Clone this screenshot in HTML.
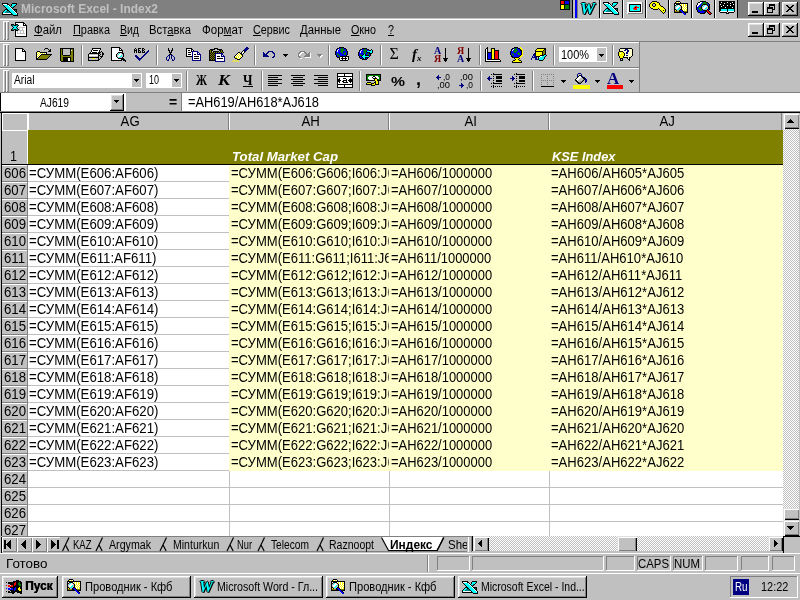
<!DOCTYPE html><html lang="ru"><head><meta charset="utf-8"><title>Microsoft Excel - Index2</title><style>
html,body{margin:0;padding:0}
body{width:800px;height:600px;overflow:hidden;position:relative;background:#c0c0c0;font-family:"Liberation Sans",sans-serif;font-size:12px;color:#000;-webkit-font-smoothing:none}
div,span,svg{position:absolute;box-sizing:border-box}
.t{white-space:nowrap;line-height:1}
.ui{font-size:12.5px}
.cell{font-size:14px;white-space:nowrap;overflow:hidden;line-height:17px;height:17px;transform:scaleX(0.943);transform-origin:0 0}
.hl{background:#fff}.sh{background:#808080}.bk{background:#000}
.raised{background:#c0c0c0;box-shadow:inset -1px -1px 0 #000,inset 1px 1px 0 #fff,inset -2px -2px 0 #808080,inset 2px 2px 0 #dfdfdf}
.raised2{background:#c0c0c0;box-shadow:inset -1px -1px 0 #000,inset 1px 1px 0 #dfdfdf,inset -2px -2px 0 #808080,inset 2px 2px 0 #fff}
.hsb{background:#c0c0c0;box-shadow:inset 1px 1px 0 #dfdfdf,inset 2px 2px 0 #fff,inset -1px 0 0 #000,inset -2px -1px 0 #808080}
.vsb{background:#c0c0c0;box-shadow:inset 1px 1px 0 #dfdfdf,inset 2px 2px 0 #fff,inset 0 -1px 0 #000,inset -1px -2px 0 #808080}
.sunk{box-shadow:inset -1px -1px 0 #fff,inset 1px 1px 0 #808080}
.sunk2{box-shadow:inset -1px -1px 0 #fff,inset 1px 1px 0 #808080,inset -2px -2px 0 #c0c0c0,inset 2px 2px 0 #000}
.dither{background:repeating-conic-gradient(#fff 0% 25%,#c0c0c0 0% 50%) 0 0/2px 2px}
.grip{width:3px;background:#c0c0c0;box-shadow:inset 1px 1px 0 #fff,inset -1px -1px 0 #808080}
.sep{width:2px;background:#fff;border-left:1px solid #808080}
u{text-decoration:underline;text-decoration-thickness:1px;text-underline-offset:1px}
</style></head><body><div id="r" style="left:0;top:0;width:800px;height:600px;overflow:hidden;will-change:transform">
<div class="" style="left:0px;top:0px;width:800px;height:18px;background:#808080"></div>
<svg style="left:2px;top:3px" width="16" height="13" viewBox="0 0 16 13" shape-rendering="crispEdges"><rect x="0" y="0" width="6" height="1" fill="#000"/><rect x="10" y="0" width="5" height="1" fill="#000"/><rect x="0" y="1" width="1" height="1" fill="#000"/><rect x="1" y="1" width="4" height="1" fill="#fff"/><rect x="5" y="1" width="2" height="1" fill="#000"/><rect x="9" y="1" width="1" height="1" fill="#000"/><rect x="10" y="1" width="4" height="1" fill="#00ffff"/><rect x="14" y="1" width="1" height="1" fill="#000"/><rect x="1" y="2" width="1" height="1" fill="#000"/><rect x="2" y="2" width="4" height="1" fill="#00ffff"/><rect x="6" y="2" width="1" height="1" fill="#fff"/><rect x="7" y="2" width="1" height="1" fill="#000"/><rect x="9" y="2" width="1" height="1" fill="#000"/><rect x="10" y="2" width="3" height="1" fill="#00ffff"/><rect x="13" y="2" width="1" height="1" fill="#000"/><rect x="2" y="3" width="1" height="1" fill="#000"/><rect x="3" y="3" width="4" height="1" fill="#00ffff"/><rect x="7" y="3" width="1" height="1" fill="#fff"/><rect x="8" y="3" width="1" height="1" fill="#000"/><rect x="9" y="3" width="2" height="1" fill="#00ffff"/><rect x="11" y="3" width="1" height="1" fill="#008080"/><rect x="12" y="3" width="1" height="1" fill="#000"/><rect x="3" y="4" width="1" height="1" fill="#000"/><rect x="4" y="4" width="4" height="1" fill="#00ffff"/><rect x="8" y="4" width="1" height="1" fill="#fff"/><rect x="9" y="4" width="1" height="1" fill="#000"/><rect x="10" y="4" width="1" height="1" fill="#008080"/><rect x="11" y="4" width="1" height="1" fill="#000"/><rect x="4" y="5" width="1" height="1" fill="#000"/><rect x="5" y="5" width="4" height="1" fill="#00ffff"/><rect x="9" y="5" width="1" height="1" fill="#fff"/><rect x="10" y="5" width="1" height="1" fill="#000"/><rect x="3" y="6" width="3" height="1" fill="#000"/><rect x="6" y="6" width="4" height="1" fill="#00ffff"/><rect x="10" y="6" width="1" height="1" fill="#fff"/><rect x="11" y="6" width="4" height="1" fill="#000"/><rect x="2" y="7" width="1" height="1" fill="#000"/><rect x="3" y="7" width="2" height="1" fill="#00ffff"/><rect x="5" y="7" width="2" height="1" fill="#000"/><rect x="7" y="7" width="4" height="1" fill="#00ffff"/><rect x="11" y="7" width="1" height="1" fill="#fff"/><rect x="12" y="7" width="1" height="1" fill="#000"/><rect x="13" y="7" width="1" height="1" fill="#008080"/><rect x="14" y="7" width="1" height="1" fill="#000"/><rect x="1" y="8" width="1" height="1" fill="#000"/><rect x="2" y="8" width="2" height="1" fill="#00ffff"/><rect x="4" y="8" width="3" height="1" fill="#008080"/><rect x="7" y="8" width="1" height="1" fill="#000"/><rect x="8" y="8" width="4" height="1" fill="#00ffff"/><rect x="12" y="8" width="1" height="1" fill="#fff"/><rect x="13" y="8" width="2" height="1" fill="#000"/><rect x="0" y="9" width="1" height="1" fill="#000"/><rect x="1" y="9" width="2" height="1" fill="#00ffff"/><rect x="3" y="9" width="5" height="1" fill="#008080"/><rect x="8" y="9" width="1" height="1" fill="#000"/><rect x="9" y="9" width="4" height="1" fill="#00ffff"/><rect x="13" y="9" width="1" height="1" fill="#fff"/><rect x="14" y="9" width="1" height="1" fill="#000"/><rect x="0" y="10" width="1" height="1" fill="#000"/><rect x="1" y="10" width="8" height="1" fill="#fff"/><rect x="9" y="10" width="1" height="1" fill="#000"/><rect x="10" y="10" width="4" height="1" fill="#00ffff"/><rect x="14" y="10" width="1" height="1" fill="#fff"/><rect x="15" y="10" width="1" height="1" fill="#000"/><rect x="0" y="11" width="11" height="1" fill="#000"/><rect x="11" y="11" width="4" height="1" fill="#00ffff"/><rect x="15" y="11" width="1" height="1" fill="#000"/><rect x="11" y="12" width="5" height="1" fill="#000"/></svg>
<span class="t" style="left:21px;top:2px;font-weight:bold;font-size:13px;color:#c0c0c0;transform:scaleX(0.9205);transform-origin:0 0">Microsoft Excel - Index2</span>
<svg style="left:560px;top:0px" width="10" height="10" viewBox="0 0 10 10" shape-rendering="crispEdges"><rect x="0" y="0" width="10" height="1" fill="#000"/><rect x="0" y="1" width="1" height="1" fill="#000"/><rect x="1" y="1" width="3" height="1" fill="#ff0000"/><rect x="4" y="1" width="1" height="1" fill="#000"/><rect x="5" y="1" width="4" height="1" fill="#0000ff"/><rect x="9" y="1" width="1" height="1" fill="#000"/><rect x="0" y="2" width="1" height="1" fill="#000"/><rect x="1" y="2" width="3" height="1" fill="#ff0000"/><rect x="4" y="2" width="1" height="1" fill="#000"/><rect x="5" y="2" width="4" height="1" fill="#0000ff"/><rect x="9" y="2" width="1" height="1" fill="#000"/><rect x="0" y="3" width="1" height="1" fill="#000"/><rect x="1" y="3" width="3" height="1" fill="#ff0000"/><rect x="4" y="3" width="1" height="1" fill="#000"/><rect x="5" y="3" width="4" height="1" fill="#0000ff"/><rect x="9" y="3" width="1" height="1" fill="#000"/><rect x="0" y="4" width="10" height="1" fill="#000"/><rect x="0" y="5" width="1" height="1" fill="#000"/><rect x="1" y="5" width="3" height="1" fill="#ffff00"/><rect x="4" y="5" width="1" height="1" fill="#000"/><rect x="5" y="5" width="4" height="1" fill="#008000"/><rect x="9" y="5" width="1" height="1" fill="#000"/><rect x="0" y="6" width="1" height="1" fill="#000"/><rect x="1" y="6" width="3" height="1" fill="#ffff00"/><rect x="4" y="6" width="1" height="1" fill="#000"/><rect x="5" y="6" width="4" height="1" fill="#008000"/><rect x="9" y="6" width="1" height="1" fill="#000"/><rect x="0" y="7" width="1" height="1" fill="#000"/><rect x="1" y="7" width="3" height="1" fill="#ffff00"/><rect x="4" y="7" width="1" height="1" fill="#000"/><rect x="5" y="7" width="4" height="1" fill="#008000"/><rect x="9" y="7" width="1" height="1" fill="#000"/><rect x="0" y="8" width="1" height="1" fill="#000"/><rect x="1" y="8" width="3" height="1" fill="#ffff00"/><rect x="4" y="8" width="1" height="1" fill="#000"/><rect x="5" y="8" width="4" height="1" fill="#008000"/><rect x="9" y="8" width="1" height="1" fill="#000"/><rect x="0" y="9" width="10" height="1" fill="#000"/></svg>
<div class="bk" style="left:572px;top:0px;width:1px;height:18px;"></div>
<div class="" style="left:573px;top:0px;width:2px;height:18px;background:#c0c0c0"></div>
<div class="" style="left:575px;top:0px;width:2px;height:18px;background:#0000ff"></div>
<div class="" style="left:578px;top:0px;width:21px;height:18px;background:#c0c0c0"></div>
<div class="bk" style="left:599px;top:0px;width:1px;height:18px;"></div>
<div class="hl" style="left:600px;top:0px;width:1px;height:18px;"></div>
<div class="" style="left:601px;top:0px;width:21px;height:18px;background:#c0c0c0"></div>
<svg style="left:603px;top:2px" width="16" height="13" viewBox="0 0 16 13" shape-rendering="crispEdges"><rect x="0" y="0" width="6" height="1" fill="#000"/><rect x="10" y="0" width="5" height="1" fill="#000"/><rect x="0" y="1" width="1" height="1" fill="#000"/><rect x="1" y="1" width="4" height="1" fill="#fff"/><rect x="5" y="1" width="2" height="1" fill="#000"/><rect x="9" y="1" width="1" height="1" fill="#000"/><rect x="10" y="1" width="4" height="1" fill="#00ffff"/><rect x="14" y="1" width="1" height="1" fill="#000"/><rect x="1" y="2" width="1" height="1" fill="#000"/><rect x="2" y="2" width="4" height="1" fill="#00ffff"/><rect x="6" y="2" width="1" height="1" fill="#fff"/><rect x="7" y="2" width="1" height="1" fill="#000"/><rect x="9" y="2" width="1" height="1" fill="#000"/><rect x="10" y="2" width="3" height="1" fill="#00ffff"/><rect x="13" y="2" width="1" height="1" fill="#000"/><rect x="2" y="3" width="1" height="1" fill="#000"/><rect x="3" y="3" width="4" height="1" fill="#00ffff"/><rect x="7" y="3" width="1" height="1" fill="#fff"/><rect x="8" y="3" width="1" height="1" fill="#000"/><rect x="9" y="3" width="2" height="1" fill="#00ffff"/><rect x="11" y="3" width="1" height="1" fill="#008080"/><rect x="12" y="3" width="1" height="1" fill="#000"/><rect x="3" y="4" width="1" height="1" fill="#000"/><rect x="4" y="4" width="4" height="1" fill="#00ffff"/><rect x="8" y="4" width="1" height="1" fill="#fff"/><rect x="9" y="4" width="1" height="1" fill="#000"/><rect x="10" y="4" width="1" height="1" fill="#008080"/><rect x="11" y="4" width="1" height="1" fill="#000"/><rect x="4" y="5" width="1" height="1" fill="#000"/><rect x="5" y="5" width="4" height="1" fill="#00ffff"/><rect x="9" y="5" width="1" height="1" fill="#fff"/><rect x="10" y="5" width="1" height="1" fill="#000"/><rect x="3" y="6" width="3" height="1" fill="#000"/><rect x="6" y="6" width="4" height="1" fill="#00ffff"/><rect x="10" y="6" width="1" height="1" fill="#fff"/><rect x="11" y="6" width="4" height="1" fill="#000"/><rect x="2" y="7" width="1" height="1" fill="#000"/><rect x="3" y="7" width="2" height="1" fill="#00ffff"/><rect x="5" y="7" width="2" height="1" fill="#000"/><rect x="7" y="7" width="4" height="1" fill="#00ffff"/><rect x="11" y="7" width="1" height="1" fill="#fff"/><rect x="12" y="7" width="1" height="1" fill="#000"/><rect x="13" y="7" width="1" height="1" fill="#008080"/><rect x="14" y="7" width="1" height="1" fill="#000"/><rect x="1" y="8" width="1" height="1" fill="#000"/><rect x="2" y="8" width="2" height="1" fill="#00ffff"/><rect x="4" y="8" width="3" height="1" fill="#008080"/><rect x="7" y="8" width="1" height="1" fill="#000"/><rect x="8" y="8" width="4" height="1" fill="#00ffff"/><rect x="12" y="8" width="1" height="1" fill="#fff"/><rect x="13" y="8" width="2" height="1" fill="#000"/><rect x="0" y="9" width="1" height="1" fill="#000"/><rect x="1" y="9" width="2" height="1" fill="#00ffff"/><rect x="3" y="9" width="5" height="1" fill="#008080"/><rect x="8" y="9" width="1" height="1" fill="#000"/><rect x="9" y="9" width="4" height="1" fill="#00ffff"/><rect x="13" y="9" width="1" height="1" fill="#fff"/><rect x="14" y="9" width="1" height="1" fill="#000"/><rect x="0" y="10" width="1" height="1" fill="#000"/><rect x="1" y="10" width="8" height="1" fill="#fff"/><rect x="9" y="10" width="1" height="1" fill="#000"/><rect x="10" y="10" width="4" height="1" fill="#00ffff"/><rect x="14" y="10" width="1" height="1" fill="#fff"/><rect x="15" y="10" width="1" height="1" fill="#000"/><rect x="0" y="11" width="11" height="1" fill="#000"/><rect x="11" y="11" width="4" height="1" fill="#00ffff"/><rect x="15" y="11" width="1" height="1" fill="#000"/><rect x="11" y="12" width="5" height="1" fill="#000"/></svg>
<div class="bk" style="left:622px;top:0px;width:1px;height:18px;"></div>
<div class="hl" style="left:623px;top:0px;width:1px;height:18px;"></div>
<div class="" style="left:624px;top:0px;width:21px;height:18px;background:#c0c0c0"></div>
<svg style="left:627px;top:2px" width="16" height="12" viewBox="0 0 16 12" shape-rendering="crispEdges"><rect x="0" y="0" width="15" height="1" fill="#fff"/><rect x="15" y="0" width="1" height="1" fill="#808080"/><rect x="0" y="1" width="15" height="1" fill="#fff"/><rect x="15" y="1" width="1" height="1" fill="#808080"/><rect x="0" y="2" width="2" height="1" fill="#fff"/><rect x="2" y="2" width="12" height="1" fill="#000"/><rect x="14" y="2" width="1" height="1" fill="#fff"/><rect x="15" y="2" width="1" height="1" fill="#808080"/><rect x="0" y="3" width="2" height="1" fill="#fff"/><rect x="2" y="3" width="1" height="1" fill="#000"/><rect x="3" y="3" width="10" height="1" fill="#00ffff"/><rect x="13" y="3" width="1" height="1" fill="#000"/><rect x="14" y="3" width="1" height="1" fill="#fff"/><rect x="15" y="3" width="1" height="1" fill="#808080"/><rect x="0" y="4" width="2" height="1" fill="#fff"/><rect x="2" y="4" width="1" height="1" fill="#000"/><rect x="3" y="4" width="5" height="1" fill="#00ffff"/><rect x="8" y="4" width="2" height="1" fill="#ff0000"/><rect x="10" y="4" width="3" height="1" fill="#00ffff"/><rect x="13" y="4" width="1" height="1" fill="#000"/><rect x="14" y="4" width="1" height="1" fill="#fff"/><rect x="15" y="4" width="1" height="1" fill="#808080"/><rect x="0" y="5" width="2" height="1" fill="#fff"/><rect x="2" y="5" width="1" height="1" fill="#000"/><rect x="3" y="5" width="4" height="1" fill="#00ffff"/><rect x="7" y="5" width="1" height="1" fill="#ff0000"/><rect x="8" y="5" width="1" height="1" fill="#000"/><rect x="9" y="5" width="3" height="1" fill="#ff0000"/><rect x="12" y="5" width="1" height="1" fill="#00ffff"/><rect x="13" y="5" width="1" height="1" fill="#000"/><rect x="14" y="5" width="1" height="1" fill="#fff"/><rect x="15" y="5" width="1" height="1" fill="#808080"/><rect x="0" y="6" width="2" height="1" fill="#fff"/><rect x="2" y="6" width="1" height="1" fill="#000"/><rect x="3" y="6" width="3" height="1" fill="#00ffff"/><rect x="6" y="6" width="4" height="1" fill="#ff0000"/><rect x="10" y="6" width="3" height="1" fill="#00ffff"/><rect x="13" y="6" width="1" height="1" fill="#000"/><rect x="14" y="6" width="1" height="1" fill="#fff"/><rect x="15" y="6" width="1" height="1" fill="#808080"/><rect x="0" y="7" width="2" height="1" fill="#fff"/><rect x="2" y="7" width="1" height="1" fill="#000"/><rect x="3" y="7" width="4" height="1" fill="#00ffff"/><rect x="7" y="7" width="3" height="1" fill="#ff0000"/><rect x="10" y="7" width="3" height="1" fill="#00ffff"/><rect x="13" y="7" width="1" height="1" fill="#000"/><rect x="14" y="7" width="1" height="1" fill="#fff"/><rect x="15" y="7" width="1" height="1" fill="#808080"/><rect x="0" y="8" width="2" height="1" fill="#fff"/><rect x="2" y="8" width="1" height="1" fill="#000"/><rect x="3" y="8" width="10" height="1" fill="#00ffff"/><rect x="13" y="8" width="1" height="1" fill="#000"/><rect x="14" y="8" width="1" height="1" fill="#fff"/><rect x="15" y="8" width="1" height="1" fill="#808080"/><rect x="0" y="9" width="2" height="1" fill="#fff"/><rect x="2" y="9" width="12" height="1" fill="#000"/><rect x="14" y="9" width="1" height="1" fill="#fff"/><rect x="15" y="9" width="1" height="1" fill="#808080"/><rect x="0" y="10" width="15" height="1" fill="#fff"/><rect x="15" y="10" width="1" height="1" fill="#808080"/><rect x="0" y="11" width="1" height="1" fill="#fff"/><rect x="1" y="11" width="15" height="1" fill="#808080"/></svg>
<div class="bk" style="left:645px;top:0px;width:1px;height:18px;"></div>
<div class="hl" style="left:646px;top:0px;width:1px;height:18px;"></div>
<div class="" style="left:647px;top:0px;width:21px;height:18px;background:#c0c0c0"></div>
<svg style="left:649px;top:1px" width="17" height="13" viewBox="0 0 17 13" shape-rendering="crispEdges"><rect x="3" y="0" width="5" height="1" fill="#000"/><rect x="2" y="1" width="1" height="1" fill="#000"/><rect x="3" y="1" width="5" height="1" fill="#ffff00"/><rect x="8" y="1" width="2" height="1" fill="#000"/><rect x="1" y="2" width="1" height="1" fill="#000"/><rect x="2" y="2" width="2" height="1" fill="#ffff00"/><rect x="4" y="2" width="2" height="1" fill="#000"/><rect x="6" y="2" width="4" height="1" fill="#ffff00"/><rect x="10" y="2" width="1" height="1" fill="#000"/><rect x="0" y="3" width="1" height="1" fill="#000"/><rect x="1" y="3" width="2" height="1" fill="#ffff00"/><rect x="3" y="3" width="1" height="1" fill="#000"/><rect x="6" y="3" width="1" height="1" fill="#000"/><rect x="7" y="3" width="3" height="1" fill="#ffff00"/><rect x="10" y="3" width="1" height="1" fill="#000"/><rect x="0" y="4" width="1" height="1" fill="#000"/><rect x="1" y="4" width="2" height="1" fill="#ffff00"/><rect x="3" y="4" width="1" height="1" fill="#000"/><rect x="6" y="4" width="1" height="1" fill="#000"/><rect x="7" y="4" width="4" height="1" fill="#ffff00"/><rect x="11" y="4" width="1" height="1" fill="#000"/><rect x="0" y="5" width="1" height="1" fill="#000"/><rect x="1" y="5" width="3" height="1" fill="#ffff00"/><rect x="4" y="5" width="2" height="1" fill="#000"/><rect x="6" y="5" width="6" height="1" fill="#ffff00"/><rect x="12" y="5" width="2" height="1" fill="#000"/><rect x="1" y="6" width="1" height="1" fill="#000"/><rect x="2" y="6" width="12" height="1" fill="#ffff00"/><rect x="14" y="6" width="1" height="1" fill="#000"/><rect x="2" y="7" width="2" height="1" fill="#000"/><rect x="4" y="7" width="5" height="1" fill="#ffff00"/><rect x="9" y="7" width="1" height="1" fill="#000"/><rect x="10" y="7" width="5" height="1" fill="#ffff00"/><rect x="15" y="7" width="1" height="1" fill="#000"/><rect x="4" y="8" width="5" height="1" fill="#000"/><rect x="10" y="8" width="1" height="1" fill="#000"/><rect x="11" y="8" width="5" height="1" fill="#ffff00"/><rect x="16" y="8" width="1" height="1" fill="#000"/><rect x="11" y="9" width="1" height="1" fill="#000"/><rect x="12" y="9" width="2" height="1" fill="#ffff00"/><rect x="14" y="9" width="1" height="1" fill="#000"/><rect x="15" y="9" width="1" height="1" fill="#ffff00"/><rect x="16" y="9" width="1" height="1" fill="#000"/><rect x="12" y="10" width="1" height="1" fill="#000"/><rect x="13" y="10" width="3" height="1" fill="#ffff00"/><rect x="16" y="10" width="1" height="1" fill="#000"/><rect x="13" y="11" width="1" height="1" fill="#000"/><rect x="14" y="11" width="1" height="1" fill="#ffff00"/><rect x="15" y="11" width="1" height="1" fill="#000"/><rect x="14" y="12" width="1" height="1" fill="#000"/></svg>
<div class="bk" style="left:668px;top:0px;width:1px;height:18px;"></div>
<div class="hl" style="left:669px;top:0px;width:1px;height:18px;"></div>
<div class="" style="left:670px;top:0px;width:21px;height:18px;background:#c0c0c0"></div>
<svg style="left:674px;top:1px" width="16" height="14" viewBox="0 0 16 14" shape-rendering="crispEdges"><rect x="2" y="0" width="4" height="1" fill="#000"/><rect x="1" y="1" width="1" height="1" fill="#000"/><rect x="2" y="1" width="1" height="1" fill="#ffff00"/><rect x="3" y="1" width="1" height="1" fill="#fff"/><rect x="4" y="1" width="1" height="1" fill="#ffff00"/><rect x="5" y="1" width="1" height="1" fill="#fff"/><rect x="6" y="1" width="1" height="1" fill="#000"/><rect x="0" y="2" width="14" height="1" fill="#000"/><rect x="0" y="3" width="1" height="1" fill="#000"/><rect x="1" y="3" width="1" height="1" fill="#fff"/><rect x="2" y="3" width="4" height="1" fill="#000"/><rect x="6" y="3" width="1" height="1" fill="#fff"/><rect x="7" y="3" width="1" height="1" fill="#ffff00"/><rect x="8" y="3" width="1" height="1" fill="#fff"/><rect x="9" y="3" width="1" height="1" fill="#ffff00"/><rect x="10" y="3" width="1" height="1" fill="#fff"/><rect x="11" y="3" width="1" height="1" fill="#ffff00"/><rect x="12" y="3" width="1" height="1" fill="#fff"/><rect x="13" y="3" width="1" height="1" fill="#000"/><rect x="0" y="4" width="2" height="1" fill="#000"/><rect x="2" y="4" width="1" height="1" fill="#c0c0c0"/><rect x="3" y="4" width="1" height="1" fill="#00ffff"/><rect x="4" y="4" width="1" height="1" fill="#fff"/><rect x="5" y="4" width="1" height="1" fill="#c0c0c0"/><rect x="6" y="4" width="1" height="1" fill="#000"/><rect x="7" y="4" width="1" height="1" fill="#ffff00"/><rect x="8" y="4" width="1" height="1" fill="#fff"/><rect x="9" y="4" width="1" height="1" fill="#ffff00"/><rect x="10" y="4" width="1" height="1" fill="#fff"/><rect x="11" y="4" width="2" height="1" fill="#ffff00"/><rect x="13" y="4" width="1" height="1" fill="#000"/><rect x="0" y="5" width="1" height="1" fill="#000"/><rect x="1" y="5" width="1" height="1" fill="#c0c0c0"/><rect x="2" y="5" width="1" height="1" fill="#00ffff"/><rect x="3" y="5" width="3" height="1" fill="#fff"/><rect x="6" y="5" width="1" height="1" fill="#c0c0c0"/><rect x="7" y="5" width="1" height="1" fill="#000"/><rect x="8" y="5" width="1" height="1" fill="#fff"/><rect x="9" y="5" width="1" height="1" fill="#ffff00"/><rect x="10" y="5" width="1" height="1" fill="#fff"/><rect x="11" y="5" width="1" height="1" fill="#ffff00"/><rect x="12" y="5" width="1" height="1" fill="#fff"/><rect x="13" y="5" width="1" height="1" fill="#000"/><rect x="0" y="6" width="1" height="1" fill="#000"/><rect x="1" y="6" width="1" height="1" fill="#c0c0c0"/><rect x="2" y="6" width="3" height="1" fill="#fff"/><rect x="5" y="6" width="1" height="1" fill="#00ffff"/><rect x="6" y="6" width="1" height="1" fill="#c0c0c0"/><rect x="7" y="6" width="1" height="1" fill="#000"/><rect x="8" y="6" width="1" height="1" fill="#ffff00"/><rect x="9" y="6" width="1" height="1" fill="#fff"/><rect x="10" y="6" width="1" height="1" fill="#ffff00"/><rect x="11" y="6" width="1" height="1" fill="#fff"/><rect x="12" y="6" width="1" height="1" fill="#ffff00"/><rect x="13" y="6" width="1" height="1" fill="#000"/><rect x="0" y="7" width="1" height="1" fill="#000"/><rect x="1" y="7" width="1" height="1" fill="#c0c0c0"/><rect x="2" y="7" width="2" height="1" fill="#fff"/><rect x="4" y="7" width="2" height="1" fill="#00ffff"/><rect x="6" y="7" width="1" height="1" fill="#c0c0c0"/><rect x="7" y="7" width="1" height="1" fill="#000"/><rect x="8" y="7" width="1" height="1" fill="#fff"/><rect x="9" y="7" width="1" height="1" fill="#ffff00"/><rect x="10" y="7" width="1" height="1" fill="#fff"/><rect x="11" y="7" width="1" height="1" fill="#ffff00"/><rect x="12" y="7" width="1" height="1" fill="#fff"/><rect x="13" y="7" width="1" height="1" fill="#000"/><rect x="0" y="8" width="2" height="1" fill="#000"/><rect x="2" y="8" width="1" height="1" fill="#c0c0c0"/><rect x="3" y="8" width="2" height="1" fill="#00ffff"/><rect x="5" y="8" width="1" height="1" fill="#c0c0c0"/><rect x="6" y="8" width="2" height="1" fill="#000"/><rect x="8" y="8" width="1" height="1" fill="#ffff00"/><rect x="9" y="8" width="1" height="1" fill="#fff"/><rect x="10" y="8" width="1" height="1" fill="#ffff00"/><rect x="11" y="8" width="1" height="1" fill="#fff"/><rect x="12" y="8" width="1" height="1" fill="#ffff00"/><rect x="13" y="8" width="1" height="1" fill="#000"/><rect x="0" y="9" width="1" height="1" fill="#000"/><rect x="1" y="9" width="1" height="1" fill="#ffff00"/><rect x="2" y="9" width="1" height="1" fill="#000"/><rect x="3" y="9" width="2" height="1" fill="#c0c0c0"/><rect x="5" y="9" width="1" height="1" fill="#000"/><rect x="6" y="9" width="2" height="1" fill="#0000ff"/><rect x="8" y="9" width="1" height="1" fill="#000"/><rect x="9" y="9" width="1" height="1" fill="#fff"/><rect x="10" y="9" width="1" height="1" fill="#ffff00"/><rect x="11" y="9" width="1" height="1" fill="#fff"/><rect x="12" y="9" width="1" height="1" fill="#ffff00"/><rect x="13" y="9" width="1" height="1" fill="#000"/><rect x="0" y="10" width="1" height="1" fill="#000"/><rect x="1" y="10" width="4" height="1" fill="#808000"/><rect x="5" y="10" width="2" height="1" fill="#000"/><rect x="7" y="10" width="2" height="1" fill="#0000ff"/><rect x="9" y="10" width="1" height="1" fill="#000"/><rect x="10" y="10" width="3" height="1" fill="#808000"/><rect x="13" y="10" width="1" height="1" fill="#000"/><rect x="0" y="11" width="8" height="1" fill="#000"/><rect x="8" y="11" width="2" height="1" fill="#0000ff"/><rect x="10" y="11" width="4" height="1" fill="#000"/><rect x="9" y="12" width="2" height="1" fill="#0000ff"/><rect x="11" y="12" width="1" height="1" fill="#000"/><rect x="10" y="13" width="2" height="1" fill="#0000ff"/></svg>
<div class="bk" style="left:691px;top:0px;width:1px;height:18px;"></div>
<div class="hl" style="left:692px;top:0px;width:1px;height:18px;"></div>
<div class="" style="left:693px;top:0px;width:21px;height:18px;background:#c0c0c0"></div>
<svg style="left:696px;top:1px" width="16" height="14" viewBox="0 0 16 14" shape-rendering="crispEdges"><rect x="4" y="0" width="6" height="1" fill="#000"/><rect x="2" y="1" width="2" height="1" fill="#000"/><rect x="4" y="1" width="2" height="1" fill="#fff"/><rect x="6" y="1" width="1" height="1" fill="#0000ff"/><rect x="7" y="1" width="3" height="1" fill="#008000"/><rect x="10" y="1" width="2" height="1" fill="#000"/><rect x="1" y="2" width="1" height="1" fill="#000"/><rect x="2" y="2" width="3" height="1" fill="#fff"/><rect x="5" y="2" width="1" height="1" fill="#0000ff"/><rect x="6" y="2" width="5" height="1" fill="#008000"/><rect x="11" y="2" width="1" height="1" fill="#0000ff"/><rect x="12" y="2" width="1" height="1" fill="#000"/><rect x="1" y="3" width="1" height="1" fill="#000"/><rect x="2" y="3" width="2" height="1" fill="#fff"/><rect x="4" y="3" width="2" height="1" fill="#0000ff"/><rect x="6" y="3" width="1" height="1" fill="#008000"/><rect x="7" y="3" width="4" height="1" fill="#000"/><rect x="11" y="3" width="1" height="1" fill="#008000"/><rect x="12" y="3" width="1" height="1" fill="#0000ff"/><rect x="13" y="3" width="1" height="1" fill="#000"/><rect x="0" y="4" width="1" height="1" fill="#000"/><rect x="1" y="4" width="2" height="1" fill="#fff"/><rect x="3" y="4" width="2" height="1" fill="#0000ff"/><rect x="5" y="4" width="1" height="1" fill="#008000"/><rect x="6" y="4" width="1" height="1" fill="#000"/><rect x="7" y="4" width="1" height="1" fill="#c0c0c0"/><rect x="8" y="4" width="1" height="1" fill="#00ffff"/><rect x="9" y="4" width="1" height="1" fill="#fff"/><rect x="10" y="4" width="1" height="1" fill="#c0c0c0"/><rect x="11" y="4" width="1" height="1" fill="#000"/><rect x="12" y="4" width="1" height="1" fill="#0000ff"/><rect x="13" y="4" width="1" height="1" fill="#000"/><rect x="0" y="5" width="1" height="1" fill="#000"/><rect x="1" y="5" width="1" height="1" fill="#fff"/><rect x="2" y="5" width="3" height="1" fill="#0000ff"/><rect x="5" y="5" width="1" height="1" fill="#000"/><rect x="6" y="5" width="1" height="1" fill="#c0c0c0"/><rect x="7" y="5" width="1" height="1" fill="#00ffff"/><rect x="8" y="5" width="3" height="1" fill="#fff"/><rect x="11" y="5" width="1" height="1" fill="#c0c0c0"/><rect x="12" y="5" width="2" height="1" fill="#000"/><rect x="0" y="6" width="1" height="1" fill="#000"/><rect x="1" y="6" width="2" height="1" fill="#0000ff"/><rect x="3" y="6" width="2" height="1" fill="#008000"/><rect x="5" y="6" width="1" height="1" fill="#000"/><rect x="6" y="6" width="1" height="1" fill="#c0c0c0"/><rect x="7" y="6" width="3" height="1" fill="#fff"/><rect x="10" y="6" width="1" height="1" fill="#00ffff"/><rect x="11" y="6" width="1" height="1" fill="#c0c0c0"/><rect x="12" y="6" width="2" height="1" fill="#000"/><rect x="0" y="7" width="1" height="1" fill="#000"/><rect x="1" y="7" width="1" height="1" fill="#0000ff"/><rect x="2" y="7" width="3" height="1" fill="#008000"/><rect x="5" y="7" width="1" height="1" fill="#000"/><rect x="6" y="7" width="1" height="1" fill="#c0c0c0"/><rect x="7" y="7" width="2" height="1" fill="#fff"/><rect x="9" y="7" width="2" height="1" fill="#00ffff"/><rect x="11" y="7" width="1" height="1" fill="#c0c0c0"/><rect x="12" y="7" width="2" height="1" fill="#000"/><rect x="0" y="8" width="1" height="1" fill="#000"/><rect x="1" y="8" width="2" height="1" fill="#0000ff"/><rect x="3" y="8" width="3" height="1" fill="#008000"/><rect x="6" y="8" width="1" height="1" fill="#000"/><rect x="7" y="8" width="1" height="1" fill="#c0c0c0"/><rect x="8" y="8" width="1" height="1" fill="#00ffff"/><rect x="9" y="8" width="2" height="1" fill="#c0c0c0"/><rect x="11" y="8" width="1" height="1" fill="#000"/><rect x="12" y="8" width="1" height="1" fill="#0000ff"/><rect x="13" y="8" width="1" height="1" fill="#000"/><rect x="1" y="9" width="1" height="1" fill="#000"/><rect x="2" y="9" width="2" height="1" fill="#0000ff"/><rect x="4" y="9" width="2" height="1" fill="#008000"/><rect x="6" y="9" width="1" height="1" fill="#0000ff"/><rect x="7" y="9" width="4" height="1" fill="#000"/><rect x="11" y="9" width="1" height="1" fill="#ff0000"/><rect x="12" y="9" width="1" height="1" fill="#000"/><rect x="1" y="10" width="1" height="1" fill="#000"/><rect x="2" y="10" width="7" height="1" fill="#0000ff"/><rect x="9" y="10" width="2" height="1" fill="#000"/><rect x="11" y="10" width="2" height="1" fill="#ff0000"/><rect x="13" y="10" width="1" height="1" fill="#000"/><rect x="2" y="11" width="2" height="1" fill="#000"/><rect x="4" y="11" width="4" height="1" fill="#0000ff"/><rect x="8" y="11" width="2" height="1" fill="#000"/><rect x="11" y="11" width="1" height="1" fill="#000"/><rect x="12" y="11" width="2" height="1" fill="#ff0000"/><rect x="14" y="11" width="1" height="1" fill="#000"/><rect x="4" y="12" width="5" height="1" fill="#000"/><rect x="12" y="12" width="1" height="1" fill="#000"/><rect x="13" y="12" width="2" height="1" fill="#ff0000"/><rect x="15" y="12" width="1" height="1" fill="#000"/><rect x="13" y="13" width="2" height="1" fill="#000"/></svg>
<div class="bk" style="left:714px;top:0px;width:1px;height:18px;"></div>
<div class="hl" style="left:715px;top:0px;width:1px;height:18px;"></div>
<div class="" style="left:716px;top:0px;width:21px;height:18px;background:#c0c0c0"></div>
<svg style="left:719px;top:1px" width="16" height="13" viewBox="0 0 16 13" shape-rendering="crispEdges"><rect x="0" y="0" width="16" height="1" fill="#000"/><rect x="0" y="1" width="2" height="1" fill="#000"/><rect x="2" y="1" width="1" height="1" fill="#fff"/><rect x="3" y="1" width="5" height="1" fill="#000"/><rect x="8" y="1" width="1" height="1" fill="#fff"/><rect x="9" y="1" width="4" height="1" fill="#000"/><rect x="13" y="1" width="1" height="1" fill="#fff"/><rect x="14" y="1" width="2" height="1" fill="#000"/><rect x="0" y="2" width="5" height="1" fill="#000"/><rect x="5" y="2" width="1" height="1" fill="#fff"/><rect x="6" y="2" width="5" height="1" fill="#000"/><rect x="11" y="2" width="1" height="1" fill="#fff"/><rect x="12" y="2" width="4" height="1" fill="#000"/><rect x="0" y="3" width="1" height="1" fill="#000"/><rect x="1" y="3" width="1" height="1" fill="#fff"/><rect x="2" y="3" width="12" height="1" fill="#000"/><rect x="14" y="3" width="1" height="1" fill="#fff"/><rect x="15" y="3" width="1" height="1" fill="#000"/><rect x="0" y="4" width="4" height="1" fill="#000"/><rect x="4" y="4" width="1" height="1" fill="#fff"/><rect x="5" y="4" width="3" height="1" fill="#000"/><rect x="8" y="4" width="1" height="1" fill="#fff"/><rect x="9" y="4" width="2" height="1" fill="#000"/><rect x="11" y="4" width="1" height="1" fill="#fff"/><rect x="12" y="4" width="4" height="1" fill="#000"/><rect x="0" y="5" width="2" height="1" fill="#000"/><rect x="2" y="5" width="1" height="1" fill="#fff"/><rect x="3" y="5" width="13" height="1" fill="#000"/><rect x="0" y="6" width="6" height="1" fill="#000"/><rect x="6" y="6" width="1" height="1" fill="#fff"/><rect x="7" y="6" width="6" height="1" fill="#000"/><rect x="13" y="6" width="1" height="1" fill="#fff"/><rect x="14" y="6" width="2" height="1" fill="#000"/><rect x="0" y="7" width="16" height="1" fill="#000"/><rect x="0" y="8" width="2" height="1" fill="#000"/><rect x="2" y="8" width="6" height="1" fill="#00ffff"/><rect x="8" y="8" width="1" height="1" fill="#000"/><rect x="9" y="8" width="6" height="1" fill="#00ffff"/><rect x="15" y="8" width="1" height="1" fill="#000"/><rect x="0" y="9" width="2" height="1" fill="#000"/><rect x="2" y="9" width="6" height="1" fill="#00ffff"/><rect x="8" y="9" width="1" height="1" fill="#000"/><rect x="9" y="9" width="6" height="1" fill="#00ffff"/><rect x="15" y="9" width="1" height="1" fill="#000"/><rect x="0" y="10" width="1" height="1" fill="#000"/><rect x="1" y="10" width="7" height="1" fill="#fff"/><rect x="8" y="10" width="1" height="1" fill="#000"/><rect x="9" y="10" width="6" height="1" fill="#fff"/><rect x="15" y="10" width="1" height="1" fill="#000"/><rect x="1" y="11" width="7" height="1" fill="#000"/><rect x="8" y="11" width="1" height="1" fill="#fff"/><rect x="9" y="11" width="6" height="1" fill="#000"/><rect x="7" y="12" width="3" height="1" fill="#000"/></svg>
<div class="bk" style="left:737px;top:0px;width:1px;height:18px;"></div>
<span class="t" style="left:580px;top:0px;font-family:'Liberation Serif',serif;font-weight:bold;font-style:italic;font-size:17px;color:#00ffff;text-shadow:1px 0 #000,-1px 0 #000,0 1px #000,0 -1px #000,1px 1px #000;transform:scaleX(0.9917);transform-origin:0 0">W</span>
<div class="raised" style="left:748px;top:2px;width:16px;height:14px;"></div>
<svg style="left:748px;top:2px" width="16" height="11" viewBox="0 0 16 11" shape-rendering="crispEdges"><rect x="4" y="9" width="6" height="1" fill="#000"/><rect x="4" y="10" width="6" height="1" fill="#000"/></svg>
<div class="raised" style="left:764px;top:2px;width:16px;height:14px;"></div>
<svg style="left:764px;top:2px" width="16" height="11" viewBox="0 0 16 11" shape-rendering="crispEdges"><rect x="5" y="2" width="6" height="1" fill="#000"/><rect x="5" y="3" width="6" height="1" fill="#000"/><rect x="5" y="4" width="1" height="1" fill="#000"/><rect x="10" y="4" width="1" height="1" fill="#000"/><rect x="3" y="5" width="6" height="1" fill="#000"/><rect x="10" y="5" width="1" height="1" fill="#000"/><rect x="3" y="6" width="6" height="1" fill="#000"/><rect x="10" y="6" width="1" height="1" fill="#000"/><rect x="3" y="7" width="1" height="1" fill="#000"/><rect x="8" y="7" width="3" height="1" fill="#000"/><rect x="3" y="8" width="1" height="1" fill="#000"/><rect x="8" y="8" width="1" height="1" fill="#000"/><rect x="3" y="9" width="1" height="1" fill="#000"/><rect x="8" y="9" width="1" height="1" fill="#000"/><rect x="3" y="10" width="6" height="1" fill="#000"/></svg>
<div class="raised" style="left:782px;top:2px;width:16px;height:14px;"></div>
<svg style="left:782px;top:2px" width="16" height="10" viewBox="0 0 16 10" shape-rendering="crispEdges"><rect x="4" y="3" width="2" height="1" fill="#000"/><rect x="10" y="3" width="2" height="1" fill="#000"/><rect x="5" y="4" width="2" height="1" fill="#000"/><rect x="9" y="4" width="2" height="1" fill="#000"/><rect x="6" y="5" width="4" height="1" fill="#000"/><rect x="7" y="6" width="2" height="1" fill="#000"/><rect x="6" y="7" width="4" height="1" fill="#000"/><rect x="5" y="8" width="2" height="1" fill="#000"/><rect x="9" y="8" width="2" height="1" fill="#000"/><rect x="4" y="9" width="2" height="1" fill="#000"/><rect x="10" y="9" width="2" height="1" fill="#000"/></svg>
<div class="hl" style="left:0px;top:19px;width:800px;height:1px;"></div>
<div class="sh" style="left:0px;top:41px;width:800px;height:1px;"></div>
<div class="grip" style="left:3px;top:21px;width:3px;height:19px;"></div>
<div class="grip" style="left:6px;top:21px;width:3px;height:19px;"></div>
<svg style="left:11px;top:22px" width="16" height="15" viewBox="0 0 16 15" shape-rendering="crispEdges"><rect x="4" y="0" width="9" height="1" fill="#000"/><rect x="4" y="1" width="1" height="1" fill="#000"/><rect x="5" y="1" width="7" height="1" fill="#fff"/><rect x="12" y="1" width="2" height="1" fill="#000"/><rect x="0" y="2" width="3" height="1" fill="#000"/><rect x="4" y="2" width="3" height="1" fill="#000"/><rect x="7" y="2" width="5" height="1" fill="#fff"/><rect x="12" y="2" width="1" height="1" fill="#000"/><rect x="13" y="2" width="1" height="1" fill="#fff"/><rect x="14" y="2" width="1" height="1" fill="#000"/><rect x="0" y="3" width="1" height="1" fill="#000"/><rect x="1" y="3" width="2" height="1" fill="#008080"/><rect x="3" y="3" width="2" height="1" fill="#000"/><rect x="5" y="3" width="2" height="1" fill="#008080"/><rect x="7" y="3" width="1" height="1" fill="#000"/><rect x="8" y="3" width="4" height="1" fill="#fff"/><rect x="12" y="3" width="4" height="1" fill="#000"/><rect x="1" y="4" width="1" height="1" fill="#000"/><rect x="2" y="4" width="4" height="1" fill="#00ffff"/><rect x="6" y="4" width="1" height="1" fill="#000"/><rect x="7" y="4" width="8" height="1" fill="#fff"/><rect x="15" y="4" width="1" height="1" fill="#000"/><rect x="2" y="5" width="1" height="1" fill="#000"/><rect x="3" y="5" width="2" height="1" fill="#00ffff"/><rect x="5" y="5" width="1" height="1" fill="#000"/><rect x="6" y="5" width="8" height="1" fill="#c0c0c0"/><rect x="14" y="5" width="1" height="1" fill="#fff"/><rect x="15" y="5" width="1" height="1" fill="#000"/><rect x="1" y="6" width="1" height="1" fill="#000"/><rect x="2" y="6" width="4" height="1" fill="#00ffff"/><rect x="6" y="6" width="1" height="1" fill="#000"/><rect x="7" y="6" width="1" height="1" fill="#fff"/><rect x="8" y="6" width="1" height="1" fill="#c0c0c0"/><rect x="9" y="6" width="2" height="1" fill="#fff"/><rect x="11" y="6" width="1" height="1" fill="#c0c0c0"/><rect x="12" y="6" width="3" height="1" fill="#fff"/><rect x="15" y="6" width="1" height="1" fill="#000"/><rect x="0" y="7" width="1" height="1" fill="#000"/><rect x="1" y="7" width="2" height="1" fill="#008080"/><rect x="3" y="7" width="2" height="1" fill="#000"/><rect x="5" y="7" width="2" height="1" fill="#008080"/><rect x="7" y="7" width="1" height="1" fill="#000"/><rect x="8" y="7" width="1" height="1" fill="#c0c0c0"/><rect x="9" y="7" width="2" height="1" fill="#fff"/><rect x="11" y="7" width="1" height="1" fill="#c0c0c0"/><rect x="12" y="7" width="3" height="1" fill="#fff"/><rect x="15" y="7" width="1" height="1" fill="#000"/><rect x="0" y="8" width="3" height="1" fill="#000"/><rect x="4" y="8" width="3" height="1" fill="#000"/><rect x="7" y="8" width="6" height="1" fill="#c0c0c0"/><rect x="13" y="8" width="2" height="1" fill="#fff"/><rect x="15" y="8" width="1" height="1" fill="#000"/><rect x="4" y="9" width="1" height="1" fill="#000"/><rect x="5" y="9" width="1" height="1" fill="#fff"/><rect x="6" y="9" width="1" height="1" fill="#c0c0c0"/><rect x="7" y="9" width="2" height="1" fill="#fff"/><rect x="9" y="9" width="1" height="1" fill="#c0c0c0"/><rect x="10" y="9" width="2" height="1" fill="#fff"/><rect x="12" y="9" width="1" height="1" fill="#c0c0c0"/><rect x="13" y="9" width="2" height="1" fill="#fff"/><rect x="15" y="9" width="1" height="1" fill="#000"/><rect x="4" y="10" width="1" height="1" fill="#000"/><rect x="5" y="10" width="1" height="1" fill="#fff"/><rect x="6" y="10" width="1" height="1" fill="#c0c0c0"/><rect x="7" y="10" width="2" height="1" fill="#fff"/><rect x="9" y="10" width="1" height="1" fill="#c0c0c0"/><rect x="10" y="10" width="2" height="1" fill="#fff"/><rect x="12" y="10" width="1" height="1" fill="#c0c0c0"/><rect x="13" y="10" width="2" height="1" fill="#fff"/><rect x="15" y="10" width="1" height="1" fill="#000"/><rect x="4" y="11" width="1" height="1" fill="#000"/><rect x="5" y="11" width="1" height="1" fill="#fff"/><rect x="6" y="11" width="8" height="1" fill="#c0c0c0"/><rect x="14" y="11" width="1" height="1" fill="#fff"/><rect x="15" y="11" width="1" height="1" fill="#000"/><rect x="4" y="12" width="1" height="1" fill="#000"/><rect x="5" y="12" width="10" height="1" fill="#fff"/><rect x="15" y="12" width="1" height="1" fill="#000"/><rect x="4" y="13" width="1" height="1" fill="#000"/><rect x="5" y="13" width="10" height="1" fill="#fff"/><rect x="15" y="13" width="1" height="1" fill="#000"/><rect x="4" y="14" width="12" height="1" fill="#000"/></svg>
<span class="t ui" style="left:34px;top:24px;;transform:scaleX(0.9106);transform-origin:0 0"><u>Ф</u>айл</span>
<span class="t ui" style="left:73px;top:24px;;transform:scaleX(0.8761);transform-origin:0 0"><u>П</u>равка</span>
<span class="t ui" style="left:120px;top:24px;;transform:scaleX(0.8398);transform-origin:0 0"><u>В</u>ид</span>
<span class="t ui" style="left:149px;top:24px;;transform:scaleX(0.9035);transform-origin:0 0">Вст<u>а</u>вка</span>
<span class="t ui" style="left:202px;top:24px;;transform:scaleX(0.923);transform-origin:0 0">Фор<u>м</u>ат</span>
<span class="t ui" style="left:253px;top:24px;;transform:scaleX(0.8642);transform-origin:0 0"><u>С</u>ервис</span>
<span class="t ui" style="left:300px;top:24px;;transform:scaleX(0.9076);transform-origin:0 0"><u>Д</u>анные</span>
<span class="t ui" style="left:351px;top:24px;;transform:scaleX(0.8602);transform-origin:0 0"><u>О</u>кно</span>
<span class="t ui" style="left:388px;top:24px;;transform:scaleX(0.8629);transform-origin:0 0"><u>?</u></span>
<div class="raised" style="left:748px;top:23px;width:16px;height:14px;"></div>
<svg style="left:748px;top:23px" width="16" height="11" viewBox="0 0 16 11" shape-rendering="crispEdges"><rect x="4" y="9" width="6" height="1" fill="#000"/><rect x="4" y="10" width="6" height="1" fill="#000"/></svg>
<div class="raised" style="left:764px;top:23px;width:16px;height:14px;"></div>
<svg style="left:764px;top:23px" width="16" height="11" viewBox="0 0 16 11" shape-rendering="crispEdges"><rect x="5" y="2" width="6" height="1" fill="#000"/><rect x="5" y="3" width="6" height="1" fill="#000"/><rect x="5" y="4" width="1" height="1" fill="#000"/><rect x="10" y="4" width="1" height="1" fill="#000"/><rect x="3" y="5" width="6" height="1" fill="#000"/><rect x="10" y="5" width="1" height="1" fill="#000"/><rect x="3" y="6" width="6" height="1" fill="#000"/><rect x="10" y="6" width="1" height="1" fill="#000"/><rect x="3" y="7" width="1" height="1" fill="#000"/><rect x="8" y="7" width="3" height="1" fill="#000"/><rect x="3" y="8" width="1" height="1" fill="#000"/><rect x="8" y="8" width="1" height="1" fill="#000"/><rect x="3" y="9" width="1" height="1" fill="#000"/><rect x="8" y="9" width="1" height="1" fill="#000"/><rect x="3" y="10" width="6" height="1" fill="#000"/></svg>
<div class="raised" style="left:782px;top:23px;width:16px;height:14px;"></div>
<svg style="left:782px;top:23px" width="16" height="10" viewBox="0 0 16 10" shape-rendering="crispEdges"><rect x="4" y="3" width="2" height="1" fill="#000"/><rect x="10" y="3" width="2" height="1" fill="#000"/><rect x="5" y="4" width="2" height="1" fill="#000"/><rect x="9" y="4" width="2" height="1" fill="#000"/><rect x="6" y="5" width="4" height="1" fill="#000"/><rect x="7" y="6" width="2" height="1" fill="#000"/><rect x="6" y="7" width="4" height="1" fill="#000"/><rect x="5" y="8" width="2" height="1" fill="#000"/><rect x="9" y="8" width="2" height="1" fill="#000"/><rect x="4" y="9" width="2" height="1" fill="#000"/><rect x="10" y="9" width="2" height="1" fill="#000"/></svg>
<div class="hl" style="left:0px;top:42px;width:640px;height:1px;"></div>
<div class="sh" style="left:0px;top:67px;width:640px;height:1px;"></div>
<div class="hl" style="left:0px;top:68px;width:640px;height:1px;"></div>
<div class="sh" style="left:0px;top:92px;width:800px;height:1px;"></div>
<div class="sh" style="left:639px;top:42px;width:1px;height:51px;"></div>
<div class="grip" style="left:3px;top:44px;width:3px;height:22px;"></div>
<div class="grip" style="left:6px;top:44px;width:3px;height:22px;"></div>
<div class="grip" style="left:3px;top:70px;width:3px;height:22px;"></div>
<div class="grip" style="left:6px;top:70px;width:3px;height:22px;"></div>
<svg style="left:15px;top:48px" width="11" height="13" viewBox="0 0 11 13" shape-rendering="crispEdges"><rect x="0" y="0" width="8" height="1" fill="#000"/><rect x="0" y="1" width="1" height="1" fill="#000"/><rect x="1" y="1" width="6" height="1" fill="#fff"/><rect x="7" y="1" width="2" height="1" fill="#000"/><rect x="0" y="2" width="1" height="1" fill="#000"/><rect x="1" y="2" width="6" height="1" fill="#fff"/><rect x="7" y="2" width="1" height="1" fill="#000"/><rect x="8" y="2" width="1" height="1" fill="#fff"/><rect x="9" y="2" width="1" height="1" fill="#000"/><rect x="0" y="3" width="1" height="1" fill="#000"/><rect x="1" y="3" width="6" height="1" fill="#fff"/><rect x="7" y="3" width="4" height="1" fill="#000"/><rect x="0" y="4" width="1" height="1" fill="#000"/><rect x="1" y="4" width="9" height="1" fill="#fff"/><rect x="10" y="4" width="1" height="1" fill="#000"/><rect x="0" y="5" width="1" height="1" fill="#000"/><rect x="1" y="5" width="9" height="1" fill="#fff"/><rect x="10" y="5" width="1" height="1" fill="#000"/><rect x="0" y="6" width="1" height="1" fill="#000"/><rect x="1" y="6" width="9" height="1" fill="#fff"/><rect x="10" y="6" width="1" height="1" fill="#000"/><rect x="0" y="7" width="1" height="1" fill="#000"/><rect x="1" y="7" width="9" height="1" fill="#fff"/><rect x="10" y="7" width="1" height="1" fill="#000"/><rect x="0" y="8" width="1" height="1" fill="#000"/><rect x="1" y="8" width="9" height="1" fill="#fff"/><rect x="10" y="8" width="1" height="1" fill="#000"/><rect x="0" y="9" width="1" height="1" fill="#000"/><rect x="1" y="9" width="9" height="1" fill="#fff"/><rect x="10" y="9" width="1" height="1" fill="#000"/><rect x="0" y="10" width="1" height="1" fill="#000"/><rect x="1" y="10" width="9" height="1" fill="#fff"/><rect x="10" y="10" width="1" height="1" fill="#000"/><rect x="0" y="11" width="1" height="1" fill="#000"/><rect x="1" y="11" width="9" height="1" fill="#fff"/><rect x="10" y="11" width="1" height="1" fill="#000"/><rect x="0" y="12" width="11" height="1" fill="#000"/></svg>
<svg style="left:36px;top:48px" width="16" height="12" viewBox="0 0 16 12" shape-rendering="crispEdges"><rect x="9" y="0" width="3" height="1" fill="#000"/><rect x="8" y="1" width="1" height="1" fill="#000"/><rect x="12" y="1" width="1" height="1" fill="#000"/><rect x="14" y="1" width="1" height="1" fill="#000"/><rect x="13" y="2" width="2" height="1" fill="#000"/><rect x="1" y="3" width="3" height="1" fill="#000"/><rect x="12" y="3" width="3" height="1" fill="#000"/><rect x="0" y="4" width="1" height="1" fill="#000"/><rect x="1" y="4" width="1" height="1" fill="#ffff00"/><rect x="2" y="4" width="1" height="1" fill="#fff"/><rect x="3" y="4" width="1" height="1" fill="#ffff00"/><rect x="4" y="4" width="7" height="1" fill="#000"/><rect x="0" y="5" width="1" height="1" fill="#000"/><rect x="1" y="5" width="1" height="1" fill="#fff"/><rect x="2" y="5" width="1" height="1" fill="#ffff00"/><rect x="3" y="5" width="1" height="1" fill="#fff"/><rect x="4" y="5" width="1" height="1" fill="#ffff00"/><rect x="5" y="5" width="1" height="1" fill="#fff"/><rect x="6" y="5" width="1" height="1" fill="#ffff00"/><rect x="7" y="5" width="1" height="1" fill="#fff"/><rect x="8" y="5" width="1" height="1" fill="#ffff00"/><rect x="9" y="5" width="1" height="1" fill="#fff"/><rect x="10" y="5" width="1" height="1" fill="#000"/><rect x="0" y="6" width="1" height="1" fill="#000"/><rect x="1" y="6" width="1" height="1" fill="#ffff00"/><rect x="2" y="6" width="1" height="1" fill="#fff"/><rect x="3" y="6" width="1" height="1" fill="#ffff00"/><rect x="4" y="6" width="1" height="1" fill="#fff"/><rect x="5" y="6" width="11" height="1" fill="#000"/><rect x="0" y="7" width="1" height="1" fill="#000"/><rect x="1" y="7" width="1" height="1" fill="#fff"/><rect x="2" y="7" width="1" height="1" fill="#ffff00"/><rect x="3" y="7" width="1" height="1" fill="#fff"/><rect x="4" y="7" width="1" height="1" fill="#000"/><rect x="5" y="7" width="9" height="1" fill="#808000"/><rect x="14" y="7" width="1" height="1" fill="#000"/><rect x="0" y="8" width="1" height="1" fill="#000"/><rect x="1" y="8" width="1" height="1" fill="#ffff00"/><rect x="2" y="8" width="1" height="1" fill="#fff"/><rect x="3" y="8" width="1" height="1" fill="#000"/><rect x="4" y="8" width="9" height="1" fill="#808000"/><rect x="13" y="8" width="1" height="1" fill="#000"/><rect x="0" y="9" width="1" height="1" fill="#000"/><rect x="1" y="9" width="1" height="1" fill="#fff"/><rect x="2" y="9" width="1" height="1" fill="#000"/><rect x="3" y="9" width="9" height="1" fill="#808000"/><rect x="12" y="9" width="1" height="1" fill="#000"/><rect x="0" y="10" width="2" height="1" fill="#000"/><rect x="2" y="10" width="9" height="1" fill="#808000"/><rect x="11" y="10" width="1" height="1" fill="#000"/><rect x="0" y="11" width="11" height="1" fill="#000"/></svg>
<svg style="left:60px;top:48px" width="14" height="14" viewBox="0 0 14 14" shape-rendering="crispEdges"><rect x="0" y="0" width="14" height="1" fill="#000"/><rect x="0" y="1" width="1" height="1" fill="#000"/><rect x="1" y="1" width="1" height="1" fill="#808000"/><rect x="2" y="1" width="1" height="1" fill="#000"/><rect x="3" y="1" width="7" height="1" fill="#c0c0c0"/><rect x="10" y="1" width="1" height="1" fill="#000"/><rect x="11" y="1" width="2" height="1" fill="#808000"/><rect x="13" y="1" width="1" height="1" fill="#000"/><rect x="0" y="2" width="1" height="1" fill="#000"/><rect x="1" y="2" width="1" height="1" fill="#808000"/><rect x="2" y="2" width="1" height="1" fill="#000"/><rect x="3" y="2" width="7" height="1" fill="#c0c0c0"/><rect x="10" y="2" width="1" height="1" fill="#000"/><rect x="11" y="2" width="1" height="1" fill="#fff"/><rect x="12" y="2" width="1" height="1" fill="#808000"/><rect x="13" y="2" width="1" height="1" fill="#000"/><rect x="0" y="3" width="1" height="1" fill="#000"/><rect x="1" y="3" width="1" height="1" fill="#808000"/><rect x="2" y="3" width="1" height="1" fill="#000"/><rect x="3" y="3" width="7" height="1" fill="#c0c0c0"/><rect x="10" y="3" width="1" height="1" fill="#000"/><rect x="11" y="3" width="2" height="1" fill="#808000"/><rect x="13" y="3" width="1" height="1" fill="#000"/><rect x="0" y="4" width="1" height="1" fill="#000"/><rect x="1" y="4" width="1" height="1" fill="#808000"/><rect x="2" y="4" width="1" height="1" fill="#000"/><rect x="3" y="4" width="7" height="1" fill="#c0c0c0"/><rect x="10" y="4" width="1" height="1" fill="#000"/><rect x="11" y="4" width="2" height="1" fill="#808000"/><rect x="13" y="4" width="1" height="1" fill="#000"/><rect x="0" y="5" width="1" height="1" fill="#000"/><rect x="1" y="5" width="1" height="1" fill="#808000"/><rect x="2" y="5" width="1" height="1" fill="#000"/><rect x="3" y="5" width="7" height="1" fill="#c0c0c0"/><rect x="10" y="5" width="1" height="1" fill="#000"/><rect x="11" y="5" width="2" height="1" fill="#808000"/><rect x="13" y="5" width="1" height="1" fill="#000"/><rect x="0" y="6" width="1" height="1" fill="#000"/><rect x="1" y="6" width="1" height="1" fill="#808000"/><rect x="2" y="6" width="1" height="1" fill="#000"/><rect x="3" y="6" width="7" height="1" fill="#c0c0c0"/><rect x="10" y="6" width="1" height="1" fill="#000"/><rect x="11" y="6" width="2" height="1" fill="#808000"/><rect x="13" y="6" width="1" height="1" fill="#000"/><rect x="0" y="7" width="1" height="1" fill="#000"/><rect x="1" y="7" width="2" height="1" fill="#808000"/><rect x="3" y="7" width="7" height="1" fill="#000"/><rect x="10" y="7" width="3" height="1" fill="#808000"/><rect x="13" y="7" width="1" height="1" fill="#000"/><rect x="0" y="8" width="1" height="1" fill="#000"/><rect x="1" y="8" width="12" height="1" fill="#808000"/><rect x="13" y="8" width="1" height="1" fill="#000"/><rect x="0" y="9" width="1" height="1" fill="#000"/><rect x="1" y="9" width="2" height="1" fill="#808000"/><rect x="3" y="9" width="8" height="1" fill="#000"/><rect x="11" y="9" width="2" height="1" fill="#808000"/><rect x="13" y="9" width="1" height="1" fill="#000"/><rect x="0" y="10" width="1" height="1" fill="#000"/><rect x="1" y="10" width="2" height="1" fill="#808000"/><rect x="3" y="10" width="5" height="1" fill="#000"/><rect x="8" y="10" width="2" height="1" fill="#fff"/><rect x="10" y="10" width="1" height="1" fill="#000"/><rect x="11" y="10" width="2" height="1" fill="#808000"/><rect x="13" y="10" width="1" height="1" fill="#000"/><rect x="0" y="11" width="1" height="1" fill="#000"/><rect x="1" y="11" width="2" height="1" fill="#808000"/><rect x="3" y="11" width="5" height="1" fill="#000"/><rect x="8" y="11" width="2" height="1" fill="#fff"/><rect x="10" y="11" width="1" height="1" fill="#000"/><rect x="11" y="11" width="2" height="1" fill="#808000"/><rect x="13" y="11" width="1" height="1" fill="#000"/><rect x="0" y="12" width="1" height="1" fill="#000"/><rect x="1" y="12" width="2" height="1" fill="#808000"/><rect x="3" y="12" width="5" height="1" fill="#000"/><rect x="8" y="12" width="2" height="1" fill="#fff"/><rect x="10" y="12" width="1" height="1" fill="#000"/><rect x="11" y="12" width="2" height="1" fill="#808000"/><rect x="13" y="12" width="1" height="1" fill="#000"/><rect x="1" y="13" width="13" height="1" fill="#000"/></svg>
<svg style="left:88px;top:48px" width="16" height="13" viewBox="0 0 16 13" shape-rendering="crispEdges"><rect x="4" y="0" width="9" height="1" fill="#000"/><rect x="4" y="1" width="1" height="1" fill="#000"/><rect x="5" y="1" width="7" height="1" fill="#fff"/><rect x="12" y="1" width="1" height="1" fill="#000"/><rect x="3" y="2" width="1" height="1" fill="#000"/><rect x="4" y="2" width="1" height="1" fill="#fff"/><rect x="5" y="2" width="5" height="1" fill="#000"/><rect x="10" y="2" width="1" height="1" fill="#fff"/><rect x="11" y="2" width="1" height="1" fill="#000"/><rect x="3" y="3" width="1" height="1" fill="#000"/><rect x="4" y="3" width="7" height="1" fill="#fff"/><rect x="11" y="3" width="1" height="1" fill="#000"/><rect x="13" y="3" width="1" height="1" fill="#000"/><rect x="2" y="4" width="1" height="1" fill="#000"/><rect x="3" y="4" width="1" height="1" fill="#fff"/><rect x="4" y="4" width="5" height="1" fill="#000"/><rect x="9" y="4" width="1" height="1" fill="#fff"/><rect x="10" y="4" width="3" height="1" fill="#000"/><rect x="13" y="4" width="1" height="1" fill="#c0c0c0"/><rect x="14" y="4" width="1" height="1" fill="#000"/><rect x="1" y="5" width="11" height="1" fill="#000"/><rect x="12" y="5" width="2" height="1" fill="#c0c0c0"/><rect x="14" y="5" width="2" height="1" fill="#000"/><rect x="0" y="6" width="1" height="1" fill="#000"/><rect x="1" y="6" width="9" height="1" fill="#c0c0c0"/><rect x="10" y="6" width="1" height="1" fill="#000"/><rect x="11" y="6" width="1" height="1" fill="#c0c0c0"/><rect x="12" y="6" width="1" height="1" fill="#000"/><rect x="13" y="6" width="1" height="1" fill="#c0c0c0"/><rect x="14" y="6" width="2" height="1" fill="#000"/><rect x="0" y="7" width="1" height="1" fill="#000"/><rect x="1" y="7" width="9" height="1" fill="#fff"/><rect x="10" y="7" width="2" height="1" fill="#000"/><rect x="12" y="7" width="2" height="1" fill="#c0c0c0"/><rect x="14" y="7" width="1" height="1" fill="#000"/><rect x="0" y="8" width="1" height="1" fill="#000"/><rect x="1" y="8" width="9" height="1" fill="#c0c0c0"/><rect x="10" y="8" width="1" height="1" fill="#000"/><rect x="11" y="8" width="1" height="1" fill="#c0c0c0"/><rect x="12" y="8" width="3" height="1" fill="#000"/><rect x="0" y="9" width="11" height="1" fill="#000"/><rect x="11" y="9" width="2" height="1" fill="#c0c0c0"/><rect x="13" y="9" width="1" height="1" fill="#000"/><rect x="0" y="10" width="1" height="1" fill="#000"/><rect x="1" y="10" width="3" height="1" fill="#c0c0c0"/><rect x="4" y="10" width="3" height="1" fill="#ffff00"/><rect x="7" y="10" width="3" height="1" fill="#c0c0c0"/><rect x="10" y="10" width="1" height="1" fill="#000"/><rect x="11" y="10" width="1" height="1" fill="#c0c0c0"/><rect x="12" y="10" width="1" height="1" fill="#000"/><rect x="0" y="11" width="1" height="1" fill="#000"/><rect x="1" y="11" width="9" height="1" fill="#c0c0c0"/><rect x="10" y="11" width="2" height="1" fill="#000"/><rect x="0" y="12" width="11" height="1" fill="#000"/></svg>
<svg style="left:111px;top:47px" width="16" height="15" viewBox="0 0 16 15" shape-rendering="crispEdges"><rect x="0" y="0" width="9" height="1" fill="#000"/><rect x="0" y="1" width="1" height="1" fill="#000"/><rect x="1" y="1" width="7" height="1" fill="#fff"/><rect x="8" y="1" width="2" height="1" fill="#000"/><rect x="0" y="2" width="1" height="1" fill="#000"/><rect x="1" y="2" width="7" height="1" fill="#fff"/><rect x="8" y="2" width="1" height="1" fill="#000"/><rect x="9" y="2" width="1" height="1" fill="#fff"/><rect x="10" y="2" width="1" height="1" fill="#000"/><rect x="0" y="3" width="1" height="1" fill="#000"/><rect x="1" y="3" width="7" height="1" fill="#fff"/><rect x="8" y="3" width="4" height="1" fill="#000"/><rect x="0" y="4" width="1" height="1" fill="#000"/><rect x="1" y="4" width="10" height="1" fill="#fff"/><rect x="11" y="4" width="1" height="1" fill="#000"/><rect x="0" y="5" width="1" height="1" fill="#000"/><rect x="1" y="5" width="6" height="1" fill="#fff"/><rect x="7" y="5" width="5" height="1" fill="#000"/><rect x="0" y="6" width="1" height="1" fill="#000"/><rect x="1" y="6" width="5" height="1" fill="#fff"/><rect x="6" y="6" width="1" height="1" fill="#000"/><rect x="7" y="6" width="1" height="1" fill="#c0c0c0"/><rect x="8" y="6" width="1" height="1" fill="#00ffff"/><rect x="9" y="6" width="1" height="1" fill="#fff"/><rect x="10" y="6" width="1" height="1" fill="#c0c0c0"/><rect x="11" y="6" width="2" height="1" fill="#000"/><rect x="0" y="7" width="1" height="1" fill="#000"/><rect x="1" y="7" width="4" height="1" fill="#fff"/><rect x="5" y="7" width="1" height="1" fill="#000"/><rect x="6" y="7" width="1" height="1" fill="#c0c0c0"/><rect x="7" y="7" width="1" height="1" fill="#00ffff"/><rect x="8" y="7" width="3" height="1" fill="#fff"/><rect x="11" y="7" width="1" height="1" fill="#c0c0c0"/><rect x="12" y="7" width="1" height="1" fill="#000"/><rect x="0" y="8" width="1" height="1" fill="#000"/><rect x="1" y="8" width="4" height="1" fill="#fff"/><rect x="5" y="8" width="1" height="1" fill="#000"/><rect x="6" y="8" width="1" height="1" fill="#c0c0c0"/><rect x="7" y="8" width="3" height="1" fill="#fff"/><rect x="10" y="8" width="1" height="1" fill="#00ffff"/><rect x="11" y="8" width="1" height="1" fill="#c0c0c0"/><rect x="12" y="8" width="1" height="1" fill="#000"/><rect x="0" y="9" width="1" height="1" fill="#000"/><rect x="1" y="9" width="4" height="1" fill="#fff"/><rect x="5" y="9" width="1" height="1" fill="#000"/><rect x="6" y="9" width="1" height="1" fill="#c0c0c0"/><rect x="7" y="9" width="2" height="1" fill="#fff"/><rect x="9" y="9" width="2" height="1" fill="#00ffff"/><rect x="11" y="9" width="1" height="1" fill="#c0c0c0"/><rect x="12" y="9" width="1" height="1" fill="#000"/><rect x="0" y="10" width="1" height="1" fill="#000"/><rect x="1" y="10" width="5" height="1" fill="#fff"/><rect x="6" y="10" width="1" height="1" fill="#000"/><rect x="7" y="10" width="1" height="1" fill="#c0c0c0"/><rect x="8" y="10" width="1" height="1" fill="#00ffff"/><rect x="9" y="10" width="2" height="1" fill="#c0c0c0"/><rect x="11" y="10" width="1" height="1" fill="#000"/><rect x="0" y="11" width="1" height="1" fill="#000"/><rect x="1" y="11" width="6" height="1" fill="#fff"/><rect x="7" y="11" width="6" height="1" fill="#000"/><rect x="0" y="12" width="1" height="1" fill="#000"/><rect x="1" y="12" width="9" height="1" fill="#fff"/><rect x="10" y="12" width="4" height="1" fill="#000"/><rect x="0" y="13" width="11" height="1" fill="#000"/><rect x="12" y="13" width="3" height="1" fill="#000"/><rect x="14" y="14" width="1" height="1" fill="#000"/></svg>
<svg style="left:134px;top:48px" width="15" height="13" viewBox="0 0 15 13" shape-rendering="crispEdges"><rect x="1" y="0" width="1" height="1" fill="#000"/><rect x="4" y="0" width="3" height="1" fill="#000"/><rect x="8" y="0" width="2" height="1" fill="#000"/><rect x="0" y="1" width="1" height="1" fill="#000"/><rect x="2" y="1" width="1" height="1" fill="#000"/><rect x="4" y="1" width="1" height="1" fill="#000"/><rect x="8" y="1" width="1" height="1" fill="#000"/><rect x="10" y="1" width="1" height="1" fill="#000"/><rect x="0" y="2" width="3" height="1" fill="#000"/><rect x="4" y="2" width="2" height="1" fill="#000"/><rect x="8" y="2" width="2" height="1" fill="#000"/><rect x="14" y="2" width="1" height="1" fill="#000080"/><rect x="0" y="3" width="1" height="1" fill="#000"/><rect x="2" y="3" width="1" height="1" fill="#000"/><rect x="4" y="3" width="1" height="1" fill="#000"/><rect x="6" y="3" width="1" height="1" fill="#000"/><rect x="8" y="3" width="1" height="1" fill="#000"/><rect x="10" y="3" width="1" height="1" fill="#000"/><rect x="13" y="3" width="2" height="1" fill="#000080"/><rect x="0" y="4" width="1" height="1" fill="#000"/><rect x="2" y="4" width="1" height="1" fill="#000"/><rect x="4" y="4" width="3" height="1" fill="#000"/><rect x="8" y="4" width="3" height="1" fill="#000"/><rect x="12" y="4" width="2" height="1" fill="#000080"/><rect x="11" y="5" width="2" height="1" fill="#000080"/><rect x="10" y="6" width="2" height="1" fill="#000080"/><rect x="1" y="7" width="2" height="1" fill="#000080"/><rect x="9" y="7" width="2" height="1" fill="#000080"/><rect x="1" y="8" width="3" height="1" fill="#000080"/><rect x="8" y="8" width="2" height="1" fill="#000080"/><rect x="2" y="9" width="3" height="1" fill="#000080"/><rect x="7" y="9" width="2" height="1" fill="#000080"/><rect x="3" y="10" width="5" height="1" fill="#000080"/><rect x="4" y="11" width="3" height="1" fill="#000080"/><rect x="5" y="12" width="1" height="1" fill="#000080"/></svg>
<svg style="left:166px;top:48px" width="10" height="13" viewBox="0 0 10 13" shape-rendering="crispEdges"><rect x="2" y="0" width="1" height="1" fill="#000"/><rect x="6" y="0" width="1" height="1" fill="#000"/><rect x="2" y="1" width="1" height="1" fill="#000"/><rect x="6" y="1" width="1" height="1" fill="#000"/><rect x="2" y="2" width="2" height="1" fill="#000"/><rect x="5" y="2" width="2" height="1" fill="#000"/><rect x="3" y="3" width="1" height="1" fill="#000"/><rect x="5" y="3" width="1" height="1" fill="#000"/><rect x="3" y="4" width="3" height="1" fill="#000"/><rect x="4" y="5" width="1" height="1" fill="#000"/><rect x="3" y="6" width="3" height="1" fill="#000"/><rect x="2" y="7" width="2" height="1" fill="#000080"/><rect x="5" y="7" width="2" height="1" fill="#000080"/><rect x="1" y="8" width="1" height="1" fill="#000080"/><rect x="3" y="8" width="1" height="1" fill="#000080"/><rect x="5" y="8" width="1" height="1" fill="#000080"/><rect x="7" y="8" width="1" height="1" fill="#000080"/><rect x="0" y="9" width="1" height="1" fill="#000080"/><rect x="3" y="9" width="1" height="1" fill="#000080"/><rect x="5" y="9" width="1" height="1" fill="#000080"/><rect x="8" y="9" width="1" height="1" fill="#000080"/><rect x="0" y="10" width="1" height="1" fill="#000080"/><rect x="3" y="10" width="1" height="1" fill="#000080"/><rect x="5" y="10" width="1" height="1" fill="#000080"/><rect x="8" y="10" width="1" height="1" fill="#000080"/><rect x="0" y="11" width="1" height="1" fill="#000080"/><rect x="2" y="11" width="1" height="1" fill="#000080"/><rect x="6" y="11" width="1" height="1" fill="#000080"/><rect x="8" y="11" width="1" height="1" fill="#000080"/><rect x="1" y="12" width="2" height="1" fill="#000080"/><rect x="6" y="12" width="2" height="1" fill="#000080"/></svg>
<svg style="left:186px;top:48px" width="16" height="13" viewBox="0 0 16 13" shape-rendering="crispEdges"><rect x="0" y="0" width="6" height="1" fill="#000"/><rect x="0" y="1" width="1" height="1" fill="#000"/><rect x="1" y="1" width="4" height="1" fill="#fff"/><rect x="5" y="1" width="2" height="1" fill="#000"/><rect x="0" y="2" width="1" height="1" fill="#000"/><rect x="1" y="2" width="1" height="1" fill="#fff"/><rect x="2" y="2" width="2" height="1" fill="#000"/><rect x="4" y="2" width="1" height="1" fill="#fff"/><rect x="5" y="2" width="1" height="1" fill="#000"/><rect x="6" y="2" width="1" height="1" fill="#fff"/><rect x="7" y="2" width="1" height="1" fill="#000"/><rect x="0" y="3" width="1" height="1" fill="#000"/><rect x="1" y="3" width="4" height="1" fill="#fff"/><rect x="5" y="3" width="1" height="1" fill="#000"/><rect x="6" y="3" width="6" height="1" fill="#000080"/><rect x="0" y="4" width="1" height="1" fill="#000"/><rect x="1" y="4" width="1" height="1" fill="#fff"/><rect x="2" y="4" width="3" height="1" fill="#000"/><rect x="5" y="4" width="1" height="1" fill="#fff"/><rect x="6" y="4" width="1" height="1" fill="#000080"/><rect x="7" y="4" width="4" height="1" fill="#fff"/><rect x="11" y="4" width="2" height="1" fill="#000080"/><rect x="0" y="5" width="1" height="1" fill="#000"/><rect x="1" y="5" width="5" height="1" fill="#fff"/><rect x="6" y="5" width="1" height="1" fill="#000080"/><rect x="7" y="5" width="4" height="1" fill="#fff"/><rect x="11" y="5" width="1" height="1" fill="#000080"/><rect x="12" y="5" width="1" height="1" fill="#fff"/><rect x="13" y="5" width="1" height="1" fill="#000080"/><rect x="0" y="6" width="1" height="1" fill="#000"/><rect x="1" y="6" width="1" height="1" fill="#fff"/><rect x="2" y="6" width="3" height="1" fill="#000"/><rect x="5" y="6" width="1" height="1" fill="#fff"/><rect x="6" y="6" width="1" height="1" fill="#000080"/><rect x="7" y="6" width="1" height="1" fill="#fff"/><rect x="8" y="6" width="2" height="1" fill="#000"/><rect x="10" y="6" width="1" height="1" fill="#fff"/><rect x="11" y="6" width="4" height="1" fill="#000080"/><rect x="0" y="7" width="1" height="1" fill="#000"/><rect x="1" y="7" width="5" height="1" fill="#fff"/><rect x="6" y="7" width="1" height="1" fill="#000080"/><rect x="7" y="7" width="7" height="1" fill="#fff"/><rect x="14" y="7" width="1" height="1" fill="#000080"/><rect x="0" y="8" width="6" height="1" fill="#000"/><rect x="6" y="8" width="1" height="1" fill="#000080"/><rect x="7" y="8" width="1" height="1" fill="#fff"/><rect x="8" y="8" width="5" height="1" fill="#000"/><rect x="13" y="8" width="1" height="1" fill="#fff"/><rect x="14" y="8" width="1" height="1" fill="#000080"/><rect x="6" y="9" width="1" height="1" fill="#000080"/><rect x="7" y="9" width="7" height="1" fill="#fff"/><rect x="14" y="9" width="1" height="1" fill="#000080"/><rect x="6" y="10" width="1" height="1" fill="#000080"/><rect x="7" y="10" width="1" height="1" fill="#fff"/><rect x="8" y="10" width="5" height="1" fill="#000"/><rect x="13" y="10" width="1" height="1" fill="#fff"/><rect x="14" y="10" width="1" height="1" fill="#000080"/><rect x="6" y="11" width="1" height="1" fill="#000080"/><rect x="7" y="11" width="7" height="1" fill="#fff"/><rect x="14" y="11" width="1" height="1" fill="#000080"/><rect x="6" y="12" width="9" height="1" fill="#000080"/></svg>
<svg style="left:209px;top:48px" width="17" height="14" viewBox="0 0 17 14" shape-rendering="crispEdges"><rect x="5" y="0" width="4" height="1" fill="#000"/><rect x="1" y="1" width="5" height="1" fill="#000"/><rect x="6" y="1" width="2" height="1" fill="#c0c0c0"/><rect x="8" y="1" width="5" height="1" fill="#000"/><rect x="0" y="2" width="1" height="1" fill="#000"/><rect x="1" y="2" width="1" height="1" fill="#808000"/><rect x="2" y="2" width="2" height="1" fill="#000"/><rect x="4" y="2" width="6" height="1" fill="#c0c0c0"/><rect x="10" y="2" width="2" height="1" fill="#000"/><rect x="12" y="2" width="1" height="1" fill="#808000"/><rect x="13" y="2" width="1" height="1" fill="#000"/><rect x="0" y="3" width="1" height="1" fill="#000"/><rect x="1" y="3" width="1" height="1" fill="#808000"/><rect x="2" y="3" width="1" height="1" fill="#000"/><rect x="3" y="3" width="1" height="1" fill="#c0c0c0"/><rect x="4" y="3" width="6" height="1" fill="#000"/><rect x="10" y="3" width="1" height="1" fill="#c0c0c0"/><rect x="11" y="3" width="1" height="1" fill="#000"/><rect x="12" y="3" width="1" height="1" fill="#808000"/><rect x="13" y="3" width="1" height="1" fill="#000"/><rect x="0" y="4" width="1" height="1" fill="#000"/><rect x="1" y="4" width="1" height="1" fill="#808000"/><rect x="2" y="4" width="1" height="1" fill="#000"/><rect x="3" y="4" width="1" height="1" fill="#808000"/><rect x="4" y="4" width="1" height="1" fill="#000"/><rect x="5" y="4" width="1" height="1" fill="#808000"/><rect x="6" y="4" width="1" height="1" fill="#000"/><rect x="7" y="4" width="1" height="1" fill="#808000"/><rect x="8" y="4" width="1" height="1" fill="#000"/><rect x="9" y="4" width="1" height="1" fill="#808000"/><rect x="10" y="4" width="1" height="1" fill="#000"/><rect x="11" y="4" width="1" height="1" fill="#808000"/><rect x="12" y="4" width="1" height="1" fill="#000"/><rect x="13" y="4" width="1" height="1" fill="#808000"/><rect x="14" y="4" width="1" height="1" fill="#000"/><rect x="0" y="5" width="2" height="1" fill="#000"/><rect x="2" y="5" width="1" height="1" fill="#808000"/><rect x="3" y="5" width="1" height="1" fill="#000"/><rect x="4" y="5" width="1" height="1" fill="#808000"/><rect x="5" y="5" width="1" height="1" fill="#000"/><rect x="6" y="5" width="8" height="1" fill="#000080"/><rect x="0" y="6" width="1" height="1" fill="#000"/><rect x="1" y="6" width="1" height="1" fill="#808000"/><rect x="2" y="6" width="1" height="1" fill="#000"/><rect x="3" y="6" width="1" height="1" fill="#808000"/><rect x="4" y="6" width="1" height="1" fill="#000"/><rect x="5" y="6" width="1" height="1" fill="#808000"/><rect x="6" y="6" width="1" height="1" fill="#000080"/><rect x="7" y="6" width="5" height="1" fill="#fff"/><rect x="12" y="6" width="2" height="1" fill="#000080"/><rect x="0" y="7" width="2" height="1" fill="#000"/><rect x="2" y="7" width="1" height="1" fill="#808000"/><rect x="3" y="7" width="1" height="1" fill="#000"/><rect x="4" y="7" width="1" height="1" fill="#808000"/><rect x="5" y="7" width="1" height="1" fill="#000"/><rect x="6" y="7" width="1" height="1" fill="#000080"/><rect x="7" y="7" width="5" height="1" fill="#fff"/><rect x="12" y="7" width="1" height="1" fill="#000080"/><rect x="13" y="7" width="1" height="1" fill="#fff"/><rect x="14" y="7" width="1" height="1" fill="#000080"/><rect x="0" y="8" width="1" height="1" fill="#000"/><rect x="1" y="8" width="1" height="1" fill="#808000"/><rect x="2" y="8" width="1" height="1" fill="#000"/><rect x="3" y="8" width="1" height="1" fill="#808000"/><rect x="4" y="8" width="1" height="1" fill="#000"/><rect x="5" y="8" width="1" height="1" fill="#808000"/><rect x="6" y="8" width="1" height="1" fill="#000080"/><rect x="7" y="8" width="1" height="1" fill="#fff"/><rect x="8" y="8" width="3" height="1" fill="#000"/><rect x="11" y="8" width="1" height="1" fill="#fff"/><rect x="12" y="8" width="4" height="1" fill="#000080"/><rect x="0" y="9" width="2" height="1" fill="#000"/><rect x="2" y="9" width="1" height="1" fill="#808000"/><rect x="3" y="9" width="1" height="1" fill="#000"/><rect x="4" y="9" width="1" height="1" fill="#808000"/><rect x="5" y="9" width="1" height="1" fill="#000"/><rect x="6" y="9" width="1" height="1" fill="#000080"/><rect x="7" y="9" width="8" height="1" fill="#fff"/><rect x="15" y="9" width="1" height="1" fill="#000080"/><rect x="0" y="10" width="1" height="1" fill="#000"/><rect x="1" y="10" width="1" height="1" fill="#808000"/><rect x="2" y="10" width="1" height="1" fill="#000"/><rect x="3" y="10" width="1" height="1" fill="#808000"/><rect x="4" y="10" width="1" height="1" fill="#000"/><rect x="5" y="10" width="1" height="1" fill="#808000"/><rect x="6" y="10" width="1" height="1" fill="#000080"/><rect x="7" y="10" width="1" height="1" fill="#fff"/><rect x="8" y="10" width="6" height="1" fill="#000"/><rect x="14" y="10" width="1" height="1" fill="#fff"/><rect x="15" y="10" width="1" height="1" fill="#000080"/><rect x="0" y="11" width="2" height="1" fill="#000"/><rect x="2" y="11" width="1" height="1" fill="#808000"/><rect x="3" y="11" width="1" height="1" fill="#000"/><rect x="4" y="11" width="1" height="1" fill="#808000"/><rect x="5" y="11" width="1" height="1" fill="#000"/><rect x="6" y="11" width="1" height="1" fill="#000080"/><rect x="7" y="11" width="8" height="1" fill="#fff"/><rect x="15" y="11" width="1" height="1" fill="#000080"/><rect x="0" y="12" width="6" height="1" fill="#000"/><rect x="6" y="12" width="1" height="1" fill="#000080"/><rect x="7" y="12" width="8" height="1" fill="#fff"/><rect x="15" y="12" width="1" height="1" fill="#000080"/><rect x="6" y="13" width="10" height="1" fill="#000080"/></svg>
<svg style="left:232px;top:47px" width="17" height="15" viewBox="0 0 17 15" shape-rendering="crispEdges"><rect x="14" y="0" width="2" height="1" fill="#000080"/><rect x="13" y="1" width="4" height="1" fill="#000080"/><rect x="12" y="2" width="4" height="1" fill="#000080"/><rect x="11" y="3" width="1" height="1" fill="#000"/><rect x="12" y="3" width="3" height="1" fill="#000080"/><rect x="10" y="4" width="1" height="1" fill="#000"/><rect x="11" y="4" width="1" height="1" fill="#fff"/><rect x="12" y="4" width="1" height="1" fill="#000"/><rect x="13" y="4" width="1" height="1" fill="#000080"/><rect x="6" y="5" width="2" height="1" fill="#000"/><rect x="9" y="5" width="1" height="1" fill="#000"/><rect x="10" y="5" width="2" height="1" fill="#fff"/><rect x="12" y="5" width="1" height="1" fill="#000"/><rect x="5" y="6" width="1" height="1" fill="#000"/><rect x="6" y="6" width="1" height="1" fill="#fff"/><rect x="7" y="6" width="1" height="1" fill="#ffff00"/><rect x="8" y="6" width="2" height="1" fill="#000"/><rect x="10" y="6" width="1" height="1" fill="#fff"/><rect x="11" y="6" width="1" height="1" fill="#000"/><rect x="4" y="7" width="1" height="1" fill="#000"/><rect x="5" y="7" width="1" height="1" fill="#fff"/><rect x="6" y="7" width="1" height="1" fill="#ffff00"/><rect x="7" y="7" width="1" height="1" fill="#fff"/><rect x="8" y="7" width="1" height="1" fill="#ffff00"/><rect x="9" y="7" width="2" height="1" fill="#000"/><rect x="3" y="8" width="1" height="1" fill="#000"/><rect x="4" y="8" width="1" height="1" fill="#fff"/><rect x="5" y="8" width="1" height="1" fill="#ffff00"/><rect x="6" y="8" width="1" height="1" fill="#fff"/><rect x="7" y="8" width="1" height="1" fill="#ffff00"/><rect x="8" y="8" width="1" height="1" fill="#fff"/><rect x="9" y="8" width="1" height="1" fill="#ffff00"/><rect x="10" y="8" width="1" height="1" fill="#000"/><rect x="2" y="9" width="1" height="1" fill="#000"/><rect x="3" y="9" width="1" height="1" fill="#fff"/><rect x="4" y="9" width="1" height="1" fill="#ffff00"/><rect x="5" y="9" width="1" height="1" fill="#fff"/><rect x="6" y="9" width="1" height="1" fill="#ffff00"/><rect x="7" y="9" width="1" height="1" fill="#fff"/><rect x="8" y="9" width="1" height="1" fill="#ffff00"/><rect x="9" y="9" width="1" height="1" fill="#fff"/><rect x="10" y="9" width="1" height="1" fill="#000"/><rect x="2" y="10" width="1" height="1" fill="#000"/><rect x="3" y="10" width="2" height="1" fill="#ffff00"/><rect x="5" y="10" width="1" height="1" fill="#fff"/><rect x="6" y="10" width="1" height="1" fill="#ffff00"/><rect x="7" y="10" width="1" height="1" fill="#fff"/><rect x="8" y="10" width="1" height="1" fill="#ffff00"/><rect x="9" y="10" width="1" height="1" fill="#000"/><rect x="3" y="11" width="2" height="1" fill="#000"/><rect x="5" y="11" width="1" height="1" fill="#ffff00"/><rect x="6" y="11" width="1" height="1" fill="#fff"/><rect x="7" y="11" width="1" height="1" fill="#ffff00"/><rect x="8" y="11" width="1" height="1" fill="#000"/><rect x="5" y="12" width="3" height="1" fill="#000"/><rect x="1" y="13" width="1" height="1" fill="#ffff00"/><rect x="3" y="13" width="1" height="1" fill="#ffff00"/><rect x="5" y="13" width="1" height="1" fill="#ffff00"/><rect x="0" y="14" width="1" height="1" fill="#ffff00"/><rect x="2" y="14" width="1" height="1" fill="#ffff00"/><rect x="4" y="14" width="1" height="1" fill="#ffff00"/><rect x="6" y="14" width="1" height="1" fill="#ffff00"/></svg>
<svg style="left:263px;top:51px" width="13" height="7" viewBox="0 0 13 7" shape-rendering="crispEdges"><rect x="5" y="0" width="5" height="1" fill="#000080"/><rect x="0" y="1" width="1" height="1" fill="#000080"/><rect x="4" y="1" width="2" height="1" fill="#000080"/><rect x="9" y="1" width="2" height="1" fill="#000080"/><rect x="0" y="2" width="2" height="1" fill="#000080"/><rect x="3" y="2" width="2" height="1" fill="#000080"/><rect x="10" y="2" width="2" height="1" fill="#000080"/><rect x="0" y="3" width="4" height="1" fill="#000080"/><rect x="11" y="3" width="1" height="1" fill="#000080"/><rect x="0" y="4" width="5" height="1" fill="#000080"/><rect x="11" y="4" width="1" height="1" fill="#000080"/><rect x="0" y="5" width="6" height="1" fill="#000080"/><rect x="10" y="5" width="2" height="1" fill="#000080"/><rect x="9" y="6" width="2" height="1" fill="#000080"/></svg>
<svg style="left:283px;top:54px" width="5" height="3" viewBox="0 0 5 3" shape-rendering="crispEdges"><rect x="0" y="0" width="5" height="1" fill="#000"/><rect x="1" y="1" width="3" height="1" fill="#000"/><rect x="2" y="2" width="1" height="1" fill="#000"/></svg>
<svg style="left:297px;top:51px" width="14" height="8" viewBox="0 0 14 8" shape-rendering="crispEdges"><rect x="3" y="0" width="5" height="1" fill="#808080"/><rect x="2" y="1" width="2" height="1" fill="#808080"/><rect x="4" y="1" width="3" height="1" fill="#fff"/><rect x="7" y="1" width="2" height="1" fill="#808080"/><rect x="12" y="1" width="1" height="1" fill="#808080"/><rect x="1" y="2" width="2" height="1" fill="#808080"/><rect x="3" y="2" width="2" height="1" fill="#fff"/><rect x="8" y="2" width="2" height="1" fill="#808080"/><rect x="11" y="2" width="2" height="1" fill="#808080"/><rect x="13" y="2" width="1" height="1" fill="#fff"/><rect x="1" y="3" width="1" height="1" fill="#808080"/><rect x="2" y="3" width="2" height="1" fill="#fff"/><rect x="9" y="3" width="4" height="1" fill="#808080"/><rect x="13" y="3" width="1" height="1" fill="#fff"/><rect x="1" y="4" width="1" height="1" fill="#808080"/><rect x="2" y="4" width="1" height="1" fill="#fff"/><rect x="8" y="4" width="5" height="1" fill="#808080"/><rect x="13" y="4" width="1" height="1" fill="#fff"/><rect x="1" y="5" width="2" height="1" fill="#808080"/><rect x="7" y="5" width="6" height="1" fill="#808080"/><rect x="13" y="5" width="1" height="1" fill="#fff"/><rect x="2" y="6" width="2" height="1" fill="#808080"/><rect x="8" y="6" width="6" height="1" fill="#fff"/><rect x="3" y="7" width="2" height="1" fill="#fff"/></svg>
<svg style="left:317px;top:54px" width="6" height="4" viewBox="0 0 6 4" shape-rendering="crispEdges"><rect x="0" y="0" width="5" height="1" fill="#808080"/><rect x="1" y="1" width="3" height="1" fill="#808080"/><rect x="4" y="1" width="2" height="1" fill="#fff"/><rect x="2" y="2" width="1" height="1" fill="#808080"/><rect x="3" y="2" width="2" height="1" fill="#fff"/><rect x="3" y="3" width="1" height="1" fill="#fff"/></svg>
<svg style="left:335px;top:47px" width="16" height="14" viewBox="0 0 16 14" shape-rendering="crispEdges"><rect x="4" y="0" width="5" height="1" fill="#000"/><rect x="2" y="1" width="2" height="1" fill="#000"/><rect x="4" y="1" width="2" height="1" fill="#0000ff"/><rect x="6" y="1" width="2" height="1" fill="#008000"/><rect x="8" y="1" width="1" height="1" fill="#0000ff"/><rect x="9" y="1" width="2" height="1" fill="#000"/><rect x="1" y="2" width="1" height="1" fill="#000"/><rect x="2" y="2" width="1" height="1" fill="#0000ff"/><rect x="3" y="2" width="1" height="1" fill="#fff"/><rect x="4" y="2" width="1" height="1" fill="#0000ff"/><rect x="5" y="2" width="4" height="1" fill="#008000"/><rect x="9" y="2" width="2" height="1" fill="#0000ff"/><rect x="11" y="2" width="1" height="1" fill="#000"/><rect x="1" y="3" width="1" height="1" fill="#000"/><rect x="2" y="3" width="1" height="1" fill="#fff"/><rect x="3" y="3" width="3" height="1" fill="#0000ff"/><rect x="6" y="3" width="4" height="1" fill="#008000"/><rect x="10" y="3" width="1" height="1" fill="#0000ff"/><rect x="11" y="3" width="1" height="1" fill="#000"/><rect x="0" y="4" width="1" height="1" fill="#000"/><rect x="1" y="4" width="1" height="1" fill="#0000ff"/><rect x="2" y="4" width="1" height="1" fill="#fff"/><rect x="3" y="4" width="2" height="1" fill="#0000ff"/><rect x="5" y="4" width="3" height="1" fill="#008000"/><rect x="8" y="4" width="4" height="1" fill="#0000ff"/><rect x="12" y="4" width="1" height="1" fill="#000"/><rect x="0" y="5" width="1" height="1" fill="#000"/><rect x="1" y="5" width="5" height="1" fill="#0000ff"/><rect x="6" y="5" width="2" height="1" fill="#008000"/><rect x="8" y="5" width="2" height="1" fill="#0000ff"/><rect x="10" y="5" width="1" height="1" fill="#008000"/><rect x="11" y="5" width="1" height="1" fill="#0000ff"/><rect x="12" y="5" width="1" height="1" fill="#000"/><rect x="0" y="6" width="1" height="1" fill="#000"/><rect x="1" y="6" width="1" height="1" fill="#0000ff"/><rect x="2" y="6" width="1" height="1" fill="#008000"/><rect x="3" y="6" width="4" height="1" fill="#0000ff"/><rect x="7" y="6" width="1" height="1" fill="#008000"/><rect x="8" y="6" width="1" height="1" fill="#0000ff"/><rect x="9" y="6" width="2" height="1" fill="#008000"/><rect x="11" y="6" width="1" height="1" fill="#0000ff"/><rect x="12" y="6" width="1" height="1" fill="#000"/><rect x="0" y="7" width="1" height="1" fill="#000"/><rect x="1" y="7" width="1" height="1" fill="#0000ff"/><rect x="2" y="7" width="2" height="1" fill="#008000"/><rect x="4" y="7" width="5" height="1" fill="#0000ff"/><rect x="9" y="7" width="2" height="1" fill="#008000"/><rect x="11" y="7" width="1" height="1" fill="#0000ff"/><rect x="12" y="7" width="1" height="1" fill="#000"/><rect x="1" y="8" width="1" height="1" fill="#000"/><rect x="2" y="8" width="1" height="1" fill="#0000ff"/><rect x="3" y="8" width="2" height="1" fill="#008000"/><rect x="5" y="8" width="6" height="1" fill="#0000ff"/><rect x="11" y="8" width="1" height="1" fill="#000"/><rect x="1" y="9" width="1" height="1" fill="#000"/><rect x="2" y="9" width="2" height="1" fill="#0000ff"/><rect x="4" y="9" width="1" height="1" fill="#008000"/><rect x="5" y="9" width="9" height="1" fill="#000"/><rect x="2" y="10" width="3" height="1" fill="#000"/><rect x="5" y="10" width="2" height="1" fill="#fff"/><rect x="7" y="10" width="1" height="1" fill="#000"/><rect x="8" y="10" width="2" height="1" fill="#fff"/><rect x="10" y="10" width="1" height="1" fill="#000"/><rect x="11" y="10" width="2" height="1" fill="#fff"/><rect x="13" y="10" width="1" height="1" fill="#000"/><rect x="4" y="11" width="1" height="1" fill="#000"/><rect x="5" y="11" width="1" height="1" fill="#fff"/><rect x="6" y="11" width="6" height="1" fill="#000"/><rect x="12" y="11" width="1" height="1" fill="#fff"/><rect x="13" y="11" width="1" height="1" fill="#000"/><rect x="4" y="12" width="1" height="1" fill="#000"/><rect x="5" y="12" width="2" height="1" fill="#fff"/><rect x="7" y="12" width="1" height="1" fill="#000"/><rect x="8" y="12" width="2" height="1" fill="#fff"/><rect x="10" y="12" width="1" height="1" fill="#000"/><rect x="11" y="12" width="2" height="1" fill="#fff"/><rect x="13" y="12" width="1" height="1" fill="#000"/><rect x="5" y="13" width="8" height="1" fill="#000"/></svg>
<svg style="left:358px;top:48px" width="16" height="12" viewBox="0 0 16 12" shape-rendering="crispEdges"><rect x="4" y="0" width="5" height="1" fill="#000"/><rect x="2" y="1" width="2" height="1" fill="#000"/><rect x="4" y="1" width="2" height="1" fill="#0000ff"/><rect x="6" y="1" width="2" height="1" fill="#008000"/><rect x="8" y="1" width="1" height="1" fill="#0000ff"/><rect x="9" y="1" width="2" height="1" fill="#000"/><rect x="13" y="1" width="1" height="1" fill="#000"/><rect x="1" y="2" width="1" height="1" fill="#000"/><rect x="2" y="2" width="1" height="1" fill="#0000ff"/><rect x="3" y="2" width="1" height="1" fill="#fff"/><rect x="4" y="2" width="1" height="1" fill="#0000ff"/><rect x="5" y="2" width="4" height="1" fill="#008000"/><rect x="9" y="2" width="2" height="1" fill="#0000ff"/><rect x="11" y="2" width="2" height="1" fill="#000"/><rect x="13" y="2" width="1" height="1" fill="#00ffff"/><rect x="14" y="2" width="1" height="1" fill="#000"/><rect x="1" y="3" width="1" height="1" fill="#000"/><rect x="2" y="3" width="1" height="1" fill="#fff"/><rect x="3" y="3" width="3" height="1" fill="#0000ff"/><rect x="6" y="3" width="2" height="1" fill="#008000"/><rect x="8" y="3" width="1" height="1" fill="#000"/><rect x="9" y="3" width="5" height="1" fill="#00ffff"/><rect x="14" y="3" width="1" height="1" fill="#000"/><rect x="0" y="4" width="1" height="1" fill="#000"/><rect x="1" y="4" width="1" height="1" fill="#0000ff"/><rect x="2" y="4" width="1" height="1" fill="#fff"/><rect x="3" y="4" width="2" height="1" fill="#0000ff"/><rect x="5" y="4" width="3" height="1" fill="#008000"/><rect x="8" y="4" width="1" height="1" fill="#0000ff"/><rect x="9" y="4" width="3" height="1" fill="#000"/><rect x="12" y="4" width="2" height="1" fill="#00ffff"/><rect x="14" y="4" width="1" height="1" fill="#000"/><rect x="0" y="5" width="1" height="1" fill="#000"/><rect x="1" y="5" width="5" height="1" fill="#0000ff"/><rect x="6" y="5" width="2" height="1" fill="#008000"/><rect x="8" y="5" width="2" height="1" fill="#0000ff"/><rect x="10" y="5" width="1" height="1" fill="#008000"/><rect x="11" y="5" width="3" height="1" fill="#000"/><rect x="0" y="6" width="1" height="1" fill="#000"/><rect x="1" y="6" width="1" height="1" fill="#0000ff"/><rect x="2" y="6" width="1" height="1" fill="#008000"/><rect x="3" y="6" width="2" height="1" fill="#0000ff"/><rect x="5" y="6" width="1" height="1" fill="#000"/><rect x="6" y="6" width="1" height="1" fill="#00ffff"/><rect x="7" y="6" width="1" height="1" fill="#000"/><rect x="8" y="6" width="1" height="1" fill="#0000ff"/><rect x="9" y="6" width="2" height="1" fill="#008000"/><rect x="11" y="6" width="1" height="1" fill="#0000ff"/><rect x="12" y="6" width="1" height="1" fill="#000"/><rect x="0" y="7" width="1" height="1" fill="#000"/><rect x="1" y="7" width="1" height="1" fill="#0000ff"/><rect x="2" y="7" width="2" height="1" fill="#008000"/><rect x="4" y="7" width="1" height="1" fill="#000"/><rect x="5" y="7" width="2" height="1" fill="#00ffff"/><rect x="7" y="7" width="4" height="1" fill="#000"/><rect x="11" y="7" width="1" height="1" fill="#0000ff"/><rect x="12" y="7" width="1" height="1" fill="#000"/><rect x="1" y="8" width="1" height="1" fill="#000"/><rect x="2" y="8" width="1" height="1" fill="#0000ff"/><rect x="3" y="8" width="1" height="1" fill="#000"/><rect x="4" y="8" width="7" height="1" fill="#00ffff"/><rect x="11" y="8" width="1" height="1" fill="#000"/><rect x="1" y="9" width="1" height="1" fill="#000"/><rect x="2" y="9" width="2" height="1" fill="#0000ff"/><rect x="4" y="9" width="1" height="1" fill="#000"/><rect x="5" y="9" width="2" height="1" fill="#00ffff"/><rect x="7" y="9" width="4" height="1" fill="#000"/><rect x="2" y="10" width="2" height="1" fill="#000"/><rect x="4" y="10" width="1" height="1" fill="#0000ff"/><rect x="5" y="10" width="1" height="1" fill="#000"/><rect x="6" y="10" width="1" height="1" fill="#00ffff"/><rect x="7" y="10" width="1" height="1" fill="#000"/><rect x="8" y="10" width="1" height="1" fill="#0000ff"/><rect x="9" y="10" width="1" height="1" fill="#000"/><rect x="4" y="11" width="5" height="1" fill="#000"/></svg>
<svg style="left:485px;top:47px" width="16" height="15" viewBox="0 0 16 15" shape-rendering="crispEdges"><rect x="2" y="0" width="1" height="1" fill="#000"/><rect x="1" y="1" width="2" height="1" fill="#000"/><rect x="6" y="1" width="4" height="1" fill="#000"/><rect x="0" y="2" width="1" height="1" fill="#000"/><rect x="1" y="2" width="1" height="1" fill="#fff"/><rect x="2" y="2" width="1" height="1" fill="#000"/><rect x="6" y="2" width="1" height="1" fill="#000"/><rect x="7" y="2" width="2" height="1" fill="#ffff00"/><rect x="9" y="2" width="1" height="1" fill="#000"/><rect x="0" y="3" width="1" height="1" fill="#000"/><rect x="1" y="3" width="1" height="1" fill="#fff"/><rect x="2" y="3" width="1" height="1" fill="#000"/><rect x="6" y="3" width="1" height="1" fill="#000"/><rect x="7" y="3" width="2" height="1" fill="#ffff00"/><rect x="9" y="3" width="5" height="1" fill="#000"/><rect x="0" y="4" width="1" height="1" fill="#000"/><rect x="1" y="4" width="1" height="1" fill="#fff"/><rect x="2" y="4" width="1" height="1" fill="#000"/><rect x="6" y="4" width="1" height="1" fill="#000"/><rect x="7" y="4" width="2" height="1" fill="#ffff00"/><rect x="9" y="4" width="1" height="1" fill="#000"/><rect x="10" y="4" width="3" height="1" fill="#ff0000"/><rect x="13" y="4" width="1" height="1" fill="#000"/><rect x="0" y="5" width="1" height="1" fill="#000"/><rect x="1" y="5" width="1" height="1" fill="#fff"/><rect x="2" y="5" width="5" height="1" fill="#000"/><rect x="7" y="5" width="2" height="1" fill="#ffff00"/><rect x="9" y="5" width="1" height="1" fill="#000"/><rect x="10" y="5" width="3" height="1" fill="#ff0000"/><rect x="13" y="5" width="1" height="1" fill="#000"/><rect x="0" y="6" width="1" height="1" fill="#000"/><rect x="1" y="6" width="1" height="1" fill="#fff"/><rect x="2" y="6" width="1" height="1" fill="#000"/><rect x="3" y="6" width="3" height="1" fill="#0000ff"/><rect x="6" y="6" width="1" height="1" fill="#000"/><rect x="7" y="6" width="2" height="1" fill="#ffff00"/><rect x="9" y="6" width="1" height="1" fill="#000"/><rect x="10" y="6" width="3" height="1" fill="#ff0000"/><rect x="13" y="6" width="1" height="1" fill="#000"/><rect x="0" y="7" width="1" height="1" fill="#000"/><rect x="1" y="7" width="1" height="1" fill="#fff"/><rect x="2" y="7" width="1" height="1" fill="#000"/><rect x="3" y="7" width="3" height="1" fill="#0000ff"/><rect x="6" y="7" width="1" height="1" fill="#000"/><rect x="7" y="7" width="2" height="1" fill="#ffff00"/><rect x="9" y="7" width="1" height="1" fill="#000"/><rect x="10" y="7" width="3" height="1" fill="#ff0000"/><rect x="13" y="7" width="1" height="1" fill="#000"/><rect x="0" y="8" width="1" height="1" fill="#000"/><rect x="1" y="8" width="1" height="1" fill="#fff"/><rect x="2" y="8" width="1" height="1" fill="#000"/><rect x="3" y="8" width="3" height="1" fill="#0000ff"/><rect x="6" y="8" width="1" height="1" fill="#000"/><rect x="7" y="8" width="2" height="1" fill="#ffff00"/><rect x="9" y="8" width="1" height="1" fill="#000"/><rect x="10" y="8" width="3" height="1" fill="#ff0000"/><rect x="13" y="8" width="1" height="1" fill="#000"/><rect x="0" y="9" width="1" height="1" fill="#000"/><rect x="1" y="9" width="1" height="1" fill="#fff"/><rect x="2" y="9" width="1" height="1" fill="#000"/><rect x="3" y="9" width="3" height="1" fill="#0000ff"/><rect x="6" y="9" width="1" height="1" fill="#000"/><rect x="7" y="9" width="2" height="1" fill="#ffff00"/><rect x="9" y="9" width="1" height="1" fill="#000"/><rect x="10" y="9" width="3" height="1" fill="#ff0000"/><rect x="13" y="9" width="1" height="1" fill="#000"/><rect x="0" y="10" width="1" height="1" fill="#000"/><rect x="1" y="10" width="1" height="1" fill="#fff"/><rect x="2" y="10" width="1" height="1" fill="#000"/><rect x="3" y="10" width="3" height="1" fill="#0000ff"/><rect x="6" y="10" width="1" height="1" fill="#000"/><rect x="7" y="10" width="2" height="1" fill="#ffff00"/><rect x="9" y="10" width="1" height="1" fill="#000"/><rect x="10" y="10" width="3" height="1" fill="#ff0000"/><rect x="13" y="10" width="1" height="1" fill="#000"/><rect x="0" y="11" width="1" height="1" fill="#000"/><rect x="1" y="11" width="1" height="1" fill="#fff"/><rect x="2" y="11" width="1" height="1" fill="#000"/><rect x="3" y="11" width="3" height="1" fill="#0000ff"/><rect x="6" y="11" width="1" height="1" fill="#000"/><rect x="7" y="11" width="2" height="1" fill="#ffff00"/><rect x="9" y="11" width="1" height="1" fill="#000"/><rect x="10" y="11" width="3" height="1" fill="#ff0000"/><rect x="13" y="11" width="1" height="1" fill="#000"/><rect x="0" y="12" width="1" height="1" fill="#000"/><rect x="1" y="12" width="1" height="1" fill="#fff"/><rect x="2" y="12" width="13" height="1" fill="#000"/><rect x="0" y="13" width="1" height="1" fill="#000"/><rect x="1" y="13" width="14" height="1" fill="#fff"/><rect x="15" y="13" width="1" height="1" fill="#000"/><rect x="0" y="14" width="16" height="1" fill="#000"/></svg>
<svg style="left:510px;top:47px" width="13" height="16" viewBox="0 0 13 16" shape-rendering="crispEdges"><rect x="4" y="0" width="4" height="1" fill="#000"/><rect x="10" y="0" width="1" height="1" fill="#ffff00"/><rect x="2" y="1" width="2" height="1" fill="#000"/><rect x="4" y="1" width="1" height="1" fill="#0000ff"/><rect x="5" y="1" width="2" height="1" fill="#008000"/><rect x="7" y="1" width="1" height="1" fill="#0000ff"/><rect x="8" y="1" width="2" height="1" fill="#000"/><rect x="10" y="1" width="2" height="1" fill="#ffff00"/><rect x="1" y="2" width="1" height="1" fill="#000"/><rect x="2" y="2" width="1" height="1" fill="#0000ff"/><rect x="3" y="2" width="1" height="1" fill="#fff"/><rect x="4" y="2" width="3" height="1" fill="#008000"/><rect x="7" y="2" width="3" height="1" fill="#0000ff"/><rect x="10" y="2" width="1" height="1" fill="#000"/><rect x="11" y="2" width="2" height="1" fill="#ffff00"/><rect x="1" y="3" width="1" height="1" fill="#000"/><rect x="2" y="3" width="1" height="1" fill="#fff"/><rect x="3" y="3" width="1" height="1" fill="#0000ff"/><rect x="4" y="3" width="4" height="1" fill="#008000"/><rect x="8" y="3" width="2" height="1" fill="#0000ff"/><rect x="10" y="3" width="2" height="1" fill="#000"/><rect x="12" y="3" width="1" height="1" fill="#ffff00"/><rect x="0" y="4" width="1" height="1" fill="#000"/><rect x="1" y="4" width="2" height="1" fill="#0000ff"/><rect x="3" y="4" width="4" height="1" fill="#008000"/><rect x="7" y="4" width="4" height="1" fill="#0000ff"/><rect x="11" y="4" width="1" height="1" fill="#000"/><rect x="12" y="4" width="1" height="1" fill="#ffff00"/><rect x="0" y="5" width="1" height="1" fill="#000"/><rect x="1" y="5" width="3" height="1" fill="#0000ff"/><rect x="4" y="5" width="2" height="1" fill="#008000"/><rect x="6" y="5" width="2" height="1" fill="#0000ff"/><rect x="8" y="5" width="1" height="1" fill="#008000"/><rect x="9" y="5" width="2" height="1" fill="#0000ff"/><rect x="11" y="5" width="1" height="1" fill="#000"/><rect x="12" y="5" width="1" height="1" fill="#ffff00"/><rect x="0" y="6" width="1" height="1" fill="#000"/><rect x="1" y="6" width="1" height="1" fill="#0000ff"/><rect x="2" y="6" width="1" height="1" fill="#008000"/><rect x="3" y="6" width="4" height="1" fill="#0000ff"/><rect x="7" y="6" width="3" height="1" fill="#008000"/><rect x="10" y="6" width="1" height="1" fill="#0000ff"/><rect x="11" y="6" width="1" height="1" fill="#000"/><rect x="12" y="6" width="1" height="1" fill="#ffff00"/><rect x="0" y="7" width="1" height="1" fill="#000"/><rect x="1" y="7" width="1" height="1" fill="#0000ff"/><rect x="2" y="7" width="2" height="1" fill="#008000"/><rect x="4" y="7" width="4" height="1" fill="#0000ff"/><rect x="8" y="7" width="2" height="1" fill="#008000"/><rect x="10" y="7" width="1" height="1" fill="#0000ff"/><rect x="11" y="7" width="1" height="1" fill="#000"/><rect x="12" y="7" width="1" height="1" fill="#ffff00"/><rect x="1" y="8" width="1" height="1" fill="#000"/><rect x="2" y="8" width="1" height="1" fill="#0000ff"/><rect x="3" y="8" width="1" height="1" fill="#008000"/><rect x="4" y="8" width="6" height="1" fill="#0000ff"/><rect x="10" y="8" width="1" height="1" fill="#000"/><rect x="11" y="8" width="2" height="1" fill="#ffff00"/><rect x="1" y="9" width="2" height="1" fill="#000"/><rect x="3" y="9" width="6" height="1" fill="#0000ff"/><rect x="9" y="9" width="1" height="1" fill="#000"/><rect x="10" y="9" width="2" height="1" fill="#ffff00"/><rect x="2" y="10" width="7" height="1" fill="#000"/><rect x="9" y="10" width="2" height="1" fill="#ffff00"/><rect x="4" y="11" width="1" height="1" fill="#000"/><rect x="5" y="11" width="4" height="1" fill="#ffff00"/><rect x="9" y="11" width="1" height="1" fill="#000"/><rect x="5" y="12" width="1" height="1" fill="#000"/><rect x="6" y="12" width="2" height="1" fill="#ffff00"/><rect x="8" y="12" width="1" height="1" fill="#000"/><rect x="3" y="13" width="2" height="1" fill="#000"/><rect x="5" y="13" width="4" height="1" fill="#ffff00"/><rect x="9" y="13" width="2" height="1" fill="#000"/><rect x="2" y="14" width="1" height="1" fill="#000"/><rect x="3" y="14" width="8" height="1" fill="#ffff00"/><rect x="11" y="14" width="1" height="1" fill="#000"/><rect x="2" y="15" width="10" height="1" fill="#000"/></svg>
<svg style="left:531px;top:48px" width="16" height="13" viewBox="0 0 16 13" shape-rendering="crispEdges"><rect x="6" y="0" width="9" height="1" fill="#000"/><rect x="5" y="1" width="1" height="1" fill="#000"/><rect x="6" y="1" width="7" height="1" fill="#ffff00"/><rect x="13" y="1" width="2" height="1" fill="#000"/><rect x="4" y="2" width="1" height="1" fill="#000"/><rect x="5" y="2" width="7" height="1" fill="#ffff00"/><rect x="12" y="2" width="1" height="1" fill="#000"/><rect x="13" y="2" width="1" height="1" fill="#808000"/><rect x="14" y="2" width="1" height="1" fill="#000"/><rect x="4" y="3" width="8" height="1" fill="#000"/><rect x="12" y="3" width="2" height="1" fill="#808000"/><rect x="14" y="3" width="1" height="1" fill="#000"/><rect x="4" y="4" width="1" height="1" fill="#000"/><rect x="5" y="4" width="6" height="1" fill="#ffff00"/><rect x="11" y="4" width="1" height="1" fill="#000"/><rect x="12" y="4" width="2" height="1" fill="#808000"/><rect x="14" y="4" width="1" height="1" fill="#000"/><rect x="3" y="5" width="1" height="1" fill="#000080"/><rect x="4" y="5" width="1" height="1" fill="#000"/><rect x="5" y="5" width="6" height="1" fill="#ffff00"/><rect x="11" y="5" width="1" height="1" fill="#000"/><rect x="12" y="5" width="2" height="1" fill="#808000"/><rect x="14" y="5" width="1" height="1" fill="#000"/><rect x="2" y="6" width="2" height="1" fill="#000080"/><rect x="4" y="6" width="1" height="1" fill="#000"/><rect x="5" y="6" width="6" height="1" fill="#ffff00"/><rect x="11" y="6" width="1" height="1" fill="#000"/><rect x="12" y="6" width="1" height="1" fill="#808000"/><rect x="13" y="6" width="2" height="1" fill="#000"/><rect x="2" y="7" width="3" height="1" fill="#000080"/><rect x="5" y="7" width="4" height="1" fill="#ffff00"/><rect x="9" y="7" width="4" height="1" fill="#000"/><rect x="13" y="7" width="2" height="1" fill="#00ffff"/><rect x="15" y="7" width="1" height="1" fill="#000"/><rect x="1" y="8" width="1" height="1" fill="#000080"/><rect x="3" y="8" width="2" height="1" fill="#000080"/><rect x="5" y="8" width="4" height="1" fill="#000"/><rect x="9" y="8" width="2" height="1" fill="#fff"/><rect x="11" y="8" width="3" height="1" fill="#00ffff"/><rect x="14" y="8" width="1" height="1" fill="#000"/><rect x="1" y="9" width="5" height="1" fill="#000080"/><rect x="7" y="9" width="1" height="1" fill="#000"/><rect x="8" y="9" width="1" height="1" fill="#fff"/><rect x="9" y="9" width="4" height="1" fill="#00ffff"/><rect x="13" y="9" width="1" height="1" fill="#000"/><rect x="0" y="10" width="1" height="1" fill="#000080"/><rect x="4" y="10" width="2" height="1" fill="#000080"/><rect x="7" y="10" width="1" height="1" fill="#000"/><rect x="8" y="10" width="5" height="1" fill="#00ffff"/><rect x="13" y="10" width="1" height="1" fill="#000"/><rect x="0" y="11" width="1" height="1" fill="#000080"/><rect x="4" y="11" width="3" height="1" fill="#000080"/><rect x="7" y="11" width="1" height="1" fill="#000"/><rect x="8" y="11" width="4" height="1" fill="#00ffff"/><rect x="12" y="11" width="1" height="1" fill="#000"/><rect x="8" y="12" width="4" height="1" fill="#000"/></svg>
<svg style="left:618px;top:48px" width="16" height="13" viewBox="0 0 16 13" shape-rendering="crispEdges"><rect x="2" y="0" width="12" height="1" fill="#000"/><rect x="1" y="1" width="1" height="1" fill="#000"/><rect x="2" y="1" width="5" height="1" fill="#ffffcc"/><rect x="7" y="1" width="3" height="1" fill="#000080"/><rect x="10" y="1" width="4" height="1" fill="#ffffcc"/><rect x="14" y="1" width="1" height="1" fill="#000"/><rect x="1" y="2" width="1" height="1" fill="#000"/><rect x="2" y="2" width="4" height="1" fill="#ffffcc"/><rect x="6" y="2" width="2" height="1" fill="#000080"/><rect x="8" y="2" width="1" height="1" fill="#ffffcc"/><rect x="9" y="2" width="2" height="1" fill="#000080"/><rect x="11" y="2" width="3" height="1" fill="#ffffcc"/><rect x="14" y="2" width="1" height="1" fill="#000"/><rect x="1" y="3" width="4" height="1" fill="#000"/><rect x="5" y="3" width="4" height="1" fill="#ffffcc"/><rect x="9" y="3" width="2" height="1" fill="#000080"/><rect x="11" y="3" width="3" height="1" fill="#ffffcc"/><rect x="14" y="3" width="1" height="1" fill="#000"/><rect x="0" y="4" width="1" height="1" fill="#000"/><rect x="1" y="4" width="4" height="1" fill="#ffff00"/><rect x="5" y="4" width="1" height="1" fill="#000"/><rect x="6" y="4" width="2" height="1" fill="#ffffcc"/><rect x="8" y="4" width="2" height="1" fill="#000080"/><rect x="10" y="4" width="4" height="1" fill="#ffffcc"/><rect x="14" y="4" width="1" height="1" fill="#000"/><rect x="0" y="5" width="1" height="1" fill="#000"/><rect x="1" y="5" width="1" height="1" fill="#ffff00"/><rect x="2" y="5" width="1" height="1" fill="#fff"/><rect x="3" y="5" width="3" height="1" fill="#ffff00"/><rect x="6" y="5" width="1" height="1" fill="#000"/><rect x="7" y="5" width="1" height="1" fill="#ffffcc"/><rect x="8" y="5" width="2" height="1" fill="#000080"/><rect x="10" y="5" width="4" height="1" fill="#ffffcc"/><rect x="14" y="5" width="1" height="1" fill="#000"/><rect x="0" y="6" width="1" height="1" fill="#000"/><rect x="1" y="6" width="5" height="1" fill="#ffff00"/><rect x="6" y="6" width="1" height="1" fill="#000"/><rect x="7" y="6" width="7" height="1" fill="#ffffcc"/><rect x="14" y="6" width="1" height="1" fill="#000"/><rect x="0" y="7" width="1" height="1" fill="#000"/><rect x="1" y="7" width="5" height="1" fill="#ffff00"/><rect x="6" y="7" width="1" height="1" fill="#000"/><rect x="7" y="7" width="1" height="1" fill="#ffffcc"/><rect x="8" y="7" width="2" height="1" fill="#000080"/><rect x="10" y="7" width="4" height="1" fill="#ffffcc"/><rect x="14" y="7" width="1" height="1" fill="#000"/><rect x="1" y="8" width="1" height="1" fill="#000"/><rect x="2" y="8" width="3" height="1" fill="#ffff00"/><rect x="5" y="8" width="1" height="1" fill="#000"/><rect x="6" y="8" width="7" height="1" fill="#ffffcc"/><rect x="13" y="8" width="1" height="1" fill="#000"/><rect x="1" y="9" width="1" height="1" fill="#000"/><rect x="2" y="9" width="3" height="1" fill="#ffff00"/><rect x="5" y="9" width="5" height="1" fill="#000"/><rect x="10" y="9" width="1" height="1" fill="#ffffcc"/><rect x="11" y="9" width="2" height="1" fill="#000"/><rect x="2" y="10" width="3" height="1" fill="#000"/><rect x="9" y="10" width="1" height="1" fill="#000"/><rect x="10" y="10" width="1" height="1" fill="#ffffcc"/><rect x="11" y="10" width="1" height="1" fill="#000"/><rect x="2" y="11" width="1" height="1" fill="#000"/><rect x="3" y="11" width="1" height="1" fill="#c0c0c0"/><rect x="4" y="11" width="1" height="1" fill="#000"/><rect x="10" y="11" width="2" height="1" fill="#000"/><rect x="2" y="12" width="3" height="1" fill="#000"/><rect x="11" y="12" width="1" height="1" fill="#000"/></svg>
<span class="t" style="left:389.5px;top:46px;font-family:'Liberation Serif',serif;font-size:16px">Σ</span>
<span class="t" style="left:412px;top:47px;font-family:'Liberation Serif',serif;font-size:15px;font-weight:bold"><i>f</i></span>
<span class="t" style="left:417px;top:54px;font-family:'Liberation Serif',serif;font-size:9px;font-weight:bold"><i>x</i></span>
<span class="t az" style="left:434px;top:46px;font-family:'Liberation Serif',serif;font-size:10px;font-weight:bold;color:#000080">A</span>
<span class="t az" style="left:434px;top:54px;font-family:'Liberation Serif',serif;font-size:10px;font-weight:bold;color:#800000">Я</span>
<svg style="left:443px;top:48px" width="5" height="14" viewBox="0 0 5 14" shape-rendering="crispEdges"><rect x="2" y="0" width="1" height="1" fill="#000"/><rect x="2" y="1" width="1" height="1" fill="#000"/><rect x="2" y="2" width="1" height="1" fill="#000"/><rect x="2" y="3" width="1" height="1" fill="#000"/><rect x="2" y="4" width="1" height="1" fill="#000"/><rect x="2" y="5" width="1" height="1" fill="#000"/><rect x="2" y="6" width="1" height="1" fill="#000"/><rect x="2" y="7" width="1" height="1" fill="#000"/><rect x="2" y="8" width="1" height="1" fill="#000"/><rect x="2" y="9" width="1" height="1" fill="#000"/><rect x="0" y="10" width="5" height="1" fill="#000"/><rect x="1" y="11" width="3" height="1" fill="#000"/><rect x="1" y="12" width="3" height="1" fill="#000"/><rect x="2" y="13" width="1" height="1" fill="#000"/></svg>
<span class="t az" style="left:457px;top:46px;font-family:'Liberation Serif',serif;font-size:10px;font-weight:bold;color:#800000">Я</span>
<span class="t az" style="left:457px;top:54px;font-family:'Liberation Serif',serif;font-size:10px;font-weight:bold;color:#000080">A</span>
<svg style="left:466px;top:48px" width="5" height="14" viewBox="0 0 5 14" shape-rendering="crispEdges"><rect x="2" y="0" width="1" height="1" fill="#000"/><rect x="2" y="1" width="1" height="1" fill="#000"/><rect x="2" y="2" width="1" height="1" fill="#000"/><rect x="2" y="3" width="1" height="1" fill="#000"/><rect x="2" y="4" width="1" height="1" fill="#000"/><rect x="2" y="5" width="1" height="1" fill="#000"/><rect x="2" y="6" width="1" height="1" fill="#000"/><rect x="2" y="7" width="1" height="1" fill="#000"/><rect x="2" y="8" width="1" height="1" fill="#000"/><rect x="2" y="9" width="1" height="1" fill="#000"/><rect x="0" y="10" width="5" height="1" fill="#000"/><rect x="1" y="11" width="3" height="1" fill="#000"/><rect x="1" y="12" width="3" height="1" fill="#000"/><rect x="2" y="13" width="1" height="1" fill="#000"/></svg>
<div class="sep" style="left:81px;top:45px;width:2px;height:20px;"></div>
<div class="sep" style="left:156px;top:45px;width:2px;height:20px;"></div>
<div class="sep" style="left:254px;top:45px;width:2px;height:20px;"></div>
<div class="sep" style="left:328px;top:45px;width:2px;height:20px;"></div>
<div class="sep" style="left:380px;top:45px;width:2px;height:20px;"></div>
<div class="sep" style="left:479px;top:45px;width:2px;height:20px;"></div>
<div class="sep" style="left:553px;top:45px;width:2px;height:20px;"></div>
<div class="sep" style="left:612px;top:45px;width:2px;height:20px;"></div>
<div class="" style="left:559px;top:47px;width:48px;height:15px;background:#fff"></div>
<span class="t ui" style="left:561px;top:49px;;transform:scaleX(0.8754);transform-origin:0 0">100%</span>
<div class="" style="left:597px;top:48px;width:9px;height:13px;background:#c0c0c0"></div>
<svg style="left:599px;top:54px" width="5" height="3" viewBox="0 0 5 3" shape-rendering="crispEdges"><rect x="0" y="0" width="5" height="1" fill="#000"/><rect x="1" y="1" width="3" height="1" fill="#000"/><rect x="2" y="2" width="1" height="1" fill="#000"/></svg>
<div class="" style="left:12px;top:73px;width:130px;height:15px;background:#fff"></div>
<span class="t ui" style="left:14px;top:74px;;transform:scaleX(0.8195);transform-origin:0 0">Arial</span>
<div class="" style="left:132px;top:74px;width:9px;height:13px;background:#c0c0c0"></div>
<svg style="left:134px;top:79px" width="5" height="3" viewBox="0 0 5 3" shape-rendering="crispEdges"><rect x="0" y="0" width="5" height="1" fill="#000"/><rect x="1" y="1" width="3" height="1" fill="#000"/><rect x="2" y="2" width="1" height="1" fill="#000"/></svg>
<div class="" style="left:146px;top:73px;width:36px;height:15px;background:#fff"></div>
<span class="t ui" style="left:149px;top:74px;;transform:scaleX(0.7191);transform-origin:0 0">10</span>
<div class="" style="left:172px;top:74px;width:9px;height:13px;background:#c0c0c0"></div>
<svg style="left:174px;top:79px" width="5" height="3" viewBox="0 0 5 3" shape-rendering="crispEdges"><rect x="0" y="0" width="5" height="1" fill="#000"/><rect x="1" y="1" width="3" height="1" fill="#000"/><rect x="2" y="2" width="1" height="1" fill="#000"/></svg>
<span class="t" style="left:195.5px;top:74px;font-family:'Liberation Serif',serif;font-weight:bold;font-size:14px;transform:scaleX(0.7946);transform-origin:0 0">Ж</span>
<span class="t" style="left:218px;top:74px;font-family:'Liberation Serif',serif;font-weight:bold;font-style:italic;font-size:14px;transform:scaleX(1.2632);transform-origin:0 0">К</span>
<span class="t" style="left:243px;top:74px;font-family:'Liberation Serif',serif;font-weight:bold;font-size:14px;transform:scaleX(0.924);transform-origin:0 0">Ч</span>
<div class="bk" style="left:243px;top:86px;width:10px;height:1px;"></div>
<svg style="left:268px;top:75px" width="14" height="11" viewBox="0 0 14 11" shape-rendering="crispEdges"><rect x="0" y="0" width="14" height="1" fill="#000"/><rect x="0" y="2" width="10" height="1" fill="#000"/><rect x="0" y="4" width="14" height="1" fill="#000"/><rect x="0" y="6" width="10" height="1" fill="#000"/><rect x="0" y="8" width="14" height="1" fill="#000"/><rect x="0" y="10" width="10" height="1" fill="#000"/></svg>
<svg style="left:291px;top:75px" width="14" height="11" viewBox="0 0 14 11" shape-rendering="crispEdges"><rect x="0" y="0" width="14" height="1" fill="#000"/><rect x="2" y="2" width="10" height="1" fill="#000"/><rect x="0" y="4" width="14" height="1" fill="#000"/><rect x="2" y="6" width="10" height="1" fill="#000"/><rect x="0" y="8" width="14" height="1" fill="#000"/><rect x="2" y="10" width="10" height="1" fill="#000"/></svg>
<svg style="left:314px;top:75px" width="14" height="11" viewBox="0 0 14 11" shape-rendering="crispEdges"><rect x="0" y="0" width="14" height="1" fill="#000"/><rect x="4" y="2" width="10" height="1" fill="#000"/><rect x="0" y="4" width="14" height="1" fill="#000"/><rect x="4" y="6" width="10" height="1" fill="#000"/><rect x="0" y="8" width="14" height="1" fill="#000"/><rect x="4" y="10" width="10" height="1" fill="#000"/></svg>
<svg style="left:337px;top:73px" width="16" height="15" viewBox="0 0 16 15" shape-rendering="crispEdges"><rect x="0" y="0" width="16" height="1" fill="#000"/><rect x="0" y="1" width="1" height="1" fill="#000"/><rect x="1" y="1" width="6" height="1" fill="#fff"/><rect x="7" y="1" width="1" height="1" fill="#000"/><rect x="8" y="1" width="7" height="1" fill="#fff"/><rect x="15" y="1" width="1" height="1" fill="#000"/><rect x="0" y="2" width="1" height="1" fill="#000"/><rect x="1" y="2" width="6" height="1" fill="#fff"/><rect x="7" y="2" width="1" height="1" fill="#000"/><rect x="8" y="2" width="7" height="1" fill="#fff"/><rect x="15" y="2" width="1" height="1" fill="#000"/><rect x="0" y="3" width="16" height="1" fill="#000"/><rect x="0" y="4" width="1" height="1" fill="#000"/><rect x="1" y="4" width="14" height="1" fill="#fff"/><rect x="15" y="4" width="1" height="1" fill="#000"/><rect x="0" y="5" width="1" height="1" fill="#000"/><rect x="1" y="5" width="1" height="1" fill="#fff"/><rect x="2" y="5" width="1" height="1" fill="#000"/><rect x="3" y="5" width="3" height="1" fill="#fff"/><rect x="6" y="5" width="3" height="1" fill="#000"/><rect x="9" y="5" width="4" height="1" fill="#fff"/><rect x="13" y="5" width="1" height="1" fill="#000"/><rect x="14" y="5" width="1" height="1" fill="#fff"/><rect x="15" y="5" width="1" height="1" fill="#000"/><rect x="0" y="6" width="3" height="1" fill="#000"/><rect x="3" y="6" width="6" height="1" fill="#fff"/><rect x="9" y="6" width="1" height="1" fill="#000"/><rect x="10" y="6" width="2" height="1" fill="#fff"/><rect x="12" y="6" width="4" height="1" fill="#000"/><rect x="0" y="7" width="4" height="1" fill="#000"/><rect x="4" y="7" width="2" height="1" fill="#fff"/><rect x="6" y="7" width="4" height="1" fill="#000"/><rect x="10" y="7" width="1" height="1" fill="#fff"/><rect x="11" y="7" width="5" height="1" fill="#000"/><rect x="0" y="8" width="3" height="1" fill="#000"/><rect x="3" y="8" width="2" height="1" fill="#fff"/><rect x="5" y="8" width="2" height="1" fill="#000"/><rect x="7" y="8" width="2" height="1" fill="#fff"/><rect x="9" y="8" width="1" height="1" fill="#000"/><rect x="10" y="8" width="2" height="1" fill="#fff"/><rect x="12" y="8" width="4" height="1" fill="#000"/><rect x="0" y="9" width="1" height="1" fill="#000"/><rect x="1" y="9" width="1" height="1" fill="#fff"/><rect x="2" y="9" width="1" height="1" fill="#000"/><rect x="3" y="9" width="3" height="1" fill="#fff"/><rect x="6" y="9" width="5" height="1" fill="#000"/><rect x="11" y="9" width="2" height="1" fill="#fff"/><rect x="13" y="9" width="1" height="1" fill="#000"/><rect x="14" y="9" width="1" height="1" fill="#fff"/><rect x="15" y="9" width="1" height="1" fill="#000"/><rect x="0" y="10" width="1" height="1" fill="#000"/><rect x="1" y="10" width="14" height="1" fill="#fff"/><rect x="15" y="10" width="1" height="1" fill="#000"/><rect x="0" y="11" width="16" height="1" fill="#000"/><rect x="0" y="12" width="1" height="1" fill="#000"/><rect x="1" y="12" width="6" height="1" fill="#fff"/><rect x="7" y="12" width="1" height="1" fill="#000"/><rect x="8" y="12" width="7" height="1" fill="#fff"/><rect x="15" y="12" width="1" height="1" fill="#000"/><rect x="0" y="13" width="1" height="1" fill="#000"/><rect x="1" y="13" width="6" height="1" fill="#fff"/><rect x="7" y="13" width="1" height="1" fill="#000"/><rect x="8" y="13" width="7" height="1" fill="#fff"/><rect x="15" y="13" width="1" height="1" fill="#000"/><rect x="0" y="14" width="16" height="1" fill="#000"/></svg>
<svg style="left:366px;top:74px" width="16" height="12" viewBox="0 0 16 12" shape-rendering="crispEdges"><rect x="0" y="0" width="15" height="1" fill="#000"/><rect x="0" y="1" width="1" height="1" fill="#000"/><rect x="1" y="1" width="13" height="1" fill="#008000"/><rect x="14" y="1" width="1" height="1" fill="#000"/><rect x="0" y="2" width="1" height="1" fill="#000"/><rect x="1" y="2" width="2" height="1" fill="#008000"/><rect x="3" y="2" width="4" height="1" fill="#fff"/><rect x="7" y="2" width="2" height="1" fill="#000"/><rect x="9" y="2" width="3" height="1" fill="#fff"/><rect x="12" y="2" width="2" height="1" fill="#008000"/><rect x="14" y="2" width="1" height="1" fill="#000"/><rect x="0" y="3" width="1" height="1" fill="#000"/><rect x="1" y="3" width="1" height="1" fill="#008000"/><rect x="2" y="3" width="4" height="1" fill="#fff"/><rect x="6" y="3" width="1" height="1" fill="#000"/><rect x="7" y="3" width="2" height="1" fill="#fff"/><rect x="9" y="3" width="1" height="1" fill="#000"/><rect x="10" y="3" width="3" height="1" fill="#fff"/><rect x="13" y="3" width="1" height="1" fill="#008000"/><rect x="14" y="3" width="1" height="1" fill="#000"/><rect x="0" y="4" width="1" height="1" fill="#000"/><rect x="1" y="4" width="1" height="1" fill="#008000"/><rect x="2" y="4" width="5" height="1" fill="#fff"/><rect x="7" y="4" width="4" height="1" fill="#000"/><rect x="11" y="4" width="2" height="1" fill="#fff"/><rect x="13" y="4" width="1" height="1" fill="#008000"/><rect x="14" y="4" width="1" height="1" fill="#000"/><rect x="0" y="5" width="1" height="1" fill="#000"/><rect x="1" y="5" width="2" height="1" fill="#008000"/><rect x="3" y="5" width="5" height="1" fill="#fff"/><rect x="8" y="5" width="1" height="1" fill="#000"/><rect x="9" y="5" width="2" height="1" fill="#ffff00"/><rect x="11" y="5" width="1" height="1" fill="#000"/><rect x="12" y="5" width="2" height="1" fill="#008000"/><rect x="14" y="5" width="1" height="1" fill="#000"/><rect x="0" y="6" width="9" height="1" fill="#000"/><rect x="9" y="6" width="2" height="1" fill="#ffff00"/><rect x="11" y="6" width="4" height="1" fill="#000"/><rect x="9" y="7" width="1" height="1" fill="#000"/><rect x="10" y="7" width="2" height="1" fill="#ffff00"/><rect x="12" y="7" width="1" height="1" fill="#000"/><rect x="1" y="8" width="4" height="1" fill="#000"/><rect x="8" y="8" width="2" height="1" fill="#000"/><rect x="10" y="8" width="2" height="1" fill="#ffff00"/><rect x="12" y="8" width="1" height="1" fill="#000"/><rect x="0" y="9" width="1" height="1" fill="#000"/><rect x="1" y="9" width="4" height="1" fill="#ffff00"/><rect x="5" y="9" width="3" height="1" fill="#000"/><rect x="8" y="9" width="1" height="1" fill="#ffff00"/><rect x="9" y="9" width="1" height="1" fill="#000"/><rect x="10" y="9" width="2" height="1" fill="#ffff00"/><rect x="12" y="9" width="1" height="1" fill="#000"/><rect x="0" y="10" width="6" height="1" fill="#000"/><rect x="6" y="10" width="3" height="1" fill="#ffff00"/><rect x="9" y="10" width="4" height="1" fill="#000"/><rect x="5" y="11" width="4" height="1" fill="#000"/></svg>
<svg style="left:436px;top:75px" width="5" height="5" viewBox="0 0 5 5" shape-rendering="crispEdges"><rect x="2" y="0" width="1" height="1" fill="#000080"/><rect x="1" y="1" width="2" height="1" fill="#000080"/><rect x="0" y="2" width="5" height="1" fill="#000080"/><rect x="1" y="3" width="2" height="1" fill="#000080"/><rect x="2" y="4" width="1" height="1" fill="#000080"/></svg>
<svg style="left:459px;top:83px" width="5" height="5" viewBox="0 0 5 5" shape-rendering="crispEdges"><rect x="2" y="0" width="1" height="1" fill="#000080"/><rect x="2" y="1" width="2" height="1" fill="#000080"/><rect x="0" y="2" width="5" height="1" fill="#000080"/><rect x="2" y="3" width="2" height="1" fill="#000080"/><rect x="2" y="4" width="1" height="1" fill="#000080"/></svg>
<svg style="left:487px;top:73px" width="16" height="15" viewBox="0 0 16 15" shape-rendering="crispEdges"><rect x="6" y="0" width="1" height="1" fill="#000"/><rect x="4" y="1" width="1" height="1" fill="#000"/><rect x="6" y="1" width="9" height="1" fill="#000"/><rect x="2" y="3" width="1" height="1" fill="#000080"/><rect x="6" y="3" width="1" height="1" fill="#000"/><rect x="9" y="3" width="6" height="1" fill="#000"/><rect x="1" y="4" width="2" height="1" fill="#000080"/><rect x="9" y="4" width="6" height="1" fill="#000"/><rect x="0" y="5" width="5" height="1" fill="#000080"/><rect x="6" y="5" width="1" height="1" fill="#000"/><rect x="9" y="5" width="6" height="1" fill="#000"/><rect x="1" y="6" width="2" height="1" fill="#000080"/><rect x="2" y="7" width="1" height="1" fill="#000080"/><rect x="6" y="7" width="1" height="1" fill="#000"/><rect x="9" y="7" width="6" height="1" fill="#000"/><rect x="9" y="8" width="6" height="1" fill="#000"/><rect x="6" y="9" width="1" height="1" fill="#000"/><rect x="4" y="10" width="1" height="1" fill="#000"/><rect x="6" y="10" width="9" height="1" fill="#000"/><rect x="6" y="12" width="1" height="1" fill="#000"/><rect x="4" y="13" width="1" height="1" fill="#000"/><rect x="6" y="13" width="1" height="1" fill="#000"/><rect x="8" y="13" width="1" height="1" fill="#000"/><rect x="10" y="13" width="1" height="1" fill="#000"/><rect x="12" y="13" width="1" height="1" fill="#000"/><rect x="14" y="13" width="1" height="1" fill="#000"/><rect x="6" y="14" width="1" height="1" fill="#000"/></svg>
<svg style="left:510px;top:73px" width="16" height="15" viewBox="0 0 16 15" shape-rendering="crispEdges"><rect x="6" y="0" width="1" height="1" fill="#000"/><rect x="4" y="1" width="1" height="1" fill="#000"/><rect x="6" y="1" width="9" height="1" fill="#000"/><rect x="2" y="3" width="1" height="1" fill="#000080"/><rect x="6" y="3" width="1" height="1" fill="#000"/><rect x="9" y="3" width="6" height="1" fill="#000"/><rect x="2" y="4" width="2" height="1" fill="#000080"/><rect x="9" y="4" width="6" height="1" fill="#000"/><rect x="0" y="5" width="5" height="1" fill="#000080"/><rect x="6" y="5" width="1" height="1" fill="#000"/><rect x="9" y="5" width="6" height="1" fill="#000"/><rect x="2" y="6" width="2" height="1" fill="#000080"/><rect x="2" y="7" width="1" height="1" fill="#000080"/><rect x="6" y="7" width="1" height="1" fill="#000"/><rect x="9" y="7" width="6" height="1" fill="#000"/><rect x="9" y="8" width="6" height="1" fill="#000"/><rect x="6" y="9" width="1" height="1" fill="#000"/><rect x="4" y="10" width="1" height="1" fill="#000"/><rect x="6" y="10" width="9" height="1" fill="#000"/><rect x="6" y="12" width="1" height="1" fill="#000"/><rect x="4" y="13" width="1" height="1" fill="#000"/><rect x="6" y="13" width="1" height="1" fill="#000"/><rect x="8" y="13" width="1" height="1" fill="#000"/><rect x="10" y="13" width="1" height="1" fill="#000"/><rect x="12" y="13" width="1" height="1" fill="#000"/><rect x="14" y="13" width="1" height="1" fill="#000"/><rect x="6" y="14" width="1" height="1" fill="#000"/></svg>
<svg style="left:541px;top:74px" width="13" height="13" viewBox="0 0 13 13" shape-rendering="crispEdges"><rect x="0" y="0" width="1" height="1" fill="#808080"/><rect x="2" y="0" width="1" height="1" fill="#808080"/><rect x="4" y="0" width="1" height="1" fill="#808080"/><rect x="6" y="0" width="1" height="1" fill="#808080"/><rect x="8" y="0" width="1" height="1" fill="#808080"/><rect x="10" y="0" width="1" height="1" fill="#808080"/><rect x="12" y="0" width="1" height="1" fill="#808080"/><rect x="0" y="2" width="1" height="1" fill="#808080"/><rect x="6" y="2" width="1" height="1" fill="#808080"/><rect x="12" y="2" width="1" height="1" fill="#808080"/><rect x="0" y="4" width="1" height="1" fill="#808080"/><rect x="6" y="4" width="1" height="1" fill="#808080"/><rect x="12" y="4" width="1" height="1" fill="#808080"/><rect x="0" y="6" width="1" height="1" fill="#808080"/><rect x="2" y="6" width="1" height="1" fill="#808080"/><rect x="4" y="6" width="1" height="1" fill="#808080"/><rect x="6" y="6" width="1" height="1" fill="#808080"/><rect x="8" y="6" width="1" height="1" fill="#808080"/><rect x="10" y="6" width="1" height="1" fill="#808080"/><rect x="12" y="6" width="1" height="1" fill="#808080"/><rect x="0" y="8" width="1" height="1" fill="#808080"/><rect x="6" y="8" width="1" height="1" fill="#808080"/><rect x="12" y="8" width="1" height="1" fill="#808080"/><rect x="0" y="10" width="1" height="1" fill="#808080"/><rect x="6" y="10" width="1" height="1" fill="#808080"/><rect x="12" y="10" width="1" height="1" fill="#808080"/><rect x="0" y="12" width="13" height="1" fill="#000"/></svg>
<svg style="left:561px;top:80px" width="5" height="3" viewBox="0 0 5 3" shape-rendering="crispEdges"><rect x="0" y="0" width="5" height="1" fill="#000"/><rect x="1" y="1" width="3" height="1" fill="#000"/><rect x="2" y="2" width="1" height="1" fill="#000"/></svg>
<svg style="left:573px;top:73px" width="17" height="16" viewBox="0 0 17 16" shape-rendering="crispEdges"><rect x="5" y="0" width="3" height="1" fill="#000080"/><rect x="4" y="1" width="1" height="1" fill="#000080"/><rect x="8" y="1" width="1" height="1" fill="#000080"/><rect x="4" y="2" width="1" height="1" fill="#000080"/><rect x="6" y="2" width="2" height="1" fill="#000"/><rect x="8" y="2" width="1" height="1" fill="#000080"/><rect x="4" y="3" width="1" height="1" fill="#000080"/><rect x="5" y="3" width="1" height="1" fill="#000"/><rect x="6" y="3" width="2" height="1" fill="#fff"/><rect x="8" y="3" width="1" height="1" fill="#000"/><rect x="9" y="3" width="1" height="1" fill="#000080"/><rect x="4" y="4" width="1" height="1" fill="#000"/><rect x="5" y="4" width="3" height="1" fill="#fff"/><rect x="8" y="4" width="1" height="1" fill="#c0c0c0"/><rect x="9" y="4" width="2" height="1" fill="#000"/><rect x="11" y="4" width="1" height="1" fill="#000080"/><rect x="3" y="5" width="1" height="1" fill="#000"/><rect x="4" y="5" width="3" height="1" fill="#fff"/><rect x="7" y="5" width="3" height="1" fill="#c0c0c0"/><rect x="10" y="5" width="2" height="1" fill="#000"/><rect x="12" y="5" width="1" height="1" fill="#000080"/><rect x="2" y="6" width="1" height="1" fill="#000"/><rect x="3" y="6" width="3" height="1" fill="#fff"/><rect x="6" y="6" width="4" height="1" fill="#c0c0c0"/><rect x="10" y="6" width="1" height="1" fill="#808080"/><rect x="11" y="6" width="1" height="1" fill="#000"/><rect x="12" y="6" width="2" height="1" fill="#000080"/><rect x="2" y="7" width="2" height="1" fill="#000"/><rect x="4" y="7" width="1" height="1" fill="#fff"/><rect x="5" y="7" width="4" height="1" fill="#c0c0c0"/><rect x="9" y="7" width="1" height="1" fill="#808080"/><rect x="10" y="7" width="1" height="1" fill="#000"/><rect x="12" y="7" width="2" height="1" fill="#000080"/><rect x="3" y="8" width="2" height="1" fill="#000"/><rect x="5" y="8" width="2" height="1" fill="#c0c0c0"/><rect x="7" y="8" width="2" height="1" fill="#808080"/><rect x="9" y="8" width="1" height="1" fill="#000"/><rect x="12" y="8" width="2" height="1" fill="#000080"/><rect x="4" y="9" width="2" height="1" fill="#000"/><rect x="6" y="9" width="2" height="1" fill="#808080"/><rect x="8" y="9" width="1" height="1" fill="#000"/><rect x="12" y="9" width="1" height="1" fill="#000080"/><rect x="5" y="10" width="3" height="1" fill="#000"/><rect x="0" y="12" width="17" height="1" fill="#ffff00"/><rect x="0" y="13" width="17" height="1" fill="#ffff00"/><rect x="0" y="14" width="17" height="1" fill="#ffff00"/><rect x="0" y="15" width="17" height="1" fill="#ffff00"/></svg>
<svg style="left:595px;top:80px" width="5" height="3" viewBox="0 0 5 3" shape-rendering="crispEdges"><rect x="0" y="0" width="5" height="1" fill="#000"/><rect x="1" y="1" width="3" height="1" fill="#000"/><rect x="2" y="2" width="1" height="1" fill="#000"/></svg>
<svg style="left:607px;top:85px" width="16" height="4" viewBox="0 0 16 4" shape-rendering="crispEdges"><rect x="0" y="0" width="16" height="1" fill="#ff0000"/><rect x="0" y="1" width="16" height="1" fill="#ff0000"/><rect x="0" y="2" width="16" height="1" fill="#ff0000"/><rect x="0" y="3" width="16" height="1" fill="#ff0000"/></svg>
<svg style="left:629px;top:80px" width="5" height="3" viewBox="0 0 5 3" shape-rendering="crispEdges"><rect x="0" y="0" width="5" height="1" fill="#000"/><rect x="1" y="1" width="3" height="1" fill="#000"/><rect x="2" y="2" width="1" height="1" fill="#000"/></svg>
<span class="t" style="left:391px;top:75px;font-weight:bold;font-size:13px;transform:scaleX(1.2108);transform-origin:0 0">%</span>
<span class="t" style="left:443px;top:73px;font-size:9px;transform:scaleX(0.9314);transform-origin:0 0">,0</span>
<span class="t" style="left:437px;top:81px;font-size:9px;transform:scaleX(1.0387);transform-origin:0 0">,00</span>
<span class="t" style="left:460px;top:73px;font-size:9px;transform:scaleX(1.0387);transform-origin:0 0">,00</span>
<span class="t" style="left:466px;top:81px;font-size:9px;transform:scaleX(0.9314);transform-origin:0 0">,0</span>
<span class="t" style="left:416px;top:70px;font-weight:bold;font-size:18px">,</span>
<span class="t" style="left:607px;top:70px;font-family:'Liberation Serif',serif;font-size:17px;font-weight:bold;color:#000080">A</span>
<div class="sep" style="left:186px;top:71px;width:2px;height:20px;"></div>
<div class="sep" style="left:261px;top:71px;width:2px;height:20px;"></div>
<div class="sep" style="left:359px;top:71px;width:2px;height:20px;"></div>
<div class="sep" style="left:480px;top:71px;width:2px;height:20px;"></div>
<div class="sep" style="left:532px;top:71px;width:2px;height:20px;"></div>
<div class="" style="left:0px;top:93px;width:800px;height:18px;background:#fff"></div>
<div class="bk" style="left:0px;top:93px;width:1px;height:19px;"></div>
<div class="sh" style="left:0px;top:111px;width:800px;height:1px;"></div>
<div class="bk" style="left:0px;top:112px;width:800px;height:1px;"></div>
<span class="t" style="left:40px;top:96px;font-size:13px;transform:scaleX(0.7864);transform-origin:0 0">AJ619</span>
<div class="raised" style="left:110px;top:94px;width:14px;height:17px;"></div>
<svg style="left:114px;top:100px" width="5" height="3" viewBox="0 0 5 3" shape-rendering="crispEdges"><rect x="0" y="0" width="5" height="1" fill="#000"/><rect x="1" y="1" width="3" height="1" fill="#000"/><rect x="2" y="2" width="1" height="1" fill="#000"/></svg>
<div class="" style="left:126px;top:93px;width:56px;height:18px;background:#c0c0c0"></div>
<div class="sh" style="left:181px;top:93px;width:1px;height:18px;"></div>
<span class="t" style="left:169px;top:95px;font-weight:bold;font-size:14px">=</span>
<span class="t" style="left:188px;top:95px;font-size:14px;transform:scaleX(0.9172);transform-origin:0 0">=AH619/AH618*AJ618</span>
<div class="" style="left:0px;top:113px;width:783px;height:424px;background:#fff"></div>
<div class="" style="left:0px;top:113px;width:2px;height:424px;background:#c0c0c0"></div>
<div class="bk" style="left:1px;top:113px;width:1px;height:424px;"></div>
<div class="" style="left:2px;top:113px;width:781px;height:17px;background:#c0c0c0"></div>
<div class="" style="left:2px;top:113px;width:26px;height:17px;box-shadow:inset -1px 0 0 #808080,inset 1px 1px 0 #fff"></div>
<div class="hl" style="left:27px;top:113px;width:1px;height:17px;"></div>
<div class="" style="left:28px;top:113px;width:201px;height:17px;box-shadow:inset -1px 0 0 #808080,inset 1px 0 0 #fff;text-align:center;padding-left:3px;font-size:14px;line-height:16px"><span class="t" style="position:static;display:inline-block;transform:scaleX(0.943);line-height:16px">AG</span></div>
<div class="" style="left:229px;top:113px;width:160px;height:17px;box-shadow:inset -1px 0 0 #808080,inset 1px 0 0 #fff;text-align:center;padding-left:3px;font-size:14px;line-height:16px"><span class="t" style="position:static;display:inline-block;transform:scaleX(0.943);line-height:16px">AH</span></div>
<div class="" style="left:389px;top:113px;width:160px;height:17px;box-shadow:inset -1px 0 0 #808080,inset 1px 0 0 #fff;text-align:center;padding-left:3px;font-size:14px;line-height:16px"><span class="t" style="position:static;display:inline-block;transform:scaleX(0.943);line-height:16px">AI</span></div>
<div class="" style="left:549px;top:113px;width:233px;height:17px;box-shadow:inset -1px 0 0 #808080,inset 1px 0 0 #fff;text-align:center;padding-left:3px;font-size:14px;line-height:16px"><span class="t" style="position:static;display:inline-block;transform:scaleX(0.943);line-height:16px">AJ</span></div>
<div class="" style="left:2px;top:130px;width:26px;height:34px;background:#c0c0c0;box-shadow:inset 0 1px 0 #fff"></div>
<span class="t" style="left:9.5px;top:149px;font-size:14px;transform:scaleX(0.8978);transform-origin:0 0">1</span>
<div class="hl" style="left:27px;top:130px;width:1px;height:34px;"></div>
<div class="" style="left:28px;top:130px;width:755px;height:34px;background:#808000"></div>
<span class="t" style="left:232px;top:149.5px;font-size:13.5px;font-weight:bold;font-style:italic;color:#fff;transform:scaleX(0.9789);transform-origin:0 0">Total Market Cap</span>
<span class="t" style="left:552px;top:149.5px;font-size:13.5px;font-weight:bold;font-style:italic;color:#fff;transform:scaleX(0.9509);transform-origin:0 0">KSE Index</span>
<div class="bk" style="left:2px;top:164px;width:781px;height:1px;"></div>
<div class="" style="left:2px;top:165px;width:26px;height:17px;background:#c0c0c0;box-shadow:inset -1px -1px 0 #808080,inset 0 1px 0 #fff"></div>
<span class="cell" style="left:3.5px;top:165px;width:25.5px">606</span>
<div class="" style="left:229px;top:165px;width:554px;height:17px;background:#ffffcc"></div>
<div class="" style="left:28px;top:181px;width:201px;height:1px;background:#c0c0c0"></div>
<span class="cell" style="left:29px;top:165px;width:211.0px">=СУММ(E606:AF606)</span>
<span class="cell" style="left:231px;top:165px;width:169.4px;transform:scaleX(0.9326)">=СУММ(E606:G606;I606:J606;L606)</span>
<span class="cell" style="left:391px;top:165px;width:171.0px;transform:scaleX(0.9241)">=AH606/1000000</span>
<span class="cell" style="left:551px;top:165px;width:246.6px;transform:scaleX(0.9326)">=AH606/AH605*AJ605</span>
<div class="" style="left:2px;top:182px;width:26px;height:17px;background:#c0c0c0;box-shadow:inset -1px -1px 0 #808080,inset 0 1px 0 #fff"></div>
<span class="cell" style="left:3.5px;top:182px;width:25.5px">607</span>
<div class="" style="left:229px;top:182px;width:554px;height:17px;background:#ffffcc"></div>
<div class="" style="left:28px;top:198px;width:201px;height:1px;background:#c0c0c0"></div>
<span class="cell" style="left:29px;top:182px;width:211.0px">=СУММ(E607:AF607)</span>
<span class="cell" style="left:231px;top:182px;width:169.4px;transform:scaleX(0.9326)">=СУММ(E607:G607;I607:J607;L607)</span>
<span class="cell" style="left:391px;top:182px;width:171.0px;transform:scaleX(0.9241)">=AH607/1000000</span>
<span class="cell" style="left:551px;top:182px;width:246.6px;transform:scaleX(0.9326)">=AH607/AH606*AJ606</span>
<div class="" style="left:2px;top:199px;width:26px;height:17px;background:#c0c0c0;box-shadow:inset -1px -1px 0 #808080,inset 0 1px 0 #fff"></div>
<span class="cell" style="left:3.5px;top:199px;width:25.5px">608</span>
<div class="" style="left:229px;top:199px;width:554px;height:17px;background:#ffffcc"></div>
<div class="" style="left:28px;top:215px;width:201px;height:1px;background:#c0c0c0"></div>
<span class="cell" style="left:29px;top:199px;width:211.0px">=СУММ(E608:AF608)</span>
<span class="cell" style="left:231px;top:199px;width:169.4px;transform:scaleX(0.9326)">=СУММ(E608:G608;I608:J608;L608)</span>
<span class="cell" style="left:391px;top:199px;width:171.0px;transform:scaleX(0.9241)">=AH608/1000000</span>
<span class="cell" style="left:551px;top:199px;width:246.6px;transform:scaleX(0.9326)">=AH608/AH607*AJ607</span>
<div class="" style="left:2px;top:216px;width:26px;height:17px;background:#c0c0c0;box-shadow:inset -1px -1px 0 #808080,inset 0 1px 0 #fff"></div>
<span class="cell" style="left:3.5px;top:216px;width:25.5px">609</span>
<div class="" style="left:229px;top:216px;width:554px;height:17px;background:#ffffcc"></div>
<div class="" style="left:28px;top:232px;width:201px;height:1px;background:#c0c0c0"></div>
<span class="cell" style="left:29px;top:216px;width:211.0px">=СУММ(E609:AF609)</span>
<span class="cell" style="left:231px;top:216px;width:169.4px;transform:scaleX(0.9326)">=СУММ(E609:G609;I609:J609;L609)</span>
<span class="cell" style="left:391px;top:216px;width:171.0px;transform:scaleX(0.9241)">=AH609/1000000</span>
<span class="cell" style="left:551px;top:216px;width:246.6px;transform:scaleX(0.9326)">=AH609/AH608*AJ608</span>
<div class="" style="left:2px;top:233px;width:26px;height:17px;background:#c0c0c0;box-shadow:inset -1px -1px 0 #808080,inset 0 1px 0 #fff"></div>
<span class="cell" style="left:3.5px;top:233px;width:25.5px">610</span>
<div class="" style="left:229px;top:233px;width:554px;height:17px;background:#ffffcc"></div>
<div class="" style="left:28px;top:249px;width:201px;height:1px;background:#c0c0c0"></div>
<span class="cell" style="left:29px;top:233px;width:211.0px">=СУММ(E610:AF610)</span>
<span class="cell" style="left:231px;top:233px;width:169.4px;transform:scaleX(0.9326)">=СУММ(E610:G610;I610:J610;L610)</span>
<span class="cell" style="left:391px;top:233px;width:171.0px;transform:scaleX(0.9241)">=AH610/1000000</span>
<span class="cell" style="left:551px;top:233px;width:246.6px;transform:scaleX(0.9326)">=AH610/AH609*AJ609</span>
<div class="" style="left:2px;top:250px;width:26px;height:17px;background:#c0c0c0;box-shadow:inset -1px -1px 0 #808080,inset 0 1px 0 #fff"></div>
<span class="cell" style="left:3.5px;top:250px;width:25.5px">611</span>
<div class="" style="left:229px;top:250px;width:554px;height:17px;background:#ffffcc"></div>
<div class="" style="left:28px;top:266px;width:201px;height:1px;background:#c0c0c0"></div>
<span class="cell" style="left:29px;top:250px;width:211.0px">=СУММ(E611:AF611)</span>
<span class="cell" style="left:231px;top:250px;width:169.4px;transform:scaleX(0.9326)">=СУММ(E611:G611;I611:J611;L611)</span>
<span class="cell" style="left:391px;top:250px;width:171.0px;transform:scaleX(0.9241)">=AH611/1000000</span>
<span class="cell" style="left:551px;top:250px;width:246.6px;transform:scaleX(0.9326)">=AH611/AH610*AJ610</span>
<div class="" style="left:2px;top:267px;width:26px;height:17px;background:#c0c0c0;box-shadow:inset -1px -1px 0 #808080,inset 0 1px 0 #fff"></div>
<span class="cell" style="left:3.5px;top:267px;width:25.5px">612</span>
<div class="" style="left:229px;top:267px;width:554px;height:17px;background:#ffffcc"></div>
<div class="" style="left:28px;top:283px;width:201px;height:1px;background:#c0c0c0"></div>
<span class="cell" style="left:29px;top:267px;width:211.0px">=СУММ(E612:AF612)</span>
<span class="cell" style="left:231px;top:267px;width:169.4px;transform:scaleX(0.9326)">=СУММ(E612:G612;I612:J612;L612)</span>
<span class="cell" style="left:391px;top:267px;width:171.0px;transform:scaleX(0.9241)">=AH612/1000000</span>
<span class="cell" style="left:551px;top:267px;width:246.6px;transform:scaleX(0.9326)">=AH612/AH611*AJ611</span>
<div class="" style="left:2px;top:284px;width:26px;height:17px;background:#c0c0c0;box-shadow:inset -1px -1px 0 #808080,inset 0 1px 0 #fff"></div>
<span class="cell" style="left:3.5px;top:284px;width:25.5px">613</span>
<div class="" style="left:229px;top:284px;width:554px;height:17px;background:#ffffcc"></div>
<div class="" style="left:28px;top:300px;width:201px;height:1px;background:#c0c0c0"></div>
<span class="cell" style="left:29px;top:284px;width:211.0px">=СУММ(E613:AF613)</span>
<span class="cell" style="left:231px;top:284px;width:169.4px;transform:scaleX(0.9326)">=СУММ(E613:G613;I613:J613;L613)</span>
<span class="cell" style="left:391px;top:284px;width:171.0px;transform:scaleX(0.9241)">=AH613/1000000</span>
<span class="cell" style="left:551px;top:284px;width:246.6px;transform:scaleX(0.9326)">=AH613/AH612*AJ612</span>
<div class="" style="left:2px;top:301px;width:26px;height:17px;background:#c0c0c0;box-shadow:inset -1px -1px 0 #808080,inset 0 1px 0 #fff"></div>
<span class="cell" style="left:3.5px;top:301px;width:25.5px">614</span>
<div class="" style="left:229px;top:301px;width:554px;height:17px;background:#ffffcc"></div>
<div class="" style="left:28px;top:317px;width:201px;height:1px;background:#c0c0c0"></div>
<span class="cell" style="left:29px;top:301px;width:211.0px">=СУММ(E614:AF614)</span>
<span class="cell" style="left:231px;top:301px;width:169.4px;transform:scaleX(0.9326)">=СУММ(E614:G614;I614:J614;L614)</span>
<span class="cell" style="left:391px;top:301px;width:171.0px;transform:scaleX(0.9241)">=AH614/1000000</span>
<span class="cell" style="left:551px;top:301px;width:246.6px;transform:scaleX(0.9326)">=AH614/AH613*AJ613</span>
<div class="" style="left:2px;top:318px;width:26px;height:17px;background:#c0c0c0;box-shadow:inset -1px -1px 0 #808080,inset 0 1px 0 #fff"></div>
<span class="cell" style="left:3.5px;top:318px;width:25.5px">615</span>
<div class="" style="left:229px;top:318px;width:554px;height:17px;background:#ffffcc"></div>
<div class="" style="left:28px;top:334px;width:201px;height:1px;background:#c0c0c0"></div>
<span class="cell" style="left:29px;top:318px;width:211.0px">=СУММ(E615:AF615)</span>
<span class="cell" style="left:231px;top:318px;width:169.4px;transform:scaleX(0.9326)">=СУММ(E615:G615;I615:J615;L615)</span>
<span class="cell" style="left:391px;top:318px;width:171.0px;transform:scaleX(0.9241)">=AH615/1000000</span>
<span class="cell" style="left:551px;top:318px;width:246.6px;transform:scaleX(0.9326)">=AH615/AH614*AJ614</span>
<div class="" style="left:2px;top:335px;width:26px;height:17px;background:#c0c0c0;box-shadow:inset -1px -1px 0 #808080,inset 0 1px 0 #fff"></div>
<span class="cell" style="left:3.5px;top:335px;width:25.5px">616</span>
<div class="" style="left:229px;top:335px;width:554px;height:17px;background:#ffffcc"></div>
<div class="" style="left:28px;top:351px;width:201px;height:1px;background:#c0c0c0"></div>
<span class="cell" style="left:29px;top:335px;width:211.0px">=СУММ(E616:AF616)</span>
<span class="cell" style="left:231px;top:335px;width:169.4px;transform:scaleX(0.9326)">=СУММ(E616:G616;I616:J616;L616)</span>
<span class="cell" style="left:391px;top:335px;width:171.0px;transform:scaleX(0.9241)">=AH616/1000000</span>
<span class="cell" style="left:551px;top:335px;width:246.6px;transform:scaleX(0.9326)">=AH616/AH615*AJ615</span>
<div class="" style="left:2px;top:352px;width:26px;height:17px;background:#c0c0c0;box-shadow:inset -1px -1px 0 #808080,inset 0 1px 0 #fff"></div>
<span class="cell" style="left:3.5px;top:352px;width:25.5px">617</span>
<div class="" style="left:229px;top:352px;width:554px;height:17px;background:#ffffcc"></div>
<div class="" style="left:28px;top:368px;width:201px;height:1px;background:#c0c0c0"></div>
<span class="cell" style="left:29px;top:352px;width:211.0px">=СУММ(E617:AF617)</span>
<span class="cell" style="left:231px;top:352px;width:169.4px;transform:scaleX(0.9326)">=СУММ(E617:G617;I617:J617;L617)</span>
<span class="cell" style="left:391px;top:352px;width:171.0px;transform:scaleX(0.9241)">=AH617/1000000</span>
<span class="cell" style="left:551px;top:352px;width:246.6px;transform:scaleX(0.9326)">=AH617/AH616*AJ616</span>
<div class="" style="left:2px;top:369px;width:26px;height:17px;background:#c0c0c0;box-shadow:inset -1px -1px 0 #808080,inset 0 1px 0 #fff"></div>
<span class="cell" style="left:3.5px;top:369px;width:25.5px">618</span>
<div class="" style="left:229px;top:369px;width:554px;height:17px;background:#ffffcc"></div>
<div class="" style="left:28px;top:385px;width:201px;height:1px;background:#c0c0c0"></div>
<span class="cell" style="left:29px;top:369px;width:211.0px">=СУММ(E618:AF618)</span>
<span class="cell" style="left:231px;top:369px;width:169.4px;transform:scaleX(0.9326)">=СУММ(E618:G618;I618:J618;L618)</span>
<span class="cell" style="left:391px;top:369px;width:171.0px;transform:scaleX(0.9241)">=AH618/1000000</span>
<span class="cell" style="left:551px;top:369px;width:246.6px;transform:scaleX(0.9326)">=AH618/AH617*AJ617</span>
<div class="" style="left:2px;top:386px;width:26px;height:17px;background:#c0c0c0;box-shadow:inset -1px -1px 0 #808080,inset 0 1px 0 #fff"></div>
<span class="cell" style="left:3.5px;top:386px;width:25.5px">619</span>
<div class="" style="left:229px;top:386px;width:554px;height:17px;background:#ffffcc"></div>
<div class="" style="left:28px;top:402px;width:201px;height:1px;background:#c0c0c0"></div>
<span class="cell" style="left:29px;top:386px;width:211.0px">=СУММ(E619:AF619)</span>
<span class="cell" style="left:231px;top:386px;width:169.4px;transform:scaleX(0.9326)">=СУММ(E619:G619;I619:J619;L619)</span>
<span class="cell" style="left:391px;top:386px;width:171.0px;transform:scaleX(0.9241)">=AH619/1000000</span>
<span class="cell" style="left:551px;top:386px;width:246.6px;transform:scaleX(0.9326)">=AH619/AH618*AJ618</span>
<div class="" style="left:2px;top:403px;width:26px;height:17px;background:#c0c0c0;box-shadow:inset -1px -1px 0 #808080,inset 0 1px 0 #fff"></div>
<span class="cell" style="left:3.5px;top:403px;width:25.5px">620</span>
<div class="" style="left:229px;top:403px;width:554px;height:17px;background:#ffffcc"></div>
<div class="" style="left:28px;top:419px;width:201px;height:1px;background:#c0c0c0"></div>
<span class="cell" style="left:29px;top:403px;width:211.0px">=СУММ(E620:AF620)</span>
<span class="cell" style="left:231px;top:403px;width:169.4px;transform:scaleX(0.9326)">=СУММ(E620:G620;I620:J620;L620)</span>
<span class="cell" style="left:391px;top:403px;width:171.0px;transform:scaleX(0.9241)">=AH620/1000000</span>
<span class="cell" style="left:551px;top:403px;width:246.6px;transform:scaleX(0.9326)">=AH620/AH619*AJ619</span>
<div class="" style="left:2px;top:420px;width:26px;height:17px;background:#c0c0c0;box-shadow:inset -1px -1px 0 #808080,inset 0 1px 0 #fff"></div>
<span class="cell" style="left:3.5px;top:420px;width:25.5px">621</span>
<div class="" style="left:229px;top:420px;width:554px;height:17px;background:#ffffcc"></div>
<div class="" style="left:28px;top:436px;width:201px;height:1px;background:#c0c0c0"></div>
<span class="cell" style="left:29px;top:420px;width:211.0px">=СУММ(E621:AF621)</span>
<span class="cell" style="left:231px;top:420px;width:169.4px;transform:scaleX(0.9326)">=СУММ(E621:G621;I621:J621;L621)</span>
<span class="cell" style="left:391px;top:420px;width:171.0px;transform:scaleX(0.9241)">=AH621/1000000</span>
<span class="cell" style="left:551px;top:420px;width:246.6px;transform:scaleX(0.9326)">=AH621/AH620*AJ620</span>
<div class="" style="left:2px;top:437px;width:26px;height:17px;background:#c0c0c0;box-shadow:inset -1px -1px 0 #808080,inset 0 1px 0 #fff"></div>
<span class="cell" style="left:3.5px;top:437px;width:25.5px">622</span>
<div class="" style="left:229px;top:437px;width:554px;height:17px;background:#ffffcc"></div>
<div class="" style="left:28px;top:453px;width:201px;height:1px;background:#c0c0c0"></div>
<span class="cell" style="left:29px;top:437px;width:211.0px">=СУММ(E622:AF622)</span>
<span class="cell" style="left:231px;top:437px;width:169.4px;transform:scaleX(0.9326)">=СУММ(E622:G622;I622:J622;L622)</span>
<span class="cell" style="left:391px;top:437px;width:171.0px;transform:scaleX(0.9241)">=AH622/1000000</span>
<span class="cell" style="left:551px;top:437px;width:246.6px;transform:scaleX(0.9326)">=AH622/AH621*AJ621</span>
<div class="" style="left:2px;top:454px;width:26px;height:17px;background:#c0c0c0;box-shadow:inset -1px -1px 0 #808080,inset 0 1px 0 #fff"></div>
<span class="cell" style="left:3.5px;top:454px;width:25.5px">623</span>
<div class="" style="left:229px;top:454px;width:554px;height:17px;background:#ffffcc"></div>
<div class="" style="left:28px;top:470px;width:201px;height:1px;background:#c0c0c0"></div>
<span class="cell" style="left:29px;top:454px;width:211.0px">=СУММ(E623:AF623)</span>
<span class="cell" style="left:231px;top:454px;width:169.4px;transform:scaleX(0.9326)">=СУММ(E623:G623;I623:J623;L623)</span>
<span class="cell" style="left:391px;top:454px;width:171.0px;transform:scaleX(0.9241)">=AH623/1000000</span>
<span class="cell" style="left:551px;top:454px;width:246.6px;transform:scaleX(0.9326)">=AH623/AH622*AJ622</span>
<div class="" style="left:2px;top:471px;width:26px;height:17px;background:#c0c0c0;box-shadow:inset -1px -1px 0 #808080,inset 0 1px 0 #fff"></div>
<span class="cell" style="left:3.5px;top:471px;width:25.5px">624</span>
<div class="" style="left:28px;top:487px;width:755px;height:1px;background:#c0c0c0"></div>
<div class="" style="left:229px;top:471px;width:1px;height:17px;background:#c0c0c0"></div>
<div class="" style="left:389px;top:471px;width:1px;height:17px;background:#c0c0c0"></div>
<div class="" style="left:549px;top:471px;width:1px;height:17px;background:#c0c0c0"></div>
<div class="" style="left:2px;top:488px;width:26px;height:17px;background:#c0c0c0;box-shadow:inset -1px -1px 0 #808080,inset 0 1px 0 #fff"></div>
<span class="cell" style="left:3.5px;top:488px;width:25.5px">625</span>
<div class="" style="left:28px;top:504px;width:755px;height:1px;background:#c0c0c0"></div>
<div class="" style="left:229px;top:488px;width:1px;height:17px;background:#c0c0c0"></div>
<div class="" style="left:389px;top:488px;width:1px;height:17px;background:#c0c0c0"></div>
<div class="" style="left:549px;top:488px;width:1px;height:17px;background:#c0c0c0"></div>
<div class="" style="left:2px;top:505px;width:26px;height:17px;background:#c0c0c0;box-shadow:inset -1px -1px 0 #808080,inset 0 1px 0 #fff"></div>
<span class="cell" style="left:3.5px;top:505px;width:25.5px">626</span>
<div class="" style="left:28px;top:521px;width:755px;height:1px;background:#c0c0c0"></div>
<div class="" style="left:229px;top:505px;width:1px;height:17px;background:#c0c0c0"></div>
<div class="" style="left:389px;top:505px;width:1px;height:17px;background:#c0c0c0"></div>
<div class="" style="left:549px;top:505px;width:1px;height:17px;background:#c0c0c0"></div>
<div class="" style="left:2px;top:522px;width:26px;height:17px;background:#c0c0c0;box-shadow:inset -1px -1px 0 #808080,inset 0 1px 0 #fff"></div>
<span class="cell" style="left:3.5px;top:522px;width:25.5px">627</span>
<div class="" style="left:28px;top:538px;width:755px;height:1px;background:#c0c0c0"></div>
<div class="" style="left:229px;top:522px;width:1px;height:17px;background:#c0c0c0"></div>
<div class="" style="left:389px;top:522px;width:1px;height:17px;background:#c0c0c0"></div>
<div class="" style="left:549px;top:522px;width:1px;height:17px;background:#c0c0c0"></div>
<div class="" style="left:0px;top:536px;width:800px;height:64px;background:#c0c0c0"></div>
<div class="sh" style="left:2px;top:536px;width:781px;height:1px;"></div>
<div class="dither" style="left:783px;top:113px;width:16px;height:423px;"></div>
<div class="vsb" style="left:783px;top:113px;width:16px;height:16px;"></div>
<svg style="left:783px;top:113px" width="16" height="10" viewBox="0 0 16 10" shape-rendering="crispEdges"><rect x="7" y="6" width="1" height="1" fill="#000"/><rect x="6" y="7" width="3" height="1" fill="#000"/><rect x="5" y="8" width="5" height="1" fill="#000"/><rect x="4" y="9" width="7" height="1" fill="#000"/></svg>
<div class="vsb" style="left:783px;top:520px;width:16px;height:16px;"></div>
<svg style="left:783px;top:520px" width="16" height="10" viewBox="0 0 16 10" shape-rendering="crispEdges"><rect x="4" y="6" width="7" height="1" fill="#000"/><rect x="5" y="7" width="5" height="1" fill="#000"/><rect x="6" y="8" width="3" height="1" fill="#000"/><rect x="7" y="9" width="1" height="1" fill="#000"/></svg>
<div class="vsb" style="left:783px;top:508px;width:16px;height:12px;"></div>
<div class="" style="left:799px;top:113px;width:1px;height:440px;background:#c0c0c0"></div>
<div class="" style="left:0px;top:537px;width:800px;height:16px;background:#c0c0c0"></div>
<div class="bk" style="left:1px;top:537px;width:1px;height:16px;"></div>
<div class="" style="left:2px;top:537px;width:15px;height:15px;background:#c0c0c0;box-shadow:inset 1px 1px 0 #fff,inset -1px -1px 0 #808080"></div>
<svg style="left:2px;top:537px" width="15" height="12" viewBox="0 0 15 12" shape-rendering="crispEdges"><rect x="2" y="3" width="2" height="1" fill="#000"/><rect x="8" y="3" width="1" height="1" fill="#000"/><rect x="2" y="4" width="2" height="1" fill="#000"/><rect x="7" y="4" width="2" height="1" fill="#000"/><rect x="2" y="5" width="2" height="1" fill="#000"/><rect x="6" y="5" width="3" height="1" fill="#000"/><rect x="2" y="6" width="2" height="1" fill="#000"/><rect x="5" y="6" width="4" height="1" fill="#000"/><rect x="2" y="7" width="7" height="1" fill="#000"/><rect x="2" y="8" width="2" height="1" fill="#000"/><rect x="5" y="8" width="4" height="1" fill="#000"/><rect x="2" y="9" width="2" height="1" fill="#000"/><rect x="6" y="9" width="3" height="1" fill="#000"/><rect x="2" y="10" width="2" height="1" fill="#000"/><rect x="7" y="10" width="2" height="1" fill="#000"/><rect x="2" y="11" width="2" height="1" fill="#000"/><rect x="8" y="11" width="1" height="1" fill="#000"/></svg>
<div class="" style="left:17px;top:537px;width:15px;height:15px;background:#c0c0c0;box-shadow:inset 1px 1px 0 #fff,inset -1px -1px 0 #808080"></div>
<svg style="left:17px;top:537px" width="15" height="12" viewBox="0 0 15 12" shape-rendering="crispEdges"><rect x="8" y="3" width="1" height="1" fill="#000"/><rect x="7" y="4" width="2" height="1" fill="#000"/><rect x="6" y="5" width="3" height="1" fill="#000"/><rect x="5" y="6" width="4" height="1" fill="#000"/><rect x="4" y="7" width="5" height="1" fill="#000"/><rect x="5" y="8" width="4" height="1" fill="#000"/><rect x="6" y="9" width="3" height="1" fill="#000"/><rect x="7" y="10" width="2" height="1" fill="#000"/><rect x="8" y="11" width="1" height="1" fill="#000"/></svg>
<div class="" style="left:32px;top:537px;width:15px;height:15px;background:#c0c0c0;box-shadow:inset 1px 1px 0 #fff,inset -1px -1px 0 #808080"></div>
<svg style="left:32px;top:537px" width="15" height="12" viewBox="0 0 15 12" shape-rendering="crispEdges"><rect x="4" y="3" width="1" height="1" fill="#000"/><rect x="4" y="4" width="2" height="1" fill="#000"/><rect x="4" y="5" width="3" height="1" fill="#000"/><rect x="4" y="6" width="4" height="1" fill="#000"/><rect x="4" y="7" width="5" height="1" fill="#000"/><rect x="4" y="8" width="4" height="1" fill="#000"/><rect x="4" y="9" width="3" height="1" fill="#000"/><rect x="4" y="10" width="2" height="1" fill="#000"/><rect x="4" y="11" width="1" height="1" fill="#000"/></svg>
<div class="" style="left:47px;top:537px;width:15px;height:15px;background:#c0c0c0;box-shadow:inset 1px 1px 0 #fff,inset -1px -1px 0 #808080"></div>
<svg style="left:47px;top:537px" width="15" height="12" viewBox="0 0 15 12" shape-rendering="crispEdges"><rect x="4" y="3" width="1" height="1" fill="#000"/><rect x="10" y="3" width="2" height="1" fill="#000"/><rect x="4" y="4" width="2" height="1" fill="#000"/><rect x="10" y="4" width="2" height="1" fill="#000"/><rect x="4" y="5" width="3" height="1" fill="#000"/><rect x="10" y="5" width="2" height="1" fill="#000"/><rect x="4" y="6" width="4" height="1" fill="#000"/><rect x="10" y="6" width="2" height="1" fill="#000"/><rect x="4" y="7" width="5" height="1" fill="#000"/><rect x="10" y="7" width="2" height="1" fill="#000"/><rect x="4" y="8" width="4" height="1" fill="#000"/><rect x="10" y="8" width="2" height="1" fill="#000"/><rect x="4" y="9" width="3" height="1" fill="#000"/><rect x="10" y="9" width="2" height="1" fill="#000"/><rect x="4" y="10" width="2" height="1" fill="#000"/><rect x="10" y="10" width="2" height="1" fill="#000"/><rect x="4" y="11" width="1" height="1" fill="#000"/><rect x="10" y="11" width="2" height="1" fill="#000"/></svg>
<svg style="left:60px;top:537px" width="408" height="16" viewBox="60 537 408 16"><rect x="60" y="537" width="408" height="16" fill="#c0c0c0"/><path d="M60 551.5 H468" stroke="#808080" stroke-width="1"/><path d="M62.5 551 L69.0 537.5" stroke="#000" stroke-width="1.2" fill="none"/><path d="M65.5 545 L68.7 551" stroke="#000" stroke-width="1.2" fill="none"/><path d="M96 551 L102.5 537.5" stroke="#000" stroke-width="1.2" fill="none"/><path d="M99 545 L102.2 551" stroke="#000" stroke-width="1.2" fill="none"/><path d="M160 551 L166.5 537.5" stroke="#000" stroke-width="1.2" fill="none"/><path d="M163 545 L166.2 551" stroke="#000" stroke-width="1.2" fill="none"/><path d="M227 551 L233.5 537.5" stroke="#000" stroke-width="1.2" fill="none"/><path d="M230 545 L233.2 551" stroke="#000" stroke-width="1.2" fill="none"/><path d="M258 551 L264.5 537.5" stroke="#000" stroke-width="1.2" fill="none"/><path d="M261 545 L264.2 551" stroke="#000" stroke-width="1.2" fill="none"/><path d="M317 551 L323.5 537.5" stroke="#000" stroke-width="1.2" fill="none"/><path d="M320 545 L323.2 551" stroke="#000" stroke-width="1.2" fill="none"/><path d="M381 537 L388.5 551 L437 551 L444 537 Z" fill="#fff" stroke="none"/><path d="M381.5 537.5 L388.5 550.5 L437 550.5 L444 537.5" fill="none" stroke="#000" stroke-width="1.2"/><path d="M437 551 L443.5 537.5" stroke="#000" stroke-width="1.2" fill="none"/></svg>
<span class="t" style="left:72.5px;top:539px;font-size:12px;transform:scaleX(0.7925);transform-origin:0 0">KAZ</span>
<span class="t" style="left:108.75px;top:539px;font-size:12px;transform:scaleX(0.8871);transform-origin:0 0">Argymak</span>
<span class="t" style="left:172.5px;top:539px;font-size:12px;transform:scaleX(0.8778);transform-origin:0 0">Minturkun</span>
<span class="t" style="left:237px;top:539px;font-size:12px;transform:scaleX(0.7754);transform-origin:0 0">Nur</span>
<span class="t" style="left:271px;top:539px;font-size:12px;transform:scaleX(0.8503);transform-origin:0 0">Telecom</span>
<span class="t" style="left:328.75px;top:539px;font-size:12px;transform:scaleX(0.8759);transform-origin:0 0">Raznoopt</span>
<span class="t" style="left:390px;top:539px;font-size:12px;font-weight:bold;transform:scaleX(0.9956);transform-origin:0 0">Индекс</span>
<div class="" style="left:447px;top:538px;width:20px;height:13px;overflow:hidden"><span class="t" style="left:0.5px;top:1px;font-size:12px;transform:scaleX(0.9567);transform-origin:0 0">Sheet</span></div>
<div class="" style="left:467px;top:537px;width:7px;height:16px;background:#c0c0c0"></div>
<div class="" style="left:468px;top:537px;width:4px;height:15px;background:#c0c0c0;box-shadow:inset 1px 0 0 #fff,inset -1px 0 0 #808080"></div>
<div class="bk" style="left:472px;top:536px;width:1px;height:15px;"></div>
<div class="dither" style="left:473px;top:536px;width:310px;height:15px;"></div>
<div class="hsb" style="left:473px;top:536px;width:16px;height:15px;"></div>
<svg style="left:473px;top:536px" width="15" height="11" viewBox="0 0 15 11" shape-rendering="crispEdges"><rect x="8" y="4" width="1" height="1" fill="#000"/><rect x="7" y="5" width="2" height="1" fill="#000"/><rect x="6" y="6" width="3" height="1" fill="#000"/><rect x="5" y="7" width="4" height="1" fill="#000"/><rect x="6" y="8" width="3" height="1" fill="#000"/><rect x="7" y="9" width="2" height="1" fill="#000"/><rect x="8" y="10" width="1" height="1" fill="#000"/></svg>
<div class="hsb" style="left:768px;top:536px;width:15px;height:15px;"></div>
<svg style="left:768px;top:536px" width="15" height="11" viewBox="0 0 15 11" shape-rendering="crispEdges"><rect x="6" y="4" width="1" height="1" fill="#000"/><rect x="6" y="5" width="2" height="1" fill="#000"/><rect x="6" y="6" width="3" height="1" fill="#000"/><rect x="6" y="7" width="4" height="1" fill="#000"/><rect x="6" y="8" width="3" height="1" fill="#000"/><rect x="6" y="9" width="2" height="1" fill="#000"/><rect x="6" y="10" width="1" height="1" fill="#000"/></svg>
<div class="hsb" style="left:617px;top:536px;width:20px;height:15px;"></div>
<div class="" style="left:783px;top:536px;width:17px;height:17px;background:#c0c0c0;border-top:1px solid #000;border-left:1px solid #000"></div>
<div class="hl" style="left:0px;top:553px;width:800px;height:1px;"></div>
<span class="t" style="left:6px;top:557px;font-size:13px;transform:scaleX(1.0335);transform-origin:0 0">Готово</span>
<div class="sunk" style="left:437px;top:556px;width:33px;height:15px;"></div>
<div class="sunk" style="left:472px;top:556px;width:132px;height:15px;"></div>
<div class="sunk" style="left:606px;top:556px;width:29px;height:15px;"></div>
<div class="sunk" style="left:637px;top:556px;width:34px;height:15px;"></div>
<div class="sunk" style="left:673px;top:556px;width:30px;height:15px;"></div>
<div class="sunk" style="left:705px;top:556px;width:33px;height:15px;"></div>
<div class="sunk" style="left:741px;top:556px;width:28px;height:15px;"></div>
<div class="sunk" style="left:772px;top:556px;width:23px;height:15px;"></div>
<span class="t" style="left:638px;top:557px;font-size:13px;transform:scaleX(0.8756);transform-origin:0 0">CAPS</span>
<span class="t" style="left:674px;top:557px;font-size:13px;transform:scaleX(0.8781);transform-origin:0 0">NUM</span>
<div class="sh" style="left:427px;top:555px;width:1px;height:17px;"></div>
<div class="hl" style="left:428px;top:555px;width:1px;height:17px;"></div>
<div class="hl" style="left:0px;top:573px;width:800px;height:1px;"></div>
<div class="raised" style="left:2px;top:576px;width:56px;height:22px;"></div>
<svg style="left:6px;top:580px" width="16" height="14" viewBox="0 0 16 14" shape-rendering="crispEdges"><rect x="10" y="0" width="3" height="1" fill="#000"/><rect x="7" y="1" width="8" height="1" fill="#000"/><rect x="0" y="2" width="1" height="1" fill="#000"/><rect x="2" y="2" width="7" height="1" fill="#000"/><rect x="9" y="2" width="1" height="1" fill="#ff0000"/><rect x="10" y="2" width="3" height="1" fill="#000"/><rect x="13" y="2" width="1" height="1" fill="#008000"/><rect x="14" y="2" width="2" height="1" fill="#000"/><rect x="2" y="3" width="6" height="1" fill="#000"/><rect x="8" y="3" width="2" height="1" fill="#ff0000"/><rect x="10" y="3" width="2" height="1" fill="#000"/><rect x="12" y="3" width="2" height="1" fill="#008000"/><rect x="14" y="3" width="2" height="1" fill="#000"/><rect x="4" y="4" width="4" height="1" fill="#000"/><rect x="8" y="4" width="2" height="1" fill="#ff0000"/><rect x="10" y="4" width="2" height="1" fill="#000"/><rect x="12" y="4" width="3" height="1" fill="#008000"/><rect x="15" y="4" width="1" height="1" fill="#000"/><rect x="0" y="5" width="1" height="1" fill="#ff0000"/><rect x="2" y="5" width="2" height="1" fill="#ff0000"/><rect x="5" y="5" width="2" height="1" fill="#ff0000"/><rect x="7" y="5" width="1" height="1" fill="#000"/><rect x="8" y="5" width="1" height="1" fill="#ff0000"/><rect x="9" y="5" width="4" height="1" fill="#000"/><rect x="13" y="5" width="2" height="1" fill="#008000"/><rect x="15" y="5" width="1" height="1" fill="#000"/><rect x="2" y="6" width="5" height="1" fill="#ff0000"/><rect x="7" y="6" width="9" height="1" fill="#000"/><rect x="4" y="7" width="5" height="1" fill="#000"/><rect x="9" y="7" width="1" height="1" fill="#0000ff"/><rect x="10" y="7" width="3" height="1" fill="#000"/><rect x="13" y="7" width="1" height="1" fill="#ffff00"/><rect x="14" y="7" width="2" height="1" fill="#000"/><rect x="0" y="8" width="1" height="1" fill="#0000ff"/><rect x="2" y="8" width="2" height="1" fill="#0000ff"/><rect x="5" y="8" width="2" height="1" fill="#0000ff"/><rect x="7" y="8" width="1" height="1" fill="#000"/><rect x="8" y="8" width="2" height="1" fill="#0000ff"/><rect x="10" y="8" width="2" height="1" fill="#000"/><rect x="12" y="8" width="2" height="1" fill="#ffff00"/><rect x="14" y="8" width="2" height="1" fill="#000"/><rect x="2" y="9" width="5" height="1" fill="#0000ff"/><rect x="7" y="9" width="1" height="1" fill="#000"/><rect x="8" y="9" width="2" height="1" fill="#0000ff"/><rect x="10" y="9" width="2" height="1" fill="#000"/><rect x="12" y="9" width="3" height="1" fill="#ffff00"/><rect x="15" y="9" width="1" height="1" fill="#000"/><rect x="4" y="10" width="4" height="1" fill="#000"/><rect x="8" y="10" width="1" height="1" fill="#0000ff"/><rect x="9" y="10" width="4" height="1" fill="#000"/><rect x="13" y="10" width="2" height="1" fill="#ffff00"/><rect x="15" y="10" width="1" height="1" fill="#000"/><rect x="0" y="11" width="1" height="1" fill="#000"/><rect x="2" y="11" width="2" height="1" fill="#000"/><rect x="5" y="11" width="11" height="1" fill="#000"/><rect x="2" y="12" width="7" height="1" fill="#000"/><rect x="11" y="12" width="5" height="1" fill="#000"/><rect x="6" y="13" width="2" height="1" fill="#000"/><rect x="14" y="13" width="2" height="1" fill="#000"/></svg>
<span class="t" style="left:25px;top:580px;font-weight:bold;font-size:12px;text-shadow:0.4px 0 #000;transform:scaleX(0.9932);transform-origin:0 0">Пуск</span>
<div class="raised" style="left:62px;top:576px;width:129px;height:22px;"></div>
<svg style="left:67px;top:579px" width="14" height="15" viewBox="0 0 14 15" shape-rendering="crispEdges"><rect x="2" y="0" width="4" height="1" fill="#000"/><rect x="1" y="1" width="1" height="1" fill="#000"/><rect x="2" y="1" width="1" height="1" fill="#ffff00"/><rect x="3" y="1" width="1" height="1" fill="#fff"/><rect x="4" y="1" width="1" height="1" fill="#ffff00"/><rect x="5" y="1" width="1" height="1" fill="#fff"/><rect x="6" y="1" width="1" height="1" fill="#000"/><rect x="0" y="2" width="14" height="1" fill="#000"/><rect x="0" y="3" width="1" height="1" fill="#000"/><rect x="1" y="3" width="1" height="1" fill="#fff"/><rect x="2" y="3" width="4" height="1" fill="#000"/><rect x="6" y="3" width="1" height="1" fill="#fff"/><rect x="7" y="3" width="1" height="1" fill="#ffff00"/><rect x="8" y="3" width="1" height="1" fill="#fff"/><rect x="9" y="3" width="1" height="1" fill="#ffff00"/><rect x="10" y="3" width="1" height="1" fill="#fff"/><rect x="11" y="3" width="1" height="1" fill="#ffff00"/><rect x="12" y="3" width="1" height="1" fill="#fff"/><rect x="13" y="3" width="1" height="1" fill="#000"/><rect x="0" y="4" width="2" height="1" fill="#000"/><rect x="2" y="4" width="1" height="1" fill="#c0c0c0"/><rect x="3" y="4" width="1" height="1" fill="#00ffff"/><rect x="4" y="4" width="1" height="1" fill="#fff"/><rect x="5" y="4" width="1" height="1" fill="#c0c0c0"/><rect x="6" y="4" width="1" height="1" fill="#000"/><rect x="7" y="4" width="1" height="1" fill="#ffff00"/><rect x="8" y="4" width="1" height="1" fill="#fff"/><rect x="9" y="4" width="1" height="1" fill="#ffff00"/><rect x="10" y="4" width="1" height="1" fill="#fff"/><rect x="11" y="4" width="2" height="1" fill="#ffff00"/><rect x="13" y="4" width="1" height="1" fill="#000"/><rect x="0" y="5" width="1" height="1" fill="#000"/><rect x="1" y="5" width="1" height="1" fill="#c0c0c0"/><rect x="2" y="5" width="1" height="1" fill="#00ffff"/><rect x="3" y="5" width="3" height="1" fill="#fff"/><rect x="6" y="5" width="1" height="1" fill="#c0c0c0"/><rect x="7" y="5" width="1" height="1" fill="#000"/><rect x="8" y="5" width="1" height="1" fill="#fff"/><rect x="9" y="5" width="1" height="1" fill="#ffff00"/><rect x="10" y="5" width="1" height="1" fill="#fff"/><rect x="11" y="5" width="1" height="1" fill="#ffff00"/><rect x="12" y="5" width="1" height="1" fill="#fff"/><rect x="13" y="5" width="1" height="1" fill="#000"/><rect x="0" y="6" width="1" height="1" fill="#000"/><rect x="1" y="6" width="1" height="1" fill="#c0c0c0"/><rect x="2" y="6" width="3" height="1" fill="#fff"/><rect x="5" y="6" width="1" height="1" fill="#00ffff"/><rect x="6" y="6" width="1" height="1" fill="#c0c0c0"/><rect x="7" y="6" width="1" height="1" fill="#000"/><rect x="8" y="6" width="1" height="1" fill="#ffff00"/><rect x="9" y="6" width="1" height="1" fill="#fff"/><rect x="10" y="6" width="1" height="1" fill="#ffff00"/><rect x="11" y="6" width="1" height="1" fill="#fff"/><rect x="12" y="6" width="1" height="1" fill="#ffff00"/><rect x="13" y="6" width="1" height="1" fill="#000"/><rect x="0" y="7" width="1" height="1" fill="#000"/><rect x="1" y="7" width="1" height="1" fill="#c0c0c0"/><rect x="2" y="7" width="2" height="1" fill="#fff"/><rect x="4" y="7" width="2" height="1" fill="#00ffff"/><rect x="6" y="7" width="1" height="1" fill="#c0c0c0"/><rect x="7" y="7" width="1" height="1" fill="#000"/><rect x="8" y="7" width="1" height="1" fill="#fff"/><rect x="9" y="7" width="1" height="1" fill="#ffff00"/><rect x="10" y="7" width="1" height="1" fill="#fff"/><rect x="11" y="7" width="1" height="1" fill="#ffff00"/><rect x="12" y="7" width="1" height="1" fill="#fff"/><rect x="13" y="7" width="1" height="1" fill="#000"/><rect x="0" y="8" width="2" height="1" fill="#000"/><rect x="2" y="8" width="1" height="1" fill="#c0c0c0"/><rect x="3" y="8" width="2" height="1" fill="#00ffff"/><rect x="5" y="8" width="1" height="1" fill="#c0c0c0"/><rect x="6" y="8" width="2" height="1" fill="#000"/><rect x="8" y="8" width="1" height="1" fill="#ffff00"/><rect x="9" y="8" width="1" height="1" fill="#fff"/><rect x="10" y="8" width="1" height="1" fill="#ffff00"/><rect x="11" y="8" width="1" height="1" fill="#fff"/><rect x="12" y="8" width="1" height="1" fill="#ffff00"/><rect x="13" y="8" width="1" height="1" fill="#000"/><rect x="0" y="9" width="1" height="1" fill="#000"/><rect x="1" y="9" width="1" height="1" fill="#ffff00"/><rect x="2" y="9" width="1" height="1" fill="#000"/><rect x="3" y="9" width="2" height="1" fill="#c0c0c0"/><rect x="5" y="9" width="1" height="1" fill="#000"/><rect x="6" y="9" width="2" height="1" fill="#0000ff"/><rect x="8" y="9" width="1" height="1" fill="#000"/><rect x="9" y="9" width="1" height="1" fill="#fff"/><rect x="10" y="9" width="1" height="1" fill="#ffff00"/><rect x="11" y="9" width="1" height="1" fill="#fff"/><rect x="12" y="9" width="1" height="1" fill="#ffff00"/><rect x="13" y="9" width="1" height="1" fill="#000"/><rect x="0" y="10" width="1" height="1" fill="#000"/><rect x="1" y="10" width="4" height="1" fill="#808000"/><rect x="5" y="10" width="2" height="1" fill="#000"/><rect x="7" y="10" width="2" height="1" fill="#0000ff"/><rect x="9" y="10" width="1" height="1" fill="#000"/><rect x="10" y="10" width="3" height="1" fill="#808000"/><rect x="13" y="10" width="1" height="1" fill="#000"/><rect x="0" y="11" width="8" height="1" fill="#000"/><rect x="8" y="11" width="2" height="1" fill="#0000ff"/><rect x="10" y="11" width="4" height="1" fill="#000"/><rect x="9" y="12" width="2" height="1" fill="#0000ff"/><rect x="11" y="12" width="1" height="1" fill="#000"/><rect x="10" y="13" width="2" height="1" fill="#0000ff"/><rect x="12" y="13" width="1" height="1" fill="#000"/><rect x="11" y="14" width="2" height="1" fill="#0000ff"/></svg>
<span class="t" style="left:85px;top:581px;font-size:12px;transform:scaleX(0.9261);transform-origin:0 0">Проводник - Кфб</span>
<div class="raised" style="left:194px;top:576px;width:129px;height:22px;"></div>
<span class="t" style="left:199px;top:578px;font-family:'Liberation Serif',serif;font-weight:bold;font-style:italic;font-size:17px;color:#00ffff;text-shadow:1px 0 #000,-1px 0 #000,0 1px #000,0 -1px #000,1px 1px #000;transform:scaleX(0.9256);transform-origin:0 0">W</span>
<span class="t" style="left:217px;top:581px;font-size:12px;transform:scaleX(0.8863);transform-origin:0 0">Microsoft Word - Гл...</span>
<div class="raised" style="left:326px;top:576px;width:129px;height:22px;"></div>
<svg style="left:331px;top:579px" width="14" height="15" viewBox="0 0 14 15" shape-rendering="crispEdges"><rect x="2" y="0" width="4" height="1" fill="#000"/><rect x="1" y="1" width="1" height="1" fill="#000"/><rect x="2" y="1" width="1" height="1" fill="#ffff00"/><rect x="3" y="1" width="1" height="1" fill="#fff"/><rect x="4" y="1" width="1" height="1" fill="#ffff00"/><rect x="5" y="1" width="1" height="1" fill="#fff"/><rect x="6" y="1" width="1" height="1" fill="#000"/><rect x="0" y="2" width="14" height="1" fill="#000"/><rect x="0" y="3" width="1" height="1" fill="#000"/><rect x="1" y="3" width="1" height="1" fill="#fff"/><rect x="2" y="3" width="4" height="1" fill="#000"/><rect x="6" y="3" width="1" height="1" fill="#fff"/><rect x="7" y="3" width="1" height="1" fill="#ffff00"/><rect x="8" y="3" width="1" height="1" fill="#fff"/><rect x="9" y="3" width="1" height="1" fill="#ffff00"/><rect x="10" y="3" width="1" height="1" fill="#fff"/><rect x="11" y="3" width="1" height="1" fill="#ffff00"/><rect x="12" y="3" width="1" height="1" fill="#fff"/><rect x="13" y="3" width="1" height="1" fill="#000"/><rect x="0" y="4" width="2" height="1" fill="#000"/><rect x="2" y="4" width="1" height="1" fill="#c0c0c0"/><rect x="3" y="4" width="1" height="1" fill="#00ffff"/><rect x="4" y="4" width="1" height="1" fill="#fff"/><rect x="5" y="4" width="1" height="1" fill="#c0c0c0"/><rect x="6" y="4" width="1" height="1" fill="#000"/><rect x="7" y="4" width="1" height="1" fill="#ffff00"/><rect x="8" y="4" width="1" height="1" fill="#fff"/><rect x="9" y="4" width="1" height="1" fill="#ffff00"/><rect x="10" y="4" width="1" height="1" fill="#fff"/><rect x="11" y="4" width="2" height="1" fill="#ffff00"/><rect x="13" y="4" width="1" height="1" fill="#000"/><rect x="0" y="5" width="1" height="1" fill="#000"/><rect x="1" y="5" width="1" height="1" fill="#c0c0c0"/><rect x="2" y="5" width="1" height="1" fill="#00ffff"/><rect x="3" y="5" width="3" height="1" fill="#fff"/><rect x="6" y="5" width="1" height="1" fill="#c0c0c0"/><rect x="7" y="5" width="1" height="1" fill="#000"/><rect x="8" y="5" width="1" height="1" fill="#fff"/><rect x="9" y="5" width="1" height="1" fill="#ffff00"/><rect x="10" y="5" width="1" height="1" fill="#fff"/><rect x="11" y="5" width="1" height="1" fill="#ffff00"/><rect x="12" y="5" width="1" height="1" fill="#fff"/><rect x="13" y="5" width="1" height="1" fill="#000"/><rect x="0" y="6" width="1" height="1" fill="#000"/><rect x="1" y="6" width="1" height="1" fill="#c0c0c0"/><rect x="2" y="6" width="3" height="1" fill="#fff"/><rect x="5" y="6" width="1" height="1" fill="#00ffff"/><rect x="6" y="6" width="1" height="1" fill="#c0c0c0"/><rect x="7" y="6" width="1" height="1" fill="#000"/><rect x="8" y="6" width="1" height="1" fill="#ffff00"/><rect x="9" y="6" width="1" height="1" fill="#fff"/><rect x="10" y="6" width="1" height="1" fill="#ffff00"/><rect x="11" y="6" width="1" height="1" fill="#fff"/><rect x="12" y="6" width="1" height="1" fill="#ffff00"/><rect x="13" y="6" width="1" height="1" fill="#000"/><rect x="0" y="7" width="1" height="1" fill="#000"/><rect x="1" y="7" width="1" height="1" fill="#c0c0c0"/><rect x="2" y="7" width="2" height="1" fill="#fff"/><rect x="4" y="7" width="2" height="1" fill="#00ffff"/><rect x="6" y="7" width="1" height="1" fill="#c0c0c0"/><rect x="7" y="7" width="1" height="1" fill="#000"/><rect x="8" y="7" width="1" height="1" fill="#fff"/><rect x="9" y="7" width="1" height="1" fill="#ffff00"/><rect x="10" y="7" width="1" height="1" fill="#fff"/><rect x="11" y="7" width="1" height="1" fill="#ffff00"/><rect x="12" y="7" width="1" height="1" fill="#fff"/><rect x="13" y="7" width="1" height="1" fill="#000"/><rect x="0" y="8" width="2" height="1" fill="#000"/><rect x="2" y="8" width="1" height="1" fill="#c0c0c0"/><rect x="3" y="8" width="2" height="1" fill="#00ffff"/><rect x="5" y="8" width="1" height="1" fill="#c0c0c0"/><rect x="6" y="8" width="2" height="1" fill="#000"/><rect x="8" y="8" width="1" height="1" fill="#ffff00"/><rect x="9" y="8" width="1" height="1" fill="#fff"/><rect x="10" y="8" width="1" height="1" fill="#ffff00"/><rect x="11" y="8" width="1" height="1" fill="#fff"/><rect x="12" y="8" width="1" height="1" fill="#ffff00"/><rect x="13" y="8" width="1" height="1" fill="#000"/><rect x="0" y="9" width="1" height="1" fill="#000"/><rect x="1" y="9" width="1" height="1" fill="#ffff00"/><rect x="2" y="9" width="1" height="1" fill="#000"/><rect x="3" y="9" width="2" height="1" fill="#c0c0c0"/><rect x="5" y="9" width="1" height="1" fill="#000"/><rect x="6" y="9" width="2" height="1" fill="#0000ff"/><rect x="8" y="9" width="1" height="1" fill="#000"/><rect x="9" y="9" width="1" height="1" fill="#fff"/><rect x="10" y="9" width="1" height="1" fill="#ffff00"/><rect x="11" y="9" width="1" height="1" fill="#fff"/><rect x="12" y="9" width="1" height="1" fill="#ffff00"/><rect x="13" y="9" width="1" height="1" fill="#000"/><rect x="0" y="10" width="1" height="1" fill="#000"/><rect x="1" y="10" width="4" height="1" fill="#808000"/><rect x="5" y="10" width="2" height="1" fill="#000"/><rect x="7" y="10" width="2" height="1" fill="#0000ff"/><rect x="9" y="10" width="1" height="1" fill="#000"/><rect x="10" y="10" width="3" height="1" fill="#808000"/><rect x="13" y="10" width="1" height="1" fill="#000"/><rect x="0" y="11" width="8" height="1" fill="#000"/><rect x="8" y="11" width="2" height="1" fill="#0000ff"/><rect x="10" y="11" width="4" height="1" fill="#000"/><rect x="9" y="12" width="2" height="1" fill="#0000ff"/><rect x="11" y="12" width="1" height="1" fill="#000"/><rect x="10" y="13" width="2" height="1" fill="#0000ff"/><rect x="12" y="13" width="1" height="1" fill="#000"/><rect x="11" y="14" width="2" height="1" fill="#0000ff"/></svg>
<span class="t" style="left:349px;top:581px;font-size:12px;transform:scaleX(0.9261);transform-origin:0 0">Проводник - Кфб</span>
<div class="raised" style="left:458px;top:576px;width:129px;height:22px;"></div>
<svg style="left:462px;top:581px" width="16" height="13" viewBox="0 0 16 13" shape-rendering="crispEdges"><rect x="0" y="0" width="6" height="1" fill="#000"/><rect x="10" y="0" width="5" height="1" fill="#000"/><rect x="0" y="1" width="1" height="1" fill="#000"/><rect x="1" y="1" width="4" height="1" fill="#fff"/><rect x="5" y="1" width="2" height="1" fill="#000"/><rect x="9" y="1" width="1" height="1" fill="#000"/><rect x="10" y="1" width="4" height="1" fill="#00ffff"/><rect x="14" y="1" width="1" height="1" fill="#000"/><rect x="1" y="2" width="1" height="1" fill="#000"/><rect x="2" y="2" width="4" height="1" fill="#00ffff"/><rect x="6" y="2" width="1" height="1" fill="#fff"/><rect x="7" y="2" width="1" height="1" fill="#000"/><rect x="9" y="2" width="1" height="1" fill="#000"/><rect x="10" y="2" width="3" height="1" fill="#00ffff"/><rect x="13" y="2" width="1" height="1" fill="#000"/><rect x="2" y="3" width="1" height="1" fill="#000"/><rect x="3" y="3" width="4" height="1" fill="#00ffff"/><rect x="7" y="3" width="1" height="1" fill="#fff"/><rect x="8" y="3" width="1" height="1" fill="#000"/><rect x="9" y="3" width="2" height="1" fill="#00ffff"/><rect x="11" y="3" width="1" height="1" fill="#008080"/><rect x="12" y="3" width="1" height="1" fill="#000"/><rect x="3" y="4" width="1" height="1" fill="#000"/><rect x="4" y="4" width="4" height="1" fill="#00ffff"/><rect x="8" y="4" width="1" height="1" fill="#fff"/><rect x="9" y="4" width="1" height="1" fill="#000"/><rect x="10" y="4" width="1" height="1" fill="#008080"/><rect x="11" y="4" width="1" height="1" fill="#000"/><rect x="4" y="5" width="1" height="1" fill="#000"/><rect x="5" y="5" width="4" height="1" fill="#00ffff"/><rect x="9" y="5" width="1" height="1" fill="#fff"/><rect x="10" y="5" width="1" height="1" fill="#000"/><rect x="3" y="6" width="3" height="1" fill="#000"/><rect x="6" y="6" width="4" height="1" fill="#00ffff"/><rect x="10" y="6" width="1" height="1" fill="#fff"/><rect x="11" y="6" width="4" height="1" fill="#000"/><rect x="2" y="7" width="1" height="1" fill="#000"/><rect x="3" y="7" width="2" height="1" fill="#00ffff"/><rect x="5" y="7" width="2" height="1" fill="#000"/><rect x="7" y="7" width="4" height="1" fill="#00ffff"/><rect x="11" y="7" width="1" height="1" fill="#fff"/><rect x="12" y="7" width="1" height="1" fill="#000"/><rect x="13" y="7" width="1" height="1" fill="#008080"/><rect x="14" y="7" width="1" height="1" fill="#000"/><rect x="1" y="8" width="1" height="1" fill="#000"/><rect x="2" y="8" width="2" height="1" fill="#00ffff"/><rect x="4" y="8" width="3" height="1" fill="#008080"/><rect x="7" y="8" width="1" height="1" fill="#000"/><rect x="8" y="8" width="4" height="1" fill="#00ffff"/><rect x="12" y="8" width="1" height="1" fill="#fff"/><rect x="13" y="8" width="2" height="1" fill="#000"/><rect x="0" y="9" width="1" height="1" fill="#000"/><rect x="1" y="9" width="2" height="1" fill="#00ffff"/><rect x="3" y="9" width="5" height="1" fill="#008080"/><rect x="8" y="9" width="1" height="1" fill="#000"/><rect x="9" y="9" width="4" height="1" fill="#00ffff"/><rect x="13" y="9" width="1" height="1" fill="#fff"/><rect x="14" y="9" width="1" height="1" fill="#000"/><rect x="0" y="10" width="1" height="1" fill="#000"/><rect x="1" y="10" width="8" height="1" fill="#fff"/><rect x="9" y="10" width="1" height="1" fill="#000"/><rect x="10" y="10" width="4" height="1" fill="#00ffff"/><rect x="14" y="10" width="1" height="1" fill="#fff"/><rect x="15" y="10" width="1" height="1" fill="#000"/><rect x="0" y="11" width="11" height="1" fill="#000"/><rect x="11" y="11" width="4" height="1" fill="#00ffff"/><rect x="15" y="11" width="1" height="1" fill="#000"/><rect x="11" y="12" width="5" height="1" fill="#000"/></svg>
<span class="t" style="left:481px;top:581px;font-size:12px;transform:scaleX(0.8736);transform-origin:0 0">Microsoft Excel - Ind...</span>
<div class="sunk" style="left:730px;top:576px;width:68px;height:22px;"></div>
<div class="" style="left:733px;top:579px;width:16px;height:16px;background:#000080"></div>
<span class="t" style="left:735px;top:580px;font-size:13px;color:#fff;transform:scaleX(0.7519);transform-origin:0 0">Ru</span>
<span class="t" style="left:761px;top:581px;font-size:12px;transform:scaleX(0.9091);transform-origin:0 0">12:22</span>
</div></body></html>
